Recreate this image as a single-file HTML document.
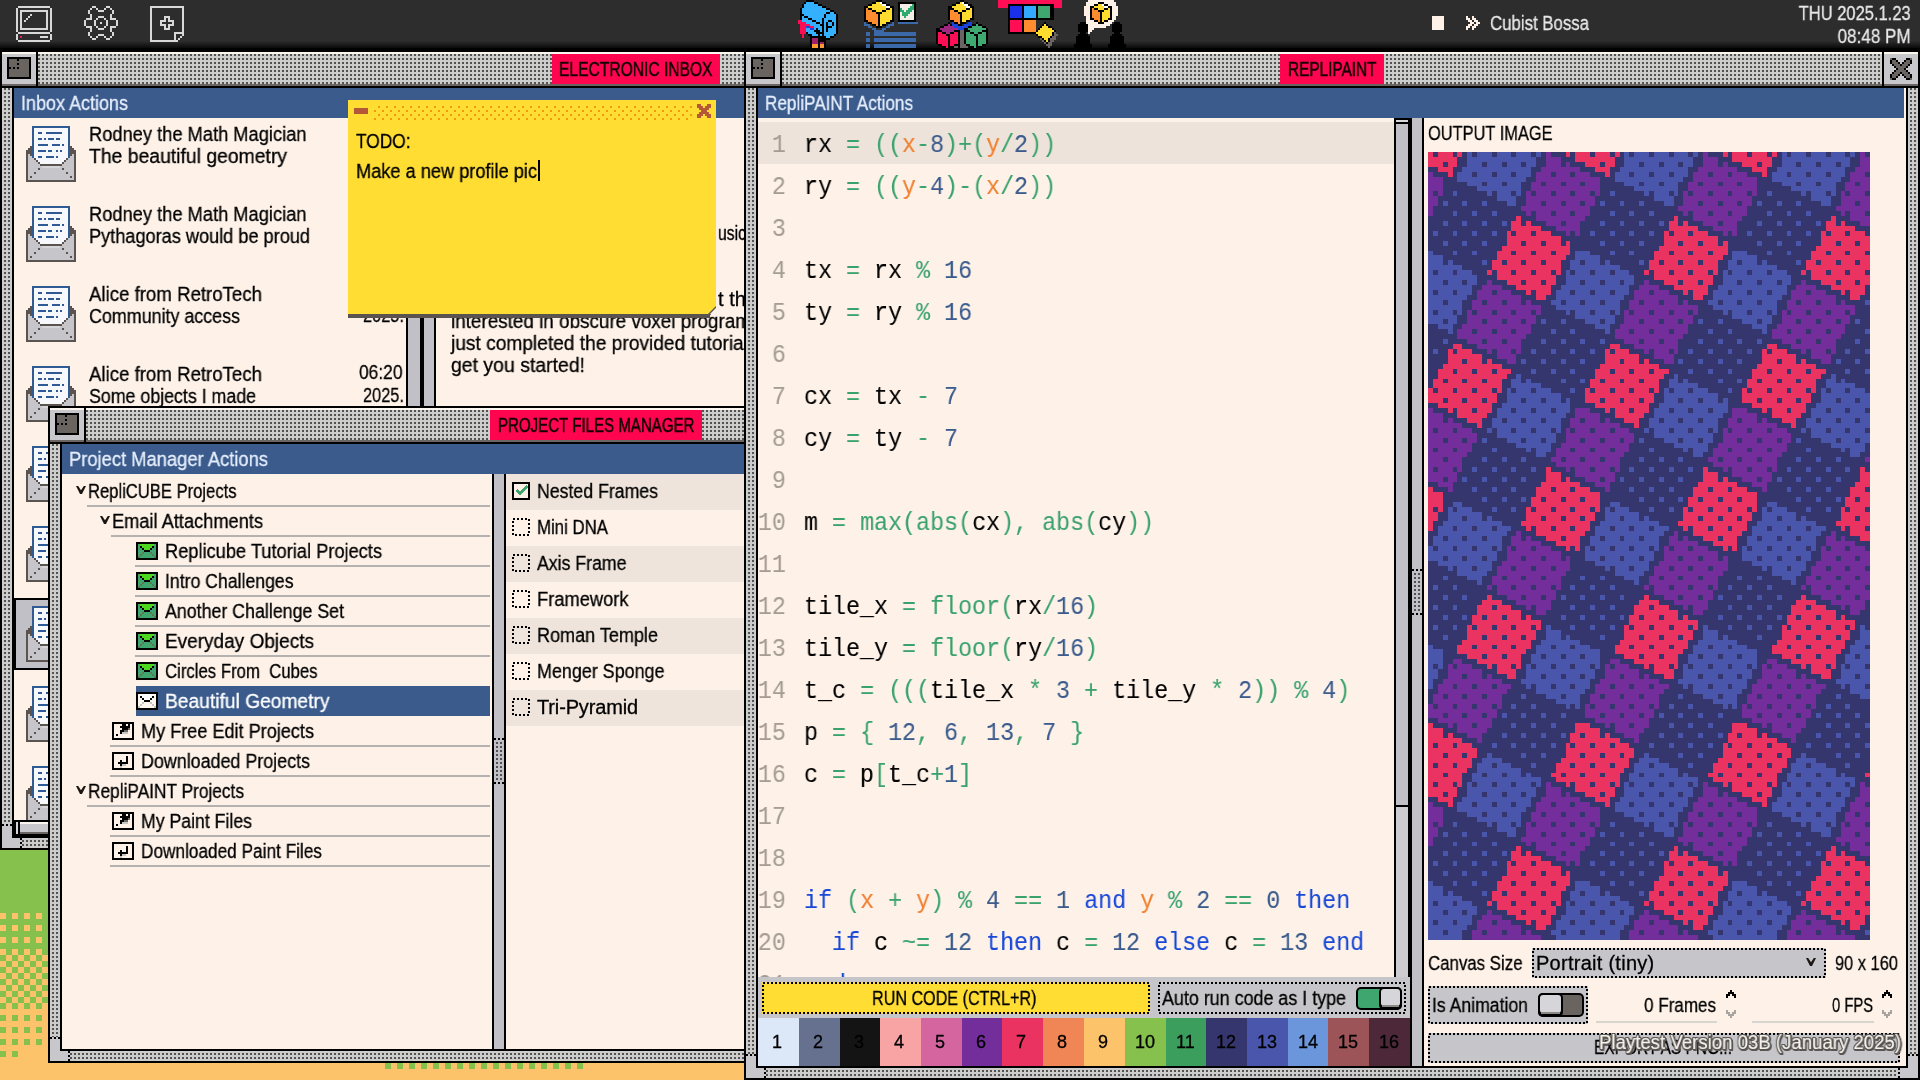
<!DOCTYPE html>
<html lang="en"><head><meta charset="utf-8"><title>RepliPAINT desktop</title>
<style>
html,body{margin:0;padding:0;background:#fcc36b;}
#screen{position:relative;width:1920px;height:1080px;overflow:hidden;background:#fcc36b;font-family:'Liberation Sans',sans-serif;}
#screen div,#screen span,#screen svg{position:absolute;}
#screen span{white-space:pre;-webkit-text-stroke:0.3px;will-change:transform;}
#screen div.clip{overflow:hidden;}
#screen div.clip span{-webkit-text-stroke:0.1px;}

</style></head>
<body>
<div id="screen">
<div style="left:0px;top:0px;width:1920px;height:1080px;background:#fcc36b;"></div>
<div style="left:0px;top:848px;width:60px;height:107px;background:#86c04d;"></div>
<div style="left:0;top:913px;width:48px;height:42px;background-image:linear-gradient(90deg,transparent 50%,#86c04d 50%),linear-gradient(#fcc36b 50%,#86c04d 50%);background-size:12px 12px;"></div>
<div style="left:0;top:955px;width:48px;height:48px;background-image:conic-gradient(#fcc36b 25%,#86c04d 0 50%,#fcc36b 0 75%,#86c04d 0);background-size:12px 12px;"></div>
<div style="left:0;top:1003px;width:48px;height:48px;background-image:linear-gradient(90deg,transparent 50%,#fcc36b 50%),linear-gradient(#86c04d 50%,#fcc36b 50%);background-size:12px 12px;"></div>
<div style="left:0px;top:1051px;width:6px;height:6px;background:#86c04d;"></div>
<div style="left:12px;top:1051px;width:6px;height:6px;background:#86c04d;"></div>
<div style="left:385px;top:1063px;width:6px;height:6px;background:#86c04d;"></div>
<div style="left:397px;top:1063px;width:6px;height:6px;background:#86c04d;"></div>
<div style="left:409px;top:1063px;width:6px;height:6px;background:#86c04d;"></div>
<div style="left:421px;top:1063px;width:6px;height:6px;background:#86c04d;"></div>
<div style="left:433px;top:1063px;width:6px;height:6px;background:#86c04d;"></div>
<div style="left:445px;top:1063px;width:6px;height:6px;background:#86c04d;"></div>
<div style="left:457px;top:1063px;width:6px;height:6px;background:#86c04d;"></div>
<div style="left:469px;top:1063px;width:6px;height:6px;background:#86c04d;"></div>
<div style="left:481px;top:1063px;width:6px;height:6px;background:#86c04d;"></div>
<div style="left:493px;top:1063px;width:6px;height:6px;background:#86c04d;"></div>
<div style="left:505px;top:1063px;width:6px;height:6px;background:#86c04d;"></div>
<div style="left:517px;top:1063px;width:6px;height:6px;background:#86c04d;"></div>
<div style="left:529px;top:1063px;width:6px;height:6px;background:#86c04d;"></div>
<div style="left:541px;top:1063px;width:6px;height:6px;background:#86c04d;"></div>
<div style="left:553px;top:1063px;width:6px;height:6px;background:#86c04d;"></div>
<div style="left:565px;top:1063px;width:6px;height:6px;background:#86c04d;"></div>
<div style="left:577px;top:1063px;width:6px;height:6px;background:#86c04d;"></div>
<div style="left:0px;top:0px;width:1920px;height:48px;background:#2d2d2d;"></div>
<div style="left:0px;top:41px;width:1920px;height:7px;background:linear-gradient(#2d2d2d,#0a0a0a);"></div>
<div style="left:0px;top:50px;width:746px;height:800px;background:#000;"></div>
<div style="left:2px;top:52px;width:744px;height:36px;background:#000;"></div>
<div style="left:2px;top:52px;width:34px;height:32px;background:#c8c8cc;"></div>
<div style="left:2px;top:52px;width:34px;height:2px;background:#fbf5f0;"></div>
<div style="left:2px;top:84px;width:34px;height:2px;background:#6a6563;"></div>
<div style="left:7px;top:57px;width:24px;height:22px;background:#000;"></div>
<div style="left:9px;top:59px;width:20px;height:18px;background:#6a6461;"></div>
<div style="left:17px;top:59px;width:2px;height:2px;background:#000;"></div>
<div style="left:17px;top:63px;width:2px;height:2px;background:#000;"></div>
<div style="left:9px;top:67px;width:2px;height:2px;background:#000;"></div>
<div style="left:13px;top:67px;width:2px;height:2px;background:#000;"></div>
<div style="left:17px;top:67px;width:2px;height:2px;background:#000;"></div>
<div style="left:38px;top:52px;width:708px;height:32px;background-color:#cccccc;background-image:linear-gradient(90deg,#cccccc 50%,transparent 50%),linear-gradient(#cccccc 50%,#52524e 50%);background-size:4px 4px;background-position:2px 0px;"></div>
<div style="left:38px;top:52px;width:708px;height:2px;background:#fbf5f0;"></div>
<div style="left:38px;top:84px;width:708px;height:2px;background:#6a6563;"></div>
<div style="left:552px;top:54px;width:168px;height:30px;background:#ff0550;"></div>
<span style="left:559px;top:59.07px;font:normal 20px/1 'Liberation Sans',sans-serif;color:#140006;transform:scaleX(0.7804);transform-origin:left center;-webkit-text-stroke:0.5px #140006;">ELECTRONIC INBOX</span>
<div style="left:2px;top:88px;width:10px;height:750px;background-color:#cccccc;background-image:linear-gradient(90deg,#cccccc 50%,transparent 50%),linear-gradient(#cccccc 50%,#52524e 50%);background-size:4px 4px;background-position:0px 2px;"></div>
<div style="left:14px;top:88px;width:732px;height:30px;background:#3a5b8c;"></div>
<span style="left:21px;top:93.07px;font:normal 20px/1 'Liberation Sans',sans-serif;color:#e6eefc;transform:scaleX(0.8994);transform-origin:left center;">Inbox Actions</span>
<div style="left:14px;top:118px;width:732px;height:702px;background:#fdf1e8;"></div>
<svg style="left:26px;top:126px" width="50" height="56" viewBox="0 0 25 28" shape-rendering="crispEdges"><path fill="#2f5a94" d="M3 0h19v1h-19zM3 1h1v1h-1zM21 1h1v1h-1zM3 2h1v1h-1zM21 2h1v1h-1zM3 3h1v1h-1zM6 3h2v1h-2zM10 3h8v1h-8zM21 3h1v1h-1zM3 4h1v1h-1zM21 4h1v1h-1zM3 5h1v1h-1zM21 5h1v1h-1zM3 6h1v1h-1zM6 6h2v1h-2zM9 6h1v1h-1zM11 6h3v1h-3zM15 6h2v1h-2zM21 6h1v1h-1zM3 7h1v1h-1zM21 7h1v1h-1zM3 8h1v1h-1zM21 8h1v1h-1zM3 9h1v1h-1zM6 9h5v1h-5zM13 9h4v1h-4zM18 9h1v1h-1zM21 9h1v1h-1zM3 10h1v1h-1zM21 10h1v1h-1zM3 11h1v1h-1zM21 11h1v1h-1zM3 12h1v1h-1zM6 12h4v1h-4zM11 12h2v1h-2zM15 12h1v1h-1zM17 12h1v1h-1zM21 12h1v1h-1zM3 13h1v1h-1zM21 13h1v1h-1zM3 14h1v1h-1zM21 14h1v1h-1zM3 15h1v1h-1zM6 15h2v1h-2zM10 15h4v1h-4zM15 15h1v1h-1zM21 15h1v1h-1z"/><path fill="#f6f8fc" d="M4 1h17v1h-17zM4 2h17v1h-17zM4 3h2v1h-2zM8 3h2v1h-2zM18 3h3v1h-3zM4 4h17v1h-17zM4 5h17v1h-17zM4 6h2v1h-2zM8 6h1v1h-1zM10 6h1v1h-1zM14 6h1v1h-1zM17 6h4v1h-4zM4 7h17v1h-17zM4 8h17v1h-17zM4 9h2v1h-2zM11 9h2v1h-2zM17 9h1v1h-1zM19 9h2v1h-2zM4 10h17v1h-17zM4 11h17v1h-17zM4 12h2v1h-2zM10 12h1v1h-1zM13 12h2v1h-2zM16 12h1v1h-1zM18 12h3v1h-3zM4 13h17v1h-17zM4 14h17v1h-17zM4 15h2v1h-2zM8 15h2v1h-2zM14 15h1v1h-1zM16 15h5v1h-5zM5 16h15v1h-15zM6 17h13v1h-13zM7 18h11v1h-11z"/><path fill="#5a5350" d="M2 10h1v1h-1zM22 10h1v1h-1zM1 11h2v1h-2zM22 11h2v1h-2zM0 12h3v1h-3zM22 12h3v1h-3zM0 13h3v1h-3zM22 13h3v1h-3zM0 14h1v1h-1zM2 14h1v1h-1zM22 14h1v1h-1zM24 14h1v1h-1zM0 15h1v1h-1zM24 15h1v1h-1zM0 16h1v1h-1zM4 16h1v1h-1zM20 16h1v1h-1zM24 16h1v1h-1zM0 17h1v1h-1zM5 17h1v1h-1zM19 17h1v1h-1zM24 17h1v1h-1zM0 18h1v1h-1zM6 18h1v1h-1zM18 18h1v1h-1zM24 18h1v1h-1zM0 19h1v1h-1zM7 19h11v1h-11zM24 19h1v1h-1zM0 20h1v1h-1zM24 20h1v1h-1zM0 21h1v1h-1zM6 21h1v1h-1zM18 21h1v1h-1zM24 21h1v1h-1zM0 22h1v1h-1zM24 22h1v1h-1zM0 23h1v1h-1zM4 23h1v1h-1zM20 23h1v1h-1zM24 23h1v1h-1zM0 24h1v1h-1zM24 24h1v1h-1zM0 25h1v1h-1zM2 25h1v1h-1zM22 25h1v1h-1zM24 25h1v1h-1zM0 26h1v1h-1zM24 26h1v1h-1zM0 27h25v1h-25z"/><path fill="#c6c6ca" d="M1 14h1v1h-1zM23 14h1v1h-1zM1 15h2v1h-2zM22 15h2v1h-2zM1 16h3v1h-3zM21 16h3v1h-3zM1 17h4v1h-4zM20 17h4v1h-4zM1 18h5v1h-5zM19 18h5v1h-5zM1 19h6v1h-6zM18 19h6v1h-6zM1 20h7v1h-7zM17 20h7v1h-7zM1 21h5v1h-5zM7 21h11v1h-11zM19 21h5v1h-5zM1 22h23v1h-23zM1 23h3v1h-3zM5 23h15v1h-15zM21 23h3v1h-3zM1 24h23v1h-23zM1 25h1v1h-1zM3 25h19v1h-19zM23 25h1v1h-1zM1 26h23v1h-23z"/><path fill="#d6d6da" d="M8 20h9v1h-9z"/></svg>
<span style="left:89px;top:123.57px;font:normal 20px/1 'Liberation Sans',sans-serif;color:#000;transform:scaleX(0.9142);transform-origin:left center;">Rodney the Math Magician</span>
<span style="left:89px;top:145.57px;font:normal 20px/1 'Liberation Sans',sans-serif;color:#000;transform:scaleX(0.9679);transform-origin:left center;">The beautiful geometry</span>
<svg style="left:26px;top:206px" width="50" height="56" viewBox="0 0 25 28" shape-rendering="crispEdges"><path fill="#2f5a94" d="M3 0h19v1h-19zM3 1h1v1h-1zM21 1h1v1h-1zM3 2h1v1h-1zM21 2h1v1h-1zM3 3h1v1h-1zM6 3h2v1h-2zM10 3h8v1h-8zM21 3h1v1h-1zM3 4h1v1h-1zM21 4h1v1h-1zM3 5h1v1h-1zM21 5h1v1h-1zM3 6h1v1h-1zM6 6h2v1h-2zM9 6h1v1h-1zM11 6h3v1h-3zM15 6h2v1h-2zM21 6h1v1h-1zM3 7h1v1h-1zM21 7h1v1h-1zM3 8h1v1h-1zM21 8h1v1h-1zM3 9h1v1h-1zM6 9h5v1h-5zM13 9h4v1h-4zM18 9h1v1h-1zM21 9h1v1h-1zM3 10h1v1h-1zM21 10h1v1h-1zM3 11h1v1h-1zM21 11h1v1h-1zM3 12h1v1h-1zM6 12h4v1h-4zM11 12h2v1h-2zM15 12h1v1h-1zM17 12h1v1h-1zM21 12h1v1h-1zM3 13h1v1h-1zM21 13h1v1h-1zM3 14h1v1h-1zM21 14h1v1h-1zM3 15h1v1h-1zM6 15h2v1h-2zM10 15h4v1h-4zM15 15h1v1h-1zM21 15h1v1h-1z"/><path fill="#f6f8fc" d="M4 1h17v1h-17zM4 2h17v1h-17zM4 3h2v1h-2zM8 3h2v1h-2zM18 3h3v1h-3zM4 4h17v1h-17zM4 5h17v1h-17zM4 6h2v1h-2zM8 6h1v1h-1zM10 6h1v1h-1zM14 6h1v1h-1zM17 6h4v1h-4zM4 7h17v1h-17zM4 8h17v1h-17zM4 9h2v1h-2zM11 9h2v1h-2zM17 9h1v1h-1zM19 9h2v1h-2zM4 10h17v1h-17zM4 11h17v1h-17zM4 12h2v1h-2zM10 12h1v1h-1zM13 12h2v1h-2zM16 12h1v1h-1zM18 12h3v1h-3zM4 13h17v1h-17zM4 14h17v1h-17zM4 15h2v1h-2zM8 15h2v1h-2zM14 15h1v1h-1zM16 15h5v1h-5zM5 16h15v1h-15zM6 17h13v1h-13zM7 18h11v1h-11z"/><path fill="#5a5350" d="M2 10h1v1h-1zM22 10h1v1h-1zM1 11h2v1h-2zM22 11h2v1h-2zM0 12h3v1h-3zM22 12h3v1h-3zM0 13h3v1h-3zM22 13h3v1h-3zM0 14h1v1h-1zM2 14h1v1h-1zM22 14h1v1h-1zM24 14h1v1h-1zM0 15h1v1h-1zM24 15h1v1h-1zM0 16h1v1h-1zM4 16h1v1h-1zM20 16h1v1h-1zM24 16h1v1h-1zM0 17h1v1h-1zM5 17h1v1h-1zM19 17h1v1h-1zM24 17h1v1h-1zM0 18h1v1h-1zM6 18h1v1h-1zM18 18h1v1h-1zM24 18h1v1h-1zM0 19h1v1h-1zM7 19h11v1h-11zM24 19h1v1h-1zM0 20h1v1h-1zM24 20h1v1h-1zM0 21h1v1h-1zM6 21h1v1h-1zM18 21h1v1h-1zM24 21h1v1h-1zM0 22h1v1h-1zM24 22h1v1h-1zM0 23h1v1h-1zM4 23h1v1h-1zM20 23h1v1h-1zM24 23h1v1h-1zM0 24h1v1h-1zM24 24h1v1h-1zM0 25h1v1h-1zM2 25h1v1h-1zM22 25h1v1h-1zM24 25h1v1h-1zM0 26h1v1h-1zM24 26h1v1h-1zM0 27h25v1h-25z"/><path fill="#c6c6ca" d="M1 14h1v1h-1zM23 14h1v1h-1zM1 15h2v1h-2zM22 15h2v1h-2zM1 16h3v1h-3zM21 16h3v1h-3zM1 17h4v1h-4zM20 17h4v1h-4zM1 18h5v1h-5zM19 18h5v1h-5zM1 19h6v1h-6zM18 19h6v1h-6zM1 20h7v1h-7zM17 20h7v1h-7zM1 21h5v1h-5zM7 21h11v1h-11zM19 21h5v1h-5zM1 22h23v1h-23zM1 23h3v1h-3zM5 23h15v1h-15zM21 23h3v1h-3zM1 24h23v1h-23zM1 25h1v1h-1zM3 25h19v1h-19zM23 25h1v1h-1zM1 26h23v1h-23z"/><path fill="#d6d6da" d="M8 20h9v1h-9z"/></svg>
<span style="left:89px;top:203.57px;font:normal 20px/1 'Liberation Sans',sans-serif;color:#000;transform:scaleX(0.9142);transform-origin:left center;">Rodney the Math Magician</span>
<span style="left:89px;top:225.57px;font:normal 20px/1 'Liberation Sans',sans-serif;color:#000;transform:scaleX(0.9076);transform-origin:left center;">Pythagoras would be proud</span>
<svg style="left:26px;top:286px" width="50" height="56" viewBox="0 0 25 28" shape-rendering="crispEdges"><path fill="#2f5a94" d="M3 0h19v1h-19zM3 1h1v1h-1zM21 1h1v1h-1zM3 2h1v1h-1zM21 2h1v1h-1zM3 3h1v1h-1zM6 3h2v1h-2zM10 3h8v1h-8zM21 3h1v1h-1zM3 4h1v1h-1zM21 4h1v1h-1zM3 5h1v1h-1zM21 5h1v1h-1zM3 6h1v1h-1zM6 6h2v1h-2zM9 6h1v1h-1zM11 6h3v1h-3zM15 6h2v1h-2zM21 6h1v1h-1zM3 7h1v1h-1zM21 7h1v1h-1zM3 8h1v1h-1zM21 8h1v1h-1zM3 9h1v1h-1zM6 9h5v1h-5zM13 9h4v1h-4zM18 9h1v1h-1zM21 9h1v1h-1zM3 10h1v1h-1zM21 10h1v1h-1zM3 11h1v1h-1zM21 11h1v1h-1zM3 12h1v1h-1zM6 12h4v1h-4zM11 12h2v1h-2zM15 12h1v1h-1zM17 12h1v1h-1zM21 12h1v1h-1zM3 13h1v1h-1zM21 13h1v1h-1zM3 14h1v1h-1zM21 14h1v1h-1zM3 15h1v1h-1zM6 15h2v1h-2zM10 15h4v1h-4zM15 15h1v1h-1zM21 15h1v1h-1z"/><path fill="#f6f8fc" d="M4 1h17v1h-17zM4 2h17v1h-17zM4 3h2v1h-2zM8 3h2v1h-2zM18 3h3v1h-3zM4 4h17v1h-17zM4 5h17v1h-17zM4 6h2v1h-2zM8 6h1v1h-1zM10 6h1v1h-1zM14 6h1v1h-1zM17 6h4v1h-4zM4 7h17v1h-17zM4 8h17v1h-17zM4 9h2v1h-2zM11 9h2v1h-2zM17 9h1v1h-1zM19 9h2v1h-2zM4 10h17v1h-17zM4 11h17v1h-17zM4 12h2v1h-2zM10 12h1v1h-1zM13 12h2v1h-2zM16 12h1v1h-1zM18 12h3v1h-3zM4 13h17v1h-17zM4 14h17v1h-17zM4 15h2v1h-2zM8 15h2v1h-2zM14 15h1v1h-1zM16 15h5v1h-5zM5 16h15v1h-15zM6 17h13v1h-13zM7 18h11v1h-11z"/><path fill="#5a5350" d="M2 10h1v1h-1zM22 10h1v1h-1zM1 11h2v1h-2zM22 11h2v1h-2zM0 12h3v1h-3zM22 12h3v1h-3zM0 13h3v1h-3zM22 13h3v1h-3zM0 14h1v1h-1zM2 14h1v1h-1zM22 14h1v1h-1zM24 14h1v1h-1zM0 15h1v1h-1zM24 15h1v1h-1zM0 16h1v1h-1zM4 16h1v1h-1zM20 16h1v1h-1zM24 16h1v1h-1zM0 17h1v1h-1zM5 17h1v1h-1zM19 17h1v1h-1zM24 17h1v1h-1zM0 18h1v1h-1zM6 18h1v1h-1zM18 18h1v1h-1zM24 18h1v1h-1zM0 19h1v1h-1zM7 19h11v1h-11zM24 19h1v1h-1zM0 20h1v1h-1zM24 20h1v1h-1zM0 21h1v1h-1zM6 21h1v1h-1zM18 21h1v1h-1zM24 21h1v1h-1zM0 22h1v1h-1zM24 22h1v1h-1zM0 23h1v1h-1zM4 23h1v1h-1zM20 23h1v1h-1zM24 23h1v1h-1zM0 24h1v1h-1zM24 24h1v1h-1zM0 25h1v1h-1zM2 25h1v1h-1zM22 25h1v1h-1zM24 25h1v1h-1zM0 26h1v1h-1zM24 26h1v1h-1zM0 27h25v1h-25z"/><path fill="#c6c6ca" d="M1 14h1v1h-1zM23 14h1v1h-1zM1 15h2v1h-2zM22 15h2v1h-2zM1 16h3v1h-3zM21 16h3v1h-3zM1 17h4v1h-4zM20 17h4v1h-4zM1 18h5v1h-5zM19 18h5v1h-5zM1 19h6v1h-6zM18 19h6v1h-6zM1 20h7v1h-7zM17 20h7v1h-7zM1 21h5v1h-5zM7 21h11v1h-11zM19 21h5v1h-5zM1 22h23v1h-23zM1 23h3v1h-3zM5 23h15v1h-15zM21 23h3v1h-3zM1 24h23v1h-23zM1 25h1v1h-1zM3 25h19v1h-19zM23 25h1v1h-1zM1 26h23v1h-23z"/><path fill="#d6d6da" d="M8 20h9v1h-9z"/></svg>
<span style="left:89px;top:283.57px;font:normal 20px/1 'Liberation Sans',sans-serif;color:#000;transform:scaleX(0.9320);transform-origin:left center;">Alice from RetroTech</span>
<span style="left:89px;top:305.57px;font:normal 20px/1 'Liberation Sans',sans-serif;color:#000;transform:scaleX(0.8938);transform-origin:left center;">Community access</span>
<svg style="left:26px;top:366px" width="50" height="56" viewBox="0 0 25 28" shape-rendering="crispEdges"><path fill="#2f5a94" d="M3 0h19v1h-19zM3 1h1v1h-1zM21 1h1v1h-1zM3 2h1v1h-1zM21 2h1v1h-1zM3 3h1v1h-1zM6 3h2v1h-2zM10 3h8v1h-8zM21 3h1v1h-1zM3 4h1v1h-1zM21 4h1v1h-1zM3 5h1v1h-1zM21 5h1v1h-1zM3 6h1v1h-1zM6 6h2v1h-2zM9 6h1v1h-1zM11 6h3v1h-3zM15 6h2v1h-2zM21 6h1v1h-1zM3 7h1v1h-1zM21 7h1v1h-1zM3 8h1v1h-1zM21 8h1v1h-1zM3 9h1v1h-1zM6 9h5v1h-5zM13 9h4v1h-4zM18 9h1v1h-1zM21 9h1v1h-1zM3 10h1v1h-1zM21 10h1v1h-1zM3 11h1v1h-1zM21 11h1v1h-1zM3 12h1v1h-1zM6 12h4v1h-4zM11 12h2v1h-2zM15 12h1v1h-1zM17 12h1v1h-1zM21 12h1v1h-1zM3 13h1v1h-1zM21 13h1v1h-1zM3 14h1v1h-1zM21 14h1v1h-1zM3 15h1v1h-1zM6 15h2v1h-2zM10 15h4v1h-4zM15 15h1v1h-1zM21 15h1v1h-1z"/><path fill="#f6f8fc" d="M4 1h17v1h-17zM4 2h17v1h-17zM4 3h2v1h-2zM8 3h2v1h-2zM18 3h3v1h-3zM4 4h17v1h-17zM4 5h17v1h-17zM4 6h2v1h-2zM8 6h1v1h-1zM10 6h1v1h-1zM14 6h1v1h-1zM17 6h4v1h-4zM4 7h17v1h-17zM4 8h17v1h-17zM4 9h2v1h-2zM11 9h2v1h-2zM17 9h1v1h-1zM19 9h2v1h-2zM4 10h17v1h-17zM4 11h17v1h-17zM4 12h2v1h-2zM10 12h1v1h-1zM13 12h2v1h-2zM16 12h1v1h-1zM18 12h3v1h-3zM4 13h17v1h-17zM4 14h17v1h-17zM4 15h2v1h-2zM8 15h2v1h-2zM14 15h1v1h-1zM16 15h5v1h-5zM5 16h15v1h-15zM6 17h13v1h-13zM7 18h11v1h-11z"/><path fill="#5a5350" d="M2 10h1v1h-1zM22 10h1v1h-1zM1 11h2v1h-2zM22 11h2v1h-2zM0 12h3v1h-3zM22 12h3v1h-3zM0 13h3v1h-3zM22 13h3v1h-3zM0 14h1v1h-1zM2 14h1v1h-1zM22 14h1v1h-1zM24 14h1v1h-1zM0 15h1v1h-1zM24 15h1v1h-1zM0 16h1v1h-1zM4 16h1v1h-1zM20 16h1v1h-1zM24 16h1v1h-1zM0 17h1v1h-1zM5 17h1v1h-1zM19 17h1v1h-1zM24 17h1v1h-1zM0 18h1v1h-1zM6 18h1v1h-1zM18 18h1v1h-1zM24 18h1v1h-1zM0 19h1v1h-1zM7 19h11v1h-11zM24 19h1v1h-1zM0 20h1v1h-1zM24 20h1v1h-1zM0 21h1v1h-1zM6 21h1v1h-1zM18 21h1v1h-1zM24 21h1v1h-1zM0 22h1v1h-1zM24 22h1v1h-1zM0 23h1v1h-1zM4 23h1v1h-1zM20 23h1v1h-1zM24 23h1v1h-1zM0 24h1v1h-1zM24 24h1v1h-1zM0 25h1v1h-1zM2 25h1v1h-1zM22 25h1v1h-1zM24 25h1v1h-1zM0 26h1v1h-1zM24 26h1v1h-1zM0 27h25v1h-25z"/><path fill="#c6c6ca" d="M1 14h1v1h-1zM23 14h1v1h-1zM1 15h2v1h-2zM22 15h2v1h-2zM1 16h3v1h-3zM21 16h3v1h-3zM1 17h4v1h-4zM20 17h4v1h-4zM1 18h5v1h-5zM19 18h5v1h-5zM1 19h6v1h-6zM18 19h6v1h-6zM1 20h7v1h-7zM17 20h7v1h-7zM1 21h5v1h-5zM7 21h11v1h-11zM19 21h5v1h-5zM1 22h23v1h-23zM1 23h3v1h-3zM5 23h15v1h-15zM21 23h3v1h-3zM1 24h23v1h-23zM1 25h1v1h-1zM3 25h19v1h-19zM23 25h1v1h-1zM1 26h23v1h-23z"/><path fill="#d6d6da" d="M8 20h9v1h-9z"/></svg>
<span style="left:89px;top:363.57px;font:normal 20px/1 'Liberation Sans',sans-serif;color:#000;transform:scaleX(0.9320);transform-origin:left center;">Alice from RetroTech</span>
<span style="left:89px;top:385.57px;font:normal 20px/1 'Liberation Sans',sans-serif;color:#000;transform:scaleX(0.8889);transform-origin:left center;">Some objects I made</span>
<svg style="left:26px;top:446px" width="50" height="56" viewBox="0 0 25 28" shape-rendering="crispEdges"><path fill="#2f5a94" d="M3 0h19v1h-19zM3 1h1v1h-1zM21 1h1v1h-1zM3 2h1v1h-1zM21 2h1v1h-1zM3 3h1v1h-1zM6 3h2v1h-2zM10 3h8v1h-8zM21 3h1v1h-1zM3 4h1v1h-1zM21 4h1v1h-1zM3 5h1v1h-1zM21 5h1v1h-1zM3 6h1v1h-1zM6 6h2v1h-2zM9 6h1v1h-1zM11 6h3v1h-3zM15 6h2v1h-2zM21 6h1v1h-1zM3 7h1v1h-1zM21 7h1v1h-1zM3 8h1v1h-1zM21 8h1v1h-1zM3 9h1v1h-1zM6 9h5v1h-5zM13 9h4v1h-4zM18 9h1v1h-1zM21 9h1v1h-1zM3 10h1v1h-1zM21 10h1v1h-1zM3 11h1v1h-1zM21 11h1v1h-1zM3 12h1v1h-1zM6 12h4v1h-4zM11 12h2v1h-2zM15 12h1v1h-1zM17 12h1v1h-1zM21 12h1v1h-1zM3 13h1v1h-1zM21 13h1v1h-1zM3 14h1v1h-1zM21 14h1v1h-1zM3 15h1v1h-1zM6 15h2v1h-2zM10 15h4v1h-4zM15 15h1v1h-1zM21 15h1v1h-1z"/><path fill="#f6f8fc" d="M4 1h17v1h-17zM4 2h17v1h-17zM4 3h2v1h-2zM8 3h2v1h-2zM18 3h3v1h-3zM4 4h17v1h-17zM4 5h17v1h-17zM4 6h2v1h-2zM8 6h1v1h-1zM10 6h1v1h-1zM14 6h1v1h-1zM17 6h4v1h-4zM4 7h17v1h-17zM4 8h17v1h-17zM4 9h2v1h-2zM11 9h2v1h-2zM17 9h1v1h-1zM19 9h2v1h-2zM4 10h17v1h-17zM4 11h17v1h-17zM4 12h2v1h-2zM10 12h1v1h-1zM13 12h2v1h-2zM16 12h1v1h-1zM18 12h3v1h-3zM4 13h17v1h-17zM4 14h17v1h-17zM4 15h2v1h-2zM8 15h2v1h-2zM14 15h1v1h-1zM16 15h5v1h-5zM5 16h15v1h-15zM6 17h13v1h-13zM7 18h11v1h-11z"/><path fill="#5a5350" d="M2 10h1v1h-1zM22 10h1v1h-1zM1 11h2v1h-2zM22 11h2v1h-2zM0 12h3v1h-3zM22 12h3v1h-3zM0 13h3v1h-3zM22 13h3v1h-3zM0 14h1v1h-1zM2 14h1v1h-1zM22 14h1v1h-1zM24 14h1v1h-1zM0 15h1v1h-1zM24 15h1v1h-1zM0 16h1v1h-1zM4 16h1v1h-1zM20 16h1v1h-1zM24 16h1v1h-1zM0 17h1v1h-1zM5 17h1v1h-1zM19 17h1v1h-1zM24 17h1v1h-1zM0 18h1v1h-1zM6 18h1v1h-1zM18 18h1v1h-1zM24 18h1v1h-1zM0 19h1v1h-1zM7 19h11v1h-11zM24 19h1v1h-1zM0 20h1v1h-1zM24 20h1v1h-1zM0 21h1v1h-1zM6 21h1v1h-1zM18 21h1v1h-1zM24 21h1v1h-1zM0 22h1v1h-1zM24 22h1v1h-1zM0 23h1v1h-1zM4 23h1v1h-1zM20 23h1v1h-1zM24 23h1v1h-1zM0 24h1v1h-1zM24 24h1v1h-1zM0 25h1v1h-1zM2 25h1v1h-1zM22 25h1v1h-1zM24 25h1v1h-1zM0 26h1v1h-1zM24 26h1v1h-1zM0 27h25v1h-25z"/><path fill="#c6c6ca" d="M1 14h1v1h-1zM23 14h1v1h-1zM1 15h2v1h-2zM22 15h2v1h-2zM1 16h3v1h-3zM21 16h3v1h-3zM1 17h4v1h-4zM20 17h4v1h-4zM1 18h5v1h-5zM19 18h5v1h-5zM1 19h6v1h-6zM18 19h6v1h-6zM1 20h7v1h-7zM17 20h7v1h-7zM1 21h5v1h-5zM7 21h11v1h-11zM19 21h5v1h-5zM1 22h23v1h-23zM1 23h3v1h-3zM5 23h15v1h-15zM21 23h3v1h-3zM1 24h23v1h-23zM1 25h1v1h-1zM3 25h19v1h-19zM23 25h1v1h-1zM1 26h23v1h-23z"/><path fill="#d6d6da" d="M8 20h9v1h-9z"/></svg>
<svg style="left:26px;top:526px" width="50" height="56" viewBox="0 0 25 28" shape-rendering="crispEdges"><path fill="#2f5a94" d="M3 0h19v1h-19zM3 1h1v1h-1zM21 1h1v1h-1zM3 2h1v1h-1zM21 2h1v1h-1zM3 3h1v1h-1zM6 3h2v1h-2zM10 3h8v1h-8zM21 3h1v1h-1zM3 4h1v1h-1zM21 4h1v1h-1zM3 5h1v1h-1zM21 5h1v1h-1zM3 6h1v1h-1zM6 6h2v1h-2zM9 6h1v1h-1zM11 6h3v1h-3zM15 6h2v1h-2zM21 6h1v1h-1zM3 7h1v1h-1zM21 7h1v1h-1zM3 8h1v1h-1zM21 8h1v1h-1zM3 9h1v1h-1zM6 9h5v1h-5zM13 9h4v1h-4zM18 9h1v1h-1zM21 9h1v1h-1zM3 10h1v1h-1zM21 10h1v1h-1zM3 11h1v1h-1zM21 11h1v1h-1zM3 12h1v1h-1zM6 12h4v1h-4zM11 12h2v1h-2zM15 12h1v1h-1zM17 12h1v1h-1zM21 12h1v1h-1zM3 13h1v1h-1zM21 13h1v1h-1zM3 14h1v1h-1zM21 14h1v1h-1zM3 15h1v1h-1zM6 15h2v1h-2zM10 15h4v1h-4zM15 15h1v1h-1zM21 15h1v1h-1z"/><path fill="#f6f8fc" d="M4 1h17v1h-17zM4 2h17v1h-17zM4 3h2v1h-2zM8 3h2v1h-2zM18 3h3v1h-3zM4 4h17v1h-17zM4 5h17v1h-17zM4 6h2v1h-2zM8 6h1v1h-1zM10 6h1v1h-1zM14 6h1v1h-1zM17 6h4v1h-4zM4 7h17v1h-17zM4 8h17v1h-17zM4 9h2v1h-2zM11 9h2v1h-2zM17 9h1v1h-1zM19 9h2v1h-2zM4 10h17v1h-17zM4 11h17v1h-17zM4 12h2v1h-2zM10 12h1v1h-1zM13 12h2v1h-2zM16 12h1v1h-1zM18 12h3v1h-3zM4 13h17v1h-17zM4 14h17v1h-17zM4 15h2v1h-2zM8 15h2v1h-2zM14 15h1v1h-1zM16 15h5v1h-5zM5 16h15v1h-15zM6 17h13v1h-13zM7 18h11v1h-11z"/><path fill="#5a5350" d="M2 10h1v1h-1zM22 10h1v1h-1zM1 11h2v1h-2zM22 11h2v1h-2zM0 12h3v1h-3zM22 12h3v1h-3zM0 13h3v1h-3zM22 13h3v1h-3zM0 14h1v1h-1zM2 14h1v1h-1zM22 14h1v1h-1zM24 14h1v1h-1zM0 15h1v1h-1zM24 15h1v1h-1zM0 16h1v1h-1zM4 16h1v1h-1zM20 16h1v1h-1zM24 16h1v1h-1zM0 17h1v1h-1zM5 17h1v1h-1zM19 17h1v1h-1zM24 17h1v1h-1zM0 18h1v1h-1zM6 18h1v1h-1zM18 18h1v1h-1zM24 18h1v1h-1zM0 19h1v1h-1zM7 19h11v1h-11zM24 19h1v1h-1zM0 20h1v1h-1zM24 20h1v1h-1zM0 21h1v1h-1zM6 21h1v1h-1zM18 21h1v1h-1zM24 21h1v1h-1zM0 22h1v1h-1zM24 22h1v1h-1zM0 23h1v1h-1zM4 23h1v1h-1zM20 23h1v1h-1zM24 23h1v1h-1zM0 24h1v1h-1zM24 24h1v1h-1zM0 25h1v1h-1zM2 25h1v1h-1zM22 25h1v1h-1zM24 25h1v1h-1zM0 26h1v1h-1zM24 26h1v1h-1zM0 27h25v1h-25z"/><path fill="#c6c6ca" d="M1 14h1v1h-1zM23 14h1v1h-1zM1 15h2v1h-2zM22 15h2v1h-2zM1 16h3v1h-3zM21 16h3v1h-3zM1 17h4v1h-4zM20 17h4v1h-4zM1 18h5v1h-5zM19 18h5v1h-5zM1 19h6v1h-6zM18 19h6v1h-6zM1 20h7v1h-7zM17 20h7v1h-7zM1 21h5v1h-5zM7 21h11v1h-11zM19 21h5v1h-5zM1 22h23v1h-23zM1 23h3v1h-3zM5 23h15v1h-15zM21 23h3v1h-3zM1 24h23v1h-23zM1 25h1v1h-1zM3 25h19v1h-19zM23 25h1v1h-1zM1 26h23v1h-23z"/><path fill="#d6d6da" d="M8 20h9v1h-9z"/></svg>
<div style="left:14px;top:598px;width:392px;height:72px;background:#000;"></div>
<div style="left:16px;top:600px;width:388px;height:68px;background:#c0c0c6;"></div>
<svg style="left:26px;top:606px" width="50" height="56" viewBox="0 0 25 28" shape-rendering="crispEdges"><path fill="#2f5a94" d="M3 0h19v1h-19zM3 1h1v1h-1zM21 1h1v1h-1zM3 2h1v1h-1zM21 2h1v1h-1zM3 3h1v1h-1zM6 3h2v1h-2zM10 3h8v1h-8zM21 3h1v1h-1zM3 4h1v1h-1zM21 4h1v1h-1zM3 5h1v1h-1zM21 5h1v1h-1zM3 6h1v1h-1zM6 6h2v1h-2zM9 6h1v1h-1zM11 6h3v1h-3zM15 6h2v1h-2zM21 6h1v1h-1zM3 7h1v1h-1zM21 7h1v1h-1zM3 8h1v1h-1zM21 8h1v1h-1zM3 9h1v1h-1zM6 9h5v1h-5zM13 9h4v1h-4zM18 9h1v1h-1zM21 9h1v1h-1zM3 10h1v1h-1zM21 10h1v1h-1zM3 11h1v1h-1zM21 11h1v1h-1zM3 12h1v1h-1zM6 12h4v1h-4zM11 12h2v1h-2zM15 12h1v1h-1zM17 12h1v1h-1zM21 12h1v1h-1zM3 13h1v1h-1zM21 13h1v1h-1zM3 14h1v1h-1zM21 14h1v1h-1zM3 15h1v1h-1zM6 15h2v1h-2zM10 15h4v1h-4zM15 15h1v1h-1zM21 15h1v1h-1z"/><path fill="#f6f8fc" d="M4 1h17v1h-17zM4 2h17v1h-17zM4 3h2v1h-2zM8 3h2v1h-2zM18 3h3v1h-3zM4 4h17v1h-17zM4 5h17v1h-17zM4 6h2v1h-2zM8 6h1v1h-1zM10 6h1v1h-1zM14 6h1v1h-1zM17 6h4v1h-4zM4 7h17v1h-17zM4 8h17v1h-17zM4 9h2v1h-2zM11 9h2v1h-2zM17 9h1v1h-1zM19 9h2v1h-2zM4 10h17v1h-17zM4 11h17v1h-17zM4 12h2v1h-2zM10 12h1v1h-1zM13 12h2v1h-2zM16 12h1v1h-1zM18 12h3v1h-3zM4 13h17v1h-17zM4 14h17v1h-17zM4 15h2v1h-2zM8 15h2v1h-2zM14 15h1v1h-1zM16 15h5v1h-5zM5 16h15v1h-15zM6 17h13v1h-13zM7 18h11v1h-11z"/><path fill="#5a5350" d="M2 10h1v1h-1zM22 10h1v1h-1zM1 11h2v1h-2zM22 11h2v1h-2zM0 12h3v1h-3zM22 12h3v1h-3zM0 13h3v1h-3zM22 13h3v1h-3zM0 14h1v1h-1zM2 14h1v1h-1zM22 14h1v1h-1zM24 14h1v1h-1zM0 15h1v1h-1zM24 15h1v1h-1zM0 16h1v1h-1zM4 16h1v1h-1zM20 16h1v1h-1zM24 16h1v1h-1zM0 17h1v1h-1zM5 17h1v1h-1zM19 17h1v1h-1zM24 17h1v1h-1zM0 18h1v1h-1zM6 18h1v1h-1zM18 18h1v1h-1zM24 18h1v1h-1zM0 19h1v1h-1zM7 19h11v1h-11zM24 19h1v1h-1zM0 20h1v1h-1zM24 20h1v1h-1zM0 21h1v1h-1zM6 21h1v1h-1zM18 21h1v1h-1zM24 21h1v1h-1zM0 22h1v1h-1zM24 22h1v1h-1zM0 23h1v1h-1zM4 23h1v1h-1zM20 23h1v1h-1zM24 23h1v1h-1zM0 24h1v1h-1zM24 24h1v1h-1zM0 25h1v1h-1zM2 25h1v1h-1zM22 25h1v1h-1zM24 25h1v1h-1zM0 26h1v1h-1zM24 26h1v1h-1zM0 27h25v1h-25z"/><path fill="#c6c6ca" d="M1 14h1v1h-1zM23 14h1v1h-1zM1 15h2v1h-2zM22 15h2v1h-2zM1 16h3v1h-3zM21 16h3v1h-3zM1 17h4v1h-4zM20 17h4v1h-4zM1 18h5v1h-5zM19 18h5v1h-5zM1 19h6v1h-6zM18 19h6v1h-6zM1 20h7v1h-7zM17 20h7v1h-7zM1 21h5v1h-5zM7 21h11v1h-11zM19 21h5v1h-5zM1 22h23v1h-23zM1 23h3v1h-3zM5 23h15v1h-15zM21 23h3v1h-3zM1 24h23v1h-23zM1 25h1v1h-1zM3 25h19v1h-19zM23 25h1v1h-1zM1 26h23v1h-23z"/><path fill="#d6d6da" d="M8 20h9v1h-9z"/></svg>
<svg style="left:26px;top:686px" width="50" height="56" viewBox="0 0 25 28" shape-rendering="crispEdges"><path fill="#2f5a94" d="M3 0h19v1h-19zM3 1h1v1h-1zM21 1h1v1h-1zM3 2h1v1h-1zM21 2h1v1h-1zM3 3h1v1h-1zM6 3h2v1h-2zM10 3h8v1h-8zM21 3h1v1h-1zM3 4h1v1h-1zM21 4h1v1h-1zM3 5h1v1h-1zM21 5h1v1h-1zM3 6h1v1h-1zM6 6h2v1h-2zM9 6h1v1h-1zM11 6h3v1h-3zM15 6h2v1h-2zM21 6h1v1h-1zM3 7h1v1h-1zM21 7h1v1h-1zM3 8h1v1h-1zM21 8h1v1h-1zM3 9h1v1h-1zM6 9h5v1h-5zM13 9h4v1h-4zM18 9h1v1h-1zM21 9h1v1h-1zM3 10h1v1h-1zM21 10h1v1h-1zM3 11h1v1h-1zM21 11h1v1h-1zM3 12h1v1h-1zM6 12h4v1h-4zM11 12h2v1h-2zM15 12h1v1h-1zM17 12h1v1h-1zM21 12h1v1h-1zM3 13h1v1h-1zM21 13h1v1h-1zM3 14h1v1h-1zM21 14h1v1h-1zM3 15h1v1h-1zM6 15h2v1h-2zM10 15h4v1h-4zM15 15h1v1h-1zM21 15h1v1h-1z"/><path fill="#f6f8fc" d="M4 1h17v1h-17zM4 2h17v1h-17zM4 3h2v1h-2zM8 3h2v1h-2zM18 3h3v1h-3zM4 4h17v1h-17zM4 5h17v1h-17zM4 6h2v1h-2zM8 6h1v1h-1zM10 6h1v1h-1zM14 6h1v1h-1zM17 6h4v1h-4zM4 7h17v1h-17zM4 8h17v1h-17zM4 9h2v1h-2zM11 9h2v1h-2zM17 9h1v1h-1zM19 9h2v1h-2zM4 10h17v1h-17zM4 11h17v1h-17zM4 12h2v1h-2zM10 12h1v1h-1zM13 12h2v1h-2zM16 12h1v1h-1zM18 12h3v1h-3zM4 13h17v1h-17zM4 14h17v1h-17zM4 15h2v1h-2zM8 15h2v1h-2zM14 15h1v1h-1zM16 15h5v1h-5zM5 16h15v1h-15zM6 17h13v1h-13zM7 18h11v1h-11z"/><path fill="#5a5350" d="M2 10h1v1h-1zM22 10h1v1h-1zM1 11h2v1h-2zM22 11h2v1h-2zM0 12h3v1h-3zM22 12h3v1h-3zM0 13h3v1h-3zM22 13h3v1h-3zM0 14h1v1h-1zM2 14h1v1h-1zM22 14h1v1h-1zM24 14h1v1h-1zM0 15h1v1h-1zM24 15h1v1h-1zM0 16h1v1h-1zM4 16h1v1h-1zM20 16h1v1h-1zM24 16h1v1h-1zM0 17h1v1h-1zM5 17h1v1h-1zM19 17h1v1h-1zM24 17h1v1h-1zM0 18h1v1h-1zM6 18h1v1h-1zM18 18h1v1h-1zM24 18h1v1h-1zM0 19h1v1h-1zM7 19h11v1h-11zM24 19h1v1h-1zM0 20h1v1h-1zM24 20h1v1h-1zM0 21h1v1h-1zM6 21h1v1h-1zM18 21h1v1h-1zM24 21h1v1h-1zM0 22h1v1h-1zM24 22h1v1h-1zM0 23h1v1h-1zM4 23h1v1h-1zM20 23h1v1h-1zM24 23h1v1h-1zM0 24h1v1h-1zM24 24h1v1h-1zM0 25h1v1h-1zM2 25h1v1h-1zM22 25h1v1h-1zM24 25h1v1h-1zM0 26h1v1h-1zM24 26h1v1h-1zM0 27h25v1h-25z"/><path fill="#c6c6ca" d="M1 14h1v1h-1zM23 14h1v1h-1zM1 15h2v1h-2zM22 15h2v1h-2zM1 16h3v1h-3zM21 16h3v1h-3zM1 17h4v1h-4zM20 17h4v1h-4zM1 18h5v1h-5zM19 18h5v1h-5zM1 19h6v1h-6zM18 19h6v1h-6zM1 20h7v1h-7zM17 20h7v1h-7zM1 21h5v1h-5zM7 21h11v1h-11zM19 21h5v1h-5zM1 22h23v1h-23zM1 23h3v1h-3zM5 23h15v1h-15zM21 23h3v1h-3zM1 24h23v1h-23zM1 25h1v1h-1zM3 25h19v1h-19zM23 25h1v1h-1zM1 26h23v1h-23z"/><path fill="#d6d6da" d="M8 20h9v1h-9z"/></svg>
<svg style="left:26px;top:766px" width="50" height="56" viewBox="0 0 25 28" shape-rendering="crispEdges"><path fill="#2f5a94" d="M3 0h19v1h-19zM3 1h1v1h-1zM21 1h1v1h-1zM3 2h1v1h-1zM21 2h1v1h-1zM3 3h1v1h-1zM6 3h2v1h-2zM10 3h8v1h-8zM21 3h1v1h-1zM3 4h1v1h-1zM21 4h1v1h-1zM3 5h1v1h-1zM21 5h1v1h-1zM3 6h1v1h-1zM6 6h2v1h-2zM9 6h1v1h-1zM11 6h3v1h-3zM15 6h2v1h-2zM21 6h1v1h-1zM3 7h1v1h-1zM21 7h1v1h-1zM3 8h1v1h-1zM21 8h1v1h-1zM3 9h1v1h-1zM6 9h5v1h-5zM13 9h4v1h-4zM18 9h1v1h-1zM21 9h1v1h-1zM3 10h1v1h-1zM21 10h1v1h-1zM3 11h1v1h-1zM21 11h1v1h-1zM3 12h1v1h-1zM6 12h4v1h-4zM11 12h2v1h-2zM15 12h1v1h-1zM17 12h1v1h-1zM21 12h1v1h-1zM3 13h1v1h-1zM21 13h1v1h-1zM3 14h1v1h-1zM21 14h1v1h-1zM3 15h1v1h-1zM6 15h2v1h-2zM10 15h4v1h-4zM15 15h1v1h-1zM21 15h1v1h-1z"/><path fill="#f6f8fc" d="M4 1h17v1h-17zM4 2h17v1h-17zM4 3h2v1h-2zM8 3h2v1h-2zM18 3h3v1h-3zM4 4h17v1h-17zM4 5h17v1h-17zM4 6h2v1h-2zM8 6h1v1h-1zM10 6h1v1h-1zM14 6h1v1h-1zM17 6h4v1h-4zM4 7h17v1h-17zM4 8h17v1h-17zM4 9h2v1h-2zM11 9h2v1h-2zM17 9h1v1h-1zM19 9h2v1h-2zM4 10h17v1h-17zM4 11h17v1h-17zM4 12h2v1h-2zM10 12h1v1h-1zM13 12h2v1h-2zM16 12h1v1h-1zM18 12h3v1h-3zM4 13h17v1h-17zM4 14h17v1h-17zM4 15h2v1h-2zM8 15h2v1h-2zM14 15h1v1h-1zM16 15h5v1h-5zM5 16h15v1h-15zM6 17h13v1h-13zM7 18h11v1h-11z"/><path fill="#5a5350" d="M2 10h1v1h-1zM22 10h1v1h-1zM1 11h2v1h-2zM22 11h2v1h-2zM0 12h3v1h-3zM22 12h3v1h-3zM0 13h3v1h-3zM22 13h3v1h-3zM0 14h1v1h-1zM2 14h1v1h-1zM22 14h1v1h-1zM24 14h1v1h-1zM0 15h1v1h-1zM24 15h1v1h-1zM0 16h1v1h-1zM4 16h1v1h-1zM20 16h1v1h-1zM24 16h1v1h-1zM0 17h1v1h-1zM5 17h1v1h-1zM19 17h1v1h-1zM24 17h1v1h-1zM0 18h1v1h-1zM6 18h1v1h-1zM18 18h1v1h-1zM24 18h1v1h-1zM0 19h1v1h-1zM7 19h11v1h-11zM24 19h1v1h-1zM0 20h1v1h-1zM24 20h1v1h-1zM0 21h1v1h-1zM6 21h1v1h-1zM18 21h1v1h-1zM24 21h1v1h-1zM0 22h1v1h-1zM24 22h1v1h-1zM0 23h1v1h-1zM4 23h1v1h-1zM20 23h1v1h-1zM24 23h1v1h-1zM0 24h1v1h-1zM24 24h1v1h-1zM0 25h1v1h-1zM2 25h1v1h-1zM22 25h1v1h-1zM24 25h1v1h-1zM0 26h1v1h-1zM24 26h1v1h-1zM0 27h25v1h-25z"/><path fill="#c6c6ca" d="M1 14h1v1h-1zM23 14h1v1h-1zM1 15h2v1h-2zM22 15h2v1h-2zM1 16h3v1h-3zM21 16h3v1h-3zM1 17h4v1h-4zM20 17h4v1h-4zM1 18h5v1h-5zM19 18h5v1h-5zM1 19h6v1h-6zM18 19h6v1h-6zM1 20h7v1h-7zM17 20h7v1h-7zM1 21h5v1h-5zM7 21h11v1h-11zM19 21h5v1h-5zM1 22h23v1h-23zM1 23h3v1h-3zM5 23h15v1h-15zM21 23h3v1h-3zM1 24h23v1h-23zM1 25h1v1h-1zM3 25h19v1h-19zM23 25h1v1h-1zM1 26h23v1h-23z"/><path fill="#d6d6da" d="M8 20h9v1h-9z"/></svg>
<span style="left:359px;top:362.07px;font:normal 20px/1 'Liberation Sans',sans-serif;color:#000;transform:scaleX(0.8689);transform-origin:left center;">06:20</span>
<span style="left:363px;top:385.07px;font:normal 20px/1 'Liberation Sans',sans-serif;color:#000;transform:scaleX(0.8190);transform-origin:left center;">2025.</span>
<span style="left:363px;top:305.07px;font:normal 20px/1 'Liberation Sans',sans-serif;color:#000;transform:scaleX(0.8190);transform-origin:left center;">2025.</span>
<div style="left:406px;top:118px;width:30px;height:704px;background:#000;"></div>
<div style="left:408px;top:118px;width:12px;height:704px;background:#c0c0c6;"></div>
<div style="left:424px;top:118px;width:10px;height:704px;background:#c0c0c6;"></div>
<span style="left:718px;top:288.57px;font:normal 20px/1 'Liberation Sans',sans-serif;color:#000;letter-spacing:0.051px;">t th</span>
<span style="left:718px;top:222.57px;font:normal 20px/1 'Liberation Sans',sans-serif;color:#000;transform:scaleX(0.7870);transform-origin:left center;">usic</span>
<span style="left:451px;top:310.57px;font:normal 20px/1 'Liberation Sans',sans-serif;color:#000;transform:scaleX(0.9435);transform-origin:left center;">interested in obscure voxel program</span>
<span style="left:451px;top:332.57px;font:normal 20px/1 'Liberation Sans',sans-serif;color:#000;transform:scaleX(0.9575);transform-origin:left center;">just completed the provided tutorial</span>
<span style="left:451px;top:354.57px;font:normal 20px/1 'Liberation Sans',sans-serif;color:#000;transform:scaleX(0.9719);transform-origin:left center;">get you started!</span>
<div style="left:12px;top:88px;width:2px;height:750px;background:#000;"></div>
<div style="left:14px;top:820px;width:732px;height:18px;background:#000;"></div>
<div style="left:16px;top:822px;width:2px;height:12px;background:#d6d6da;"></div>
<div style="left:20px;top:822px;width:726px;height:2px;background:#fbf5f0;"></div>
<div style="left:20px;top:824px;width:726px;height:8px;background:#c8c8cc;"></div>
<div style="left:20px;top:832px;width:726px;height:2px;background:#6a6563;"></div>
<div style="left:22px;top:838px;width:724px;height:10px;background-color:#cccccc;background-image:linear-gradient(90deg,#cccccc 50%,transparent 50%),linear-gradient(#cccccc 50%,#52524e 50%);background-size:4px 4px;background-position:2px 0px;"></div>
<div style="left:2px;top:824px;width:10px;height:24px;background:#c8c8cc;"></div>
<div style="left:2px;top:838px;width:20px;height:10px;background:#c8c8cc;"></div>
<div style="left:2px;top:824px;width:2px;height:2px;background:#000;"></div>
<div style="left:6px;top:824px;width:2px;height:2px;background:#000;"></div>
<div style="left:10px;top:824px;width:2px;height:2px;background:#000;"></div>
<div style="left:20px;top:838px;width:2px;height:2px;background:#000;"></div>
<div style="left:20px;top:842px;width:2px;height:2px;background:#000;"></div>
<div style="left:20px;top:846px;width:2px;height:2px;background:#000;"></div>
<div style="left:48px;top:406px;width:698px;height:657px;background:#000;"></div>
<div style="left:50px;top:408px;width:696px;height:36px;background:#000;"></div>
<div style="left:50px;top:408px;width:34px;height:32px;background:#c8c8cc;"></div>
<div style="left:50px;top:408px;width:34px;height:2px;background:#fbf5f0;"></div>
<div style="left:50px;top:440px;width:34px;height:2px;background:#6a6563;"></div>
<div style="left:55px;top:413px;width:24px;height:22px;background:#000;"></div>
<div style="left:57px;top:415px;width:20px;height:18px;background:#6a6461;"></div>
<div style="left:65px;top:415px;width:2px;height:2px;background:#000;"></div>
<div style="left:65px;top:419px;width:2px;height:2px;background:#000;"></div>
<div style="left:57px;top:423px;width:2px;height:2px;background:#000;"></div>
<div style="left:61px;top:423px;width:2px;height:2px;background:#000;"></div>
<div style="left:65px;top:423px;width:2px;height:2px;background:#000;"></div>
<div style="left:86px;top:408px;width:660px;height:32px;background-color:#cccccc;background-image:linear-gradient(90deg,#cccccc 50%,transparent 50%),linear-gradient(#cccccc 50%,#52524e 50%);background-size:4px 4px;background-position:2px 0px;"></div>
<div style="left:86px;top:408px;width:660px;height:2px;background:#fbf5f0;"></div>
<div style="left:86px;top:440px;width:660px;height:2px;background:#6a6563;"></div>
<div style="left:490px;top:410px;width:212px;height:30px;background:#ff0550;"></div>
<span style="left:497.5px;top:415.07px;font:normal 20px/1 'Liberation Sans',sans-serif;color:#140006;transform:scaleX(0.7535);transform-origin:left center;-webkit-text-stroke:0.5px #140006;">PROJECT FILES MANAGER</span>
<div style="left:50px;top:444px;width:10px;height:607px;background-color:#cccccc;background-image:linear-gradient(90deg,#cccccc 50%,transparent 50%),linear-gradient(#cccccc 50%,#52524e 50%);background-size:4px 4px;background-position:0px 2px;"></div>
<div style="left:62px;top:444px;width:684px;height:30px;background:#3a5b8c;"></div>
<span style="left:69px;top:449.07px;font:normal 20px/1 'Liberation Sans',sans-serif;color:#e6eefc;transform:scaleX(0.9180);transform-origin:left center;">Project Manager Actions</span>
<div style="left:62px;top:474px;width:430px;height:575px;background:#fdf1e8;"></div>
<div style="left:494px;top:474px;width:10px;height:575px;background:#c0c0c6;"></div>
<div style="left:506px;top:474px;width:240px;height:575px;background:#fdf1e8;"></div>
<div style="left:70px;top:1051px;width:676px;height:10px;background-color:#cccccc;background-image:linear-gradient(90deg,#cccccc 50%,transparent 50%),linear-gradient(#cccccc 50%,#52524e 50%);background-size:4px 4px;background-position:2px 0px;"></div>
<div style="left:50px;top:1037px;width:10px;height:24px;background:#c8c8cc;"></div>
<div style="left:50px;top:1051px;width:20px;height:10px;background:#c8c8cc;"></div>
<div style="left:50px;top:1037px;width:2px;height:2px;background:#000;"></div>
<div style="left:54px;top:1037px;width:2px;height:2px;background:#000;"></div>
<div style="left:58px;top:1037px;width:2px;height:2px;background:#000;"></div>
<div style="left:68px;top:1051px;width:2px;height:2px;background:#000;"></div>
<div style="left:68px;top:1055px;width:2px;height:2px;background:#000;"></div>
<div style="left:68px;top:1059px;width:2px;height:2px;background:#000;"></div>
<svg style="left:76px;top:486px" width="10" height="8" viewBox="0 0 10 8"><path d="M0 0h2.2l2.8 4.2 2.8-4.2h2.2l-4 8h-2z" fill="#1c1612"/></svg>
<span style="left:87.5px;top:480.57px;font:normal 20px/1 'Liberation Sans',sans-serif;color:#000;transform:scaleX(0.8298);transform-origin:left center;">RepliCUBE Projects</span>
<div style="left:87px;top:505px;width:403px;height:2px;background:#b4b2b0;"></div>
<svg style="left:100px;top:516px" width="10" height="8" viewBox="0 0 10 8"><path d="M0 0h2.2l2.8 4.2 2.8-4.2h2.2l-4 8h-2z" fill="#1c1612"/></svg>
<span style="left:111.5px;top:510.57px;font:normal 20px/1 'Liberation Sans',sans-serif;color:#000;transform:scaleX(0.9117);transform-origin:left center;">Email Attachments</span>
<div style="left:111px;top:535px;width:379px;height:2px;background:#b4b2b0;"></div>
<svg style="left:136px;top:542px" width="22" height="18" viewBox="0 0 11 9" shape-rendering="crispEdges"><path fill="#000000" d="M0 0h11v1h-11zM0 1h1v1h-1zM10 1h1v1h-1zM0 2h1v1h-1zM2 2h1v1h-1zM8 2h1v1h-1zM10 2h1v1h-1zM0 3h1v1h-1zM3 3h1v1h-1zM7 3h1v1h-1zM10 3h1v1h-1zM0 4h1v1h-1zM4 4h3v1h-3zM10 4h1v1h-1zM0 5h1v1h-1zM10 5h1v1h-1zM0 6h1v1h-1zM10 6h1v1h-1zM0 7h1v1h-1zM10 7h1v1h-1zM0 8h11v1h-11z"/><path fill="#3ea66e" d="M1 1h1v1h-1zM9 1h1v1h-1zM1 2h1v1h-1zM9 2h1v1h-1zM1 3h2v1h-2zM8 3h2v1h-2zM1 4h3v1h-3zM7 4h3v1h-3zM1 5h2v1h-2zM4 5h3v1h-3zM8 5h2v1h-2zM1 6h1v1h-1zM3 6h5v1h-5zM9 6h1v1h-1zM2 7h7v1h-7z"/><path fill="#4fd820" d="M2 1h7v1h-7zM3 2h5v1h-5zM4 3h3v1h-3z"/><path fill="#5a7a52" d="M3 5h1v1h-1zM7 5h1v1h-1zM2 6h1v1h-1zM8 6h1v1h-1zM1 7h1v1h-1zM9 7h1v1h-1z"/></svg>
<span style="left:165px;top:540.57px;font:normal 20px/1 'Liberation Sans',sans-serif;color:#000;transform:scaleX(0.9122);transform-origin:left center;">Replicube Tutorial Projects</span>
<div style="left:135px;top:565px;width:355px;height:2px;background:#b4b2b0;"></div>
<svg style="left:136px;top:572px" width="22" height="18" viewBox="0 0 11 9" shape-rendering="crispEdges"><path fill="#000000" d="M0 0h11v1h-11zM0 1h1v1h-1zM10 1h1v1h-1zM0 2h1v1h-1zM2 2h1v1h-1zM8 2h1v1h-1zM10 2h1v1h-1zM0 3h1v1h-1zM3 3h1v1h-1zM7 3h1v1h-1zM10 3h1v1h-1zM0 4h1v1h-1zM4 4h3v1h-3zM10 4h1v1h-1zM0 5h1v1h-1zM10 5h1v1h-1zM0 6h1v1h-1zM10 6h1v1h-1zM0 7h1v1h-1zM10 7h1v1h-1zM0 8h11v1h-11z"/><path fill="#3ea66e" d="M1 1h1v1h-1zM9 1h1v1h-1zM1 2h1v1h-1zM9 2h1v1h-1zM1 3h2v1h-2zM8 3h2v1h-2zM1 4h3v1h-3zM7 4h3v1h-3zM1 5h2v1h-2zM4 5h3v1h-3zM8 5h2v1h-2zM1 6h1v1h-1zM3 6h5v1h-5zM9 6h1v1h-1zM2 7h7v1h-7z"/><path fill="#4fd820" d="M2 1h7v1h-7zM3 2h5v1h-5zM4 3h3v1h-3z"/><path fill="#5a7a52" d="M3 5h1v1h-1zM7 5h1v1h-1zM2 6h1v1h-1zM8 6h1v1h-1zM1 7h1v1h-1zM9 7h1v1h-1z"/></svg>
<span style="left:165px;top:570.57px;font:normal 20px/1 'Liberation Sans',sans-serif;color:#000;transform:scaleX(0.8822);transform-origin:left center;">Intro Challenges</span>
<div style="left:135px;top:595px;width:355px;height:2px;background:#b4b2b0;"></div>
<svg style="left:136px;top:602px" width="22" height="18" viewBox="0 0 11 9" shape-rendering="crispEdges"><path fill="#000000" d="M0 0h11v1h-11zM0 1h1v1h-1zM10 1h1v1h-1zM0 2h1v1h-1zM2 2h1v1h-1zM8 2h1v1h-1zM10 2h1v1h-1zM0 3h1v1h-1zM3 3h1v1h-1zM7 3h1v1h-1zM10 3h1v1h-1zM0 4h1v1h-1zM4 4h3v1h-3zM10 4h1v1h-1zM0 5h1v1h-1zM10 5h1v1h-1zM0 6h1v1h-1zM10 6h1v1h-1zM0 7h1v1h-1zM10 7h1v1h-1zM0 8h11v1h-11z"/><path fill="#3ea66e" d="M1 1h1v1h-1zM9 1h1v1h-1zM1 2h1v1h-1zM9 2h1v1h-1zM1 3h2v1h-2zM8 3h2v1h-2zM1 4h3v1h-3zM7 4h3v1h-3zM1 5h2v1h-2zM4 5h3v1h-3zM8 5h2v1h-2zM1 6h1v1h-1zM3 6h5v1h-5zM9 6h1v1h-1zM2 7h7v1h-7z"/><path fill="#4fd820" d="M2 1h7v1h-7zM3 2h5v1h-5zM4 3h3v1h-3z"/><path fill="#5a7a52" d="M3 5h1v1h-1zM7 5h1v1h-1zM2 6h1v1h-1zM8 6h1v1h-1zM1 7h1v1h-1zM9 7h1v1h-1z"/></svg>
<span style="left:165px;top:600.57px;font:normal 20px/1 'Liberation Sans',sans-serif;color:#000;transform:scaleX(0.8894);transform-origin:left center;">Another Challenge Set</span>
<div style="left:135px;top:625px;width:355px;height:2px;background:#b4b2b0;"></div>
<svg style="left:136px;top:632px" width="22" height="18" viewBox="0 0 11 9" shape-rendering="crispEdges"><path fill="#000000" d="M0 0h11v1h-11zM0 1h1v1h-1zM10 1h1v1h-1zM0 2h1v1h-1zM2 2h1v1h-1zM8 2h1v1h-1zM10 2h1v1h-1zM0 3h1v1h-1zM3 3h1v1h-1zM7 3h1v1h-1zM10 3h1v1h-1zM0 4h1v1h-1zM4 4h3v1h-3zM10 4h1v1h-1zM0 5h1v1h-1zM10 5h1v1h-1zM0 6h1v1h-1zM10 6h1v1h-1zM0 7h1v1h-1zM10 7h1v1h-1zM0 8h11v1h-11z"/><path fill="#3ea66e" d="M1 1h1v1h-1zM9 1h1v1h-1zM1 2h1v1h-1zM9 2h1v1h-1zM1 3h2v1h-2zM8 3h2v1h-2zM1 4h3v1h-3zM7 4h3v1h-3zM1 5h2v1h-2zM4 5h3v1h-3zM8 5h2v1h-2zM1 6h1v1h-1zM3 6h5v1h-5zM9 6h1v1h-1zM2 7h7v1h-7z"/><path fill="#4fd820" d="M2 1h7v1h-7zM3 2h5v1h-5zM4 3h3v1h-3z"/><path fill="#5a7a52" d="M3 5h1v1h-1zM7 5h1v1h-1zM2 6h1v1h-1zM8 6h1v1h-1zM1 7h1v1h-1zM9 7h1v1h-1z"/></svg>
<span style="left:165px;top:630.57px;font:normal 20px/1 'Liberation Sans',sans-serif;color:#000;transform:scaleX(0.9507);transform-origin:left center;">Everyday Objects</span>
<div style="left:135px;top:655px;width:355px;height:2px;background:#b4b2b0;"></div>
<svg style="left:136px;top:662px" width="22" height="18" viewBox="0 0 11 9" shape-rendering="crispEdges"><path fill="#000000" d="M0 0h11v1h-11zM0 1h1v1h-1zM10 1h1v1h-1zM0 2h1v1h-1zM2 2h1v1h-1zM8 2h1v1h-1zM10 2h1v1h-1zM0 3h1v1h-1zM3 3h1v1h-1zM7 3h1v1h-1zM10 3h1v1h-1zM0 4h1v1h-1zM4 4h3v1h-3zM10 4h1v1h-1zM0 5h1v1h-1zM10 5h1v1h-1zM0 6h1v1h-1zM10 6h1v1h-1zM0 7h1v1h-1zM10 7h1v1h-1zM0 8h11v1h-11z"/><path fill="#3ea66e" d="M1 1h1v1h-1zM9 1h1v1h-1zM1 2h1v1h-1zM9 2h1v1h-1zM1 3h2v1h-2zM8 3h2v1h-2zM1 4h3v1h-3zM7 4h3v1h-3zM1 5h2v1h-2zM4 5h3v1h-3zM8 5h2v1h-2zM1 6h1v1h-1zM3 6h5v1h-5zM9 6h1v1h-1zM2 7h7v1h-7z"/><path fill="#4fd820" d="M2 1h7v1h-7zM3 2h5v1h-5zM4 3h3v1h-3z"/><path fill="#5a7a52" d="M3 5h1v1h-1zM7 5h1v1h-1zM2 6h1v1h-1zM8 6h1v1h-1zM1 7h1v1h-1zM9 7h1v1h-1z"/></svg>
<span style="left:165px;top:660.57px;font:normal 20px/1 'Liberation Sans',sans-serif;color:#000;transform:scaleX(0.8367);transform-origin:left center;">Circles From  Cubes</span>
<div style="left:136px;top:686px;width:354px;height:30px;background:#3a5b8c;"></div>
<svg style="left:136px;top:692px" width="22" height="18" viewBox="0 0 11 9" shape-rendering="crispEdges"><path fill="#000000" d="M0 0h11v1h-11zM0 1h1v1h-1zM10 1h1v1h-1zM0 2h1v1h-1zM2 2h1v1h-1zM8 2h1v1h-1zM10 2h1v1h-1zM0 3h1v1h-1zM3 3h1v1h-1zM7 3h1v1h-1zM10 3h1v1h-1zM0 4h1v1h-1zM4 4h3v1h-3zM10 4h1v1h-1zM0 5h1v1h-1zM10 5h1v1h-1zM0 6h1v1h-1zM10 6h1v1h-1zM0 7h1v1h-1zM10 7h1v1h-1zM0 8h11v1h-11z"/><path fill="#fbf6f0" d="M1 1h1v1h-1zM9 1h1v1h-1zM1 2h1v1h-1zM9 2h1v1h-1zM1 3h2v1h-2zM8 3h2v1h-2zM1 4h3v1h-3zM7 4h3v1h-3zM1 5h2v1h-2zM4 5h3v1h-3zM8 5h2v1h-2zM1 6h1v1h-1zM3 6h5v1h-5zM9 6h1v1h-1zM2 7h7v1h-7z"/><path fill="#ffffff" d="M2 1h7v1h-7zM3 2h5v1h-5zM4 3h3v1h-3z"/><path fill="#c8c4c0" d="M3 5h1v1h-1zM7 5h1v1h-1zM2 6h1v1h-1zM8 6h1v1h-1zM1 7h1v1h-1zM9 7h1v1h-1z"/></svg>
<span style="left:165px;top:690.57px;font:normal 20px/1 'Liberation Sans',sans-serif;color:#fff;transform:scaleX(0.9608);transform-origin:left center;">Beautiful Geometry</span>
<svg style="left:112px;top:722px" width="22" height="18" viewBox="0 0 11 9" shape-rendering="crispEdges"><path fill="#000000" d="M0 0h11v1h-11zM0 1h1v1h-1zM5 1h2v1h-2zM8 1h1v1h-1zM10 1h1v1h-1zM0 2h1v1h-1zM4 2h5v1h-5zM10 2h1v1h-1zM0 3h1v1h-1zM5 3h3v1h-3zM10 3h1v1h-1zM0 4h1v1h-1zM4 4h2v1h-2zM10 4h1v1h-1zM0 5h1v1h-1zM4 5h1v1h-1zM10 5h1v1h-1zM0 6h1v1h-1zM2 6h1v1h-1zM10 6h1v1h-1zM0 7h1v1h-1zM10 7h1v1h-1zM0 8h11v1h-11z"/><path fill="#fdf1e8" d="M1 1h4v1h-4zM7 1h1v1h-1zM9 1h1v1h-1zM1 2h3v1h-3zM9 2h1v1h-1zM1 3h4v1h-4zM9 3h1v1h-1zM1 4h3v1h-3zM8 4h2v1h-2zM1 5h3v1h-3zM8 5h2v1h-2zM1 6h1v1h-1zM3 6h7v1h-7zM1 7h9v1h-9z"/><path fill="#6a6563" d="M8 3h1v1h-1zM6 4h2v1h-2z"/><path fill="#c8c4c0" d="M5 5h3v1h-3z"/></svg>
<span style="left:141px;top:720.57px;font:normal 20px/1 'Liberation Sans',sans-serif;color:#000;transform:scaleX(0.9049);transform-origin:left center;">My Free Edit Projects</span>
<div style="left:110px;top:745px;width:380px;height:2px;background:#b4b2b0;"></div>
<svg style="left:112px;top:752px" width="22" height="18" viewBox="0 0 11 9" shape-rendering="crispEdges"><path fill="#000000" d="M0 0h11v1h-11zM0 1h1v1h-1zM10 1h1v1h-1zM0 2h1v1h-1zM7 2h1v1h-1zM10 2h1v1h-1zM0 3h1v1h-1zM7 3h1v1h-1zM10 3h1v1h-1zM0 4h1v1h-1zM4 4h1v1h-1zM7 4h1v1h-1zM10 4h1v1h-1zM0 5h1v1h-1zM3 5h5v1h-5zM10 5h1v1h-1zM0 6h1v1h-1zM4 6h1v1h-1zM10 6h1v1h-1zM0 7h1v1h-1zM10 7h1v1h-1zM0 8h11v1h-11z"/><path fill="#fdf1e8" d="M1 1h9v1h-9zM1 2h6v1h-6zM8 2h2v1h-2zM1 3h6v1h-6zM8 3h2v1h-2zM1 4h3v1h-3zM5 4h2v1h-2zM8 4h2v1h-2zM1 5h2v1h-2zM8 5h2v1h-2zM1 6h3v1h-3zM7 6h3v1h-3zM1 7h3v1h-3zM5 7h5v1h-5z"/><path fill="#c8c4c0" d="M5 6h2v1h-2zM4 7h1v1h-1z"/></svg>
<span style="left:141px;top:750.57px;font:normal 20px/1 'Liberation Sans',sans-serif;color:#000;transform:scaleX(0.8942);transform-origin:left center;">Downloaded Projects</span>
<div style="left:110px;top:775px;width:380px;height:2px;background:#b4b2b0;"></div>
<svg style="left:76px;top:786px" width="10" height="8" viewBox="0 0 10 8"><path d="M0 0h2.2l2.8 4.2 2.8-4.2h2.2l-4 8h-2z" fill="#1c1612"/></svg>
<span style="left:87.5px;top:780.57px;font:normal 20px/1 'Liberation Sans',sans-serif;color:#000;transform:scaleX(0.8646);transform-origin:left center;">RepliPAINT Projects</span>
<div style="left:87px;top:805px;width:403px;height:2px;background:#b4b2b0;"></div>
<svg style="left:112px;top:812px" width="22" height="18" viewBox="0 0 11 9" shape-rendering="crispEdges"><path fill="#000000" d="M0 0h11v1h-11zM0 1h1v1h-1zM5 1h2v1h-2zM8 1h1v1h-1zM10 1h1v1h-1zM0 2h1v1h-1zM4 2h5v1h-5zM10 2h1v1h-1zM0 3h1v1h-1zM5 3h3v1h-3zM10 3h1v1h-1zM0 4h1v1h-1zM4 4h2v1h-2zM10 4h1v1h-1zM0 5h1v1h-1zM4 5h1v1h-1zM10 5h1v1h-1zM0 6h1v1h-1zM2 6h1v1h-1zM10 6h1v1h-1zM0 7h1v1h-1zM10 7h1v1h-1zM0 8h11v1h-11z"/><path fill="#fdf1e8" d="M1 1h4v1h-4zM7 1h1v1h-1zM9 1h1v1h-1zM1 2h3v1h-3zM9 2h1v1h-1zM1 3h4v1h-4zM9 3h1v1h-1zM1 4h3v1h-3zM8 4h2v1h-2zM1 5h3v1h-3zM8 5h2v1h-2zM1 6h1v1h-1zM3 6h7v1h-7zM1 7h9v1h-9z"/><path fill="#6a6563" d="M8 3h1v1h-1zM6 4h2v1h-2z"/><path fill="#c8c4c0" d="M5 5h3v1h-3z"/></svg>
<span style="left:141px;top:810.57px;font:normal 20px/1 'Liberation Sans',sans-serif;color:#000;transform:scaleX(0.8838);transform-origin:left center;">My Paint Files</span>
<div style="left:110px;top:835px;width:380px;height:2px;background:#b4b2b0;"></div>
<svg style="left:112px;top:842px" width="22" height="18" viewBox="0 0 11 9" shape-rendering="crispEdges"><path fill="#000000" d="M0 0h11v1h-11zM0 1h1v1h-1zM10 1h1v1h-1zM0 2h1v1h-1zM7 2h1v1h-1zM10 2h1v1h-1zM0 3h1v1h-1zM7 3h1v1h-1zM10 3h1v1h-1zM0 4h1v1h-1zM4 4h1v1h-1zM7 4h1v1h-1zM10 4h1v1h-1zM0 5h1v1h-1zM3 5h5v1h-5zM10 5h1v1h-1zM0 6h1v1h-1zM4 6h1v1h-1zM10 6h1v1h-1zM0 7h1v1h-1zM10 7h1v1h-1zM0 8h11v1h-11z"/><path fill="#fdf1e8" d="M1 1h9v1h-9zM1 2h6v1h-6zM8 2h2v1h-2zM1 3h6v1h-6zM8 3h2v1h-2zM1 4h3v1h-3zM5 4h2v1h-2zM8 4h2v1h-2zM1 5h2v1h-2zM8 5h2v1h-2zM1 6h3v1h-3zM7 6h3v1h-3zM1 7h3v1h-3zM5 7h5v1h-5z"/><path fill="#c8c4c0" d="M5 6h2v1h-2zM4 7h1v1h-1z"/></svg>
<span style="left:141px;top:840.57px;font:normal 20px/1 'Liberation Sans',sans-serif;color:#000;transform:scaleX(0.8614);transform-origin:left center;">Downloaded Paint Files</span>
<div style="left:110px;top:865px;width:380px;height:2px;background:#b4b2b0;"></div>
<div style="left:506px;top:474px;width:240px;height:36px;background:#eee4db;"></div>
<svg style="left:512px;top:482px" width="18" height="18" viewBox="0 0 18 18" shape-rendering="crispEdges"><rect width="18" height="18" fill="#000"/><rect x="2" y="2" width="14" height="14" fill="#fdf1e8"/><path d="M3 9l2-2 3 3 6-7 2 2-8 9z" fill="#3ea66e"/></svg>
<span style="left:537px;top:480.57px;font:normal 20px/1 'Liberation Sans',sans-serif;color:#000;transform:scaleX(0.8850);transform-origin:left center;">Nested Frames</span>
<svg style="left:512px;top:518px" width="18" height="18" viewBox="0 0 18 18" shape-rendering="crispEdges"><rect x="1" y="1" width="16" height="16" fill="none" stroke="#000" stroke-width="2" stroke-dasharray="2 2"/></svg>
<span style="left:537px;top:516.57px;font:normal 20px/1 'Liberation Sans',sans-serif;color:#000;transform:scaleX(0.8407);transform-origin:left center;">Mini DNA</span>
<div style="left:506px;top:546px;width:240px;height:36px;background:#eee4db;"></div>
<svg style="left:512px;top:554px" width="18" height="18" viewBox="0 0 18 18" shape-rendering="crispEdges"><rect x="1" y="1" width="16" height="16" fill="none" stroke="#000" stroke-width="2" stroke-dasharray="2 2"/></svg>
<span style="left:537px;top:552.57px;font:normal 20px/1 'Liberation Sans',sans-serif;color:#000;transform:scaleX(0.8850);transform-origin:left center;">Axis Frame</span>
<svg style="left:512px;top:590px" width="18" height="18" viewBox="0 0 18 18" shape-rendering="crispEdges"><rect x="1" y="1" width="16" height="16" fill="none" stroke="#000" stroke-width="2" stroke-dasharray="2 2"/></svg>
<span style="left:537px;top:588.57px;font:normal 20px/1 'Liberation Sans',sans-serif;color:#000;transform:scaleX(0.9149);transform-origin:left center;">Framework</span>
<div style="left:506px;top:618px;width:240px;height:36px;background:#eee4db;"></div>
<svg style="left:512px;top:626px" width="18" height="18" viewBox="0 0 18 18" shape-rendering="crispEdges"><rect x="1" y="1" width="16" height="16" fill="none" stroke="#000" stroke-width="2" stroke-dasharray="2 2"/></svg>
<span style="left:537px;top:624.57px;font:normal 20px/1 'Liberation Sans',sans-serif;color:#000;transform:scaleX(0.9020);transform-origin:left center;">Roman Temple</span>
<svg style="left:512px;top:662px" width="18" height="18" viewBox="0 0 18 18" shape-rendering="crispEdges"><rect x="1" y="1" width="16" height="16" fill="none" stroke="#000" stroke-width="2" stroke-dasharray="2 2"/></svg>
<span style="left:537px;top:660.57px;font:normal 20px/1 'Liberation Sans',sans-serif;color:#000;transform:scaleX(0.8958);transform-origin:left center;">Menger Sponge</span>
<div style="left:506px;top:690px;width:240px;height:36px;background:#eee4db;"></div>
<svg style="left:512px;top:698px" width="18" height="18" viewBox="0 0 18 18" shape-rendering="crispEdges"><rect x="1" y="1" width="16" height="16" fill="none" stroke="#000" stroke-width="2" stroke-dasharray="2 2"/></svg>
<span style="left:537px;top:696.57px;font:normal 20px/1 'Liberation Sans',sans-serif;color:#000;letter-spacing:-0.145px;">Tri-Pyramid</span>
<div style="left:494px;top:740px;width:10px;height:42px;background-color:#c0c0c6;background-image:linear-gradient(90deg,#c0c0c6 50%,transparent 50%),linear-gradient(#c0c0c6 50%,#52524e 50%);background-size:4px 4px;background-position:0px 0px;"></div>
<div style="left:494px;top:738px;width:2px;height:2px;background:#000;"></div>
<div style="left:494px;top:782px;width:2px;height:2px;background:#000;"></div>
<div style="left:498px;top:738px;width:2px;height:2px;background:#000;"></div>
<div style="left:498px;top:782px;width:2px;height:2px;background:#000;"></div>
<div style="left:502px;top:738px;width:2px;height:2px;background:#000;"></div>
<div style="left:502px;top:782px;width:2px;height:2px;background:#000;"></div>
<div style="left:744px;top:50px;width:1176px;height:1030px;background:#000;"></div>
<div style="left:746px;top:52px;width:1172px;height:36px;background:#000;"></div>
<div style="left:746px;top:52px;width:34px;height:32px;background:#c8c8cc;"></div>
<div style="left:746px;top:52px;width:34px;height:2px;background:#fbf5f0;"></div>
<div style="left:746px;top:84px;width:34px;height:2px;background:#6a6563;"></div>
<div style="left:751px;top:57px;width:24px;height:22px;background:#000;"></div>
<div style="left:753px;top:59px;width:20px;height:18px;background:#6a6461;"></div>
<div style="left:761px;top:59px;width:2px;height:2px;background:#000;"></div>
<div style="left:761px;top:63px;width:2px;height:2px;background:#000;"></div>
<div style="left:753px;top:67px;width:2px;height:2px;background:#000;"></div>
<div style="left:757px;top:67px;width:2px;height:2px;background:#000;"></div>
<div style="left:761px;top:67px;width:2px;height:2px;background:#000;"></div>
<div style="left:782px;top:52px;width:1100px;height:32px;background-color:#cccccc;background-image:linear-gradient(90deg,#cccccc 50%,transparent 50%),linear-gradient(#cccccc 50%,#52524e 50%);background-size:4px 4px;background-position:2px 0px;"></div>
<div style="left:782px;top:52px;width:1100px;height:2px;background:#fbf5f0;"></div>
<div style="left:782px;top:84px;width:1100px;height:2px;background:#6a6563;"></div>
<div style="left:1884px;top:52px;width:34px;height:32px;background:#c8c8cc;"></div>
<div style="left:1884px;top:52px;width:34px;height:2px;background:#fbf5f0;"></div>
<div style="left:1884px;top:84px;width:34px;height:2px;background:#6a6563;"></div>
<svg style="left:1890px;top:58px" width="22" height="22" viewBox="0 0 11 11" shape-rendering="crispEdges"><path fill="#6a6563" d="M0 0h1v1h-1zM10 0h1v1h-1zM1 1h2v1h-2zM8 1h2v1h-2zM1 2h3v1h-3zM7 2h3v1h-3zM2 3h3v1h-3zM6 3h3v1h-3zM3 4h5v1h-5zM4 5h3v1h-3zM3 6h5v1h-5zM2 7h3v1h-3zM6 7h3v1h-3zM1 8h3v1h-3zM7 8h3v1h-3zM1 9h2v1h-2zM8 9h2v1h-2zM0 10h1v1h-1zM10 10h1v1h-1z"/><path fill="#000000" d="M1 0h2v1h-2zM8 0h2v1h-2zM0 1h1v1h-1zM3 1h1v1h-1zM7 1h1v1h-1zM10 1h1v1h-1zM0 2h1v1h-1zM4 2h1v1h-1zM6 2h1v1h-1zM10 2h1v1h-1zM1 3h1v1h-1zM5 3h1v1h-1zM9 3h1v1h-1zM2 4h1v1h-1zM8 4h1v1h-1zM3 5h1v1h-1zM7 5h1v1h-1zM2 6h1v1h-1zM8 6h1v1h-1zM1 7h1v1h-1zM5 7h1v1h-1zM9 7h1v1h-1zM0 8h1v1h-1zM4 8h1v1h-1zM6 8h1v1h-1zM10 8h1v1h-1zM0 9h1v1h-1zM3 9h1v1h-1zM7 9h1v1h-1zM10 9h1v1h-1zM1 10h2v1h-2zM8 10h2v1h-2z"/></svg>
<div style="left:1280px;top:54px;width:104px;height:30px;background:#ff0550;"></div>
<span style="left:1287.5px;top:59.07px;font:normal 20px/1 'Liberation Sans',sans-serif;color:#140006;transform:scaleX(0.7681);transform-origin:left center;-webkit-text-stroke:0.5px #140006;">REPLIPAINT</span>
<div style="left:746px;top:88px;width:10px;height:980px;background-color:#cccccc;background-image:linear-gradient(90deg,#cccccc 50%,transparent 50%),linear-gradient(#cccccc 50%,#52524e 50%);background-size:4px 4px;background-position:0px 2px;"></div>
<div style="left:1908px;top:88px;width:10px;height:980px;background-color:#cccccc;background-image:linear-gradient(90deg,#cccccc 50%,transparent 50%),linear-gradient(#cccccc 50%,#52524e 50%);background-size:4px 4px;background-position:0px 2px;"></div>
<div style="left:766px;top:1068px;width:1132px;height:10px;background-color:#cccccc;background-image:linear-gradient(90deg,#cccccc 50%,transparent 50%),linear-gradient(#cccccc 50%,#52524e 50%);background-size:4px 4px;background-position:2px 0px;"></div>
<div style="left:746px;top:1054px;width:10px;height:24px;background:#c8c8cc;"></div>
<div style="left:746px;top:1068px;width:20px;height:10px;background:#c8c8cc;"></div>
<div style="left:746px;top:1054px;width:2px;height:2px;background:#000;"></div>
<div style="left:750px;top:1054px;width:2px;height:2px;background:#000;"></div>
<div style="left:754px;top:1054px;width:2px;height:2px;background:#000;"></div>
<div style="left:764px;top:1068px;width:2px;height:2px;background:#000;"></div>
<div style="left:764px;top:1072px;width:2px;height:2px;background:#000;"></div>
<div style="left:764px;top:1076px;width:2px;height:2px;background:#000;"></div>
<div style="left:1908px;top:1054px;width:10px;height:24px;background:#c8c8cc;"></div>
<div style="left:1898px;top:1068px;width:20px;height:10px;background:#c8c8cc;"></div>
<div style="left:1908px;top:1054px;width:2px;height:2px;background:#000;"></div>
<div style="left:1912px;top:1054px;width:2px;height:2px;background:#000;"></div>
<div style="left:1916px;top:1054px;width:2px;height:2px;background:#000;"></div>
<div style="left:1898px;top:1068px;width:2px;height:2px;background:#000;"></div>
<div style="left:1898px;top:1072px;width:2px;height:2px;background:#000;"></div>
<div style="left:1898px;top:1076px;width:2px;height:2px;background:#000;"></div>
<div style="left:758px;top:88px;width:1146px;height:30px;background:#3a5b8c;"></div>
<div style="left:1904px;top:88px;width:2px;height:978px;background:#fdf1e8;"></div>
<span style="left:765px;top:93.07px;font:normal 20px/1 'Liberation Sans',sans-serif;color:#e6eefc;transform:scaleX(0.8571);transform-origin:left center;">RepliPAINT Actions</span>
<div style="left:758px;top:118px;width:636px;height:859px;background:#fdf1e8;"></div>
<div style="left:758px;top:122px;width:636px;height:42px;background:#ede3da;"></div>
<div style="left:1394px;top:118px;width:30px;height:948px;background:#000;"></div>
<div style="left:1396px;top:118px;width:12px;height:859px;background:#cdcdd1;"></div>
<div style="left:1396px;top:124px;width:12px;height:681px;background:#c0c0c6;"></div>
<div style="left:1396px;top:118px;width:12px;height:2px;background:#000;"></div>
<div style="left:1396px;top:120px;width:12px;height:2px;background:#d8d8dc;"></div>
<div style="left:1396px;top:122px;width:12px;height:2px;background:#000;"></div>
<div style="left:1396px;top:805px;width:12px;height:2px;background:#000;"></div>
<div style="left:1412px;top:118px;width:10px;height:948px;background:#c0c0c6;"></div>
<div style="left:1412px;top:571px;width:10px;height:42px;background-color:#c0c0c6;background-image:linear-gradient(90deg,#c0c0c6 50%,transparent 50%),linear-gradient(#c0c0c6 50%,#52524e 50%);background-size:4px 4px;background-position:0px 0px;"></div>
<div style="left:1412px;top:569px;width:2px;height:2px;background:#000;"></div>
<div style="left:1412px;top:613px;width:2px;height:2px;background:#000;"></div>
<div style="left:1416px;top:569px;width:2px;height:2px;background:#000;"></div>
<div style="left:1416px;top:613px;width:2px;height:2px;background:#000;"></div>
<div style="left:1420px;top:569px;width:2px;height:2px;background:#000;"></div>
<div style="left:1420px;top:613px;width:2px;height:2px;background:#000;"></div>
<div style="left:1424px;top:118px;width:480px;height:948px;background:#fdf1e8;"></div>
<div class="clip" style="left:758px;top:118px;width:636px;height:859px;font:26.5px/1 'Liberation Mono',monospace;color:#000;;-webkit-text-stroke:0"><span style="right:608px;top:13.68px;color:#a59d94;transform:scaleX(0.8805);transform-origin:right center">1</span><span style="left:46px;top:13.68px;transform:scaleX(0.8805);transform-origin:left center">rx <span style="position:static;color:#3aa26c">=</span> <span style="position:static;color:#3aa26c">(</span><span style="position:static;color:#3aa26c">(</span><span style="position:static;color:#f08030">x</span><span style="position:static;color:#3aa26c">-</span><span style="position:static;color:#3a5b8c">8</span><span style="position:static;color:#3aa26c">)</span><span style="position:static;color:#3aa26c">+</span><span style="position:static;color:#3aa26c">(</span><span style="position:static;color:#f08030">y</span><span style="position:static;color:#3aa26c">/</span><span style="position:static;color:#3a5b8c">2</span><span style="position:static;color:#3aa26c">)</span><span style="position:static;color:#3aa26c">)</span></span><span style="right:608px;top:55.68px;color:#a59d94;transform:scaleX(0.8805);transform-origin:right center">2</span><span style="left:46px;top:55.68px;transform:scaleX(0.8805);transform-origin:left center">ry <span style="position:static;color:#3aa26c">=</span> <span style="position:static;color:#3aa26c">(</span><span style="position:static;color:#3aa26c">(</span><span style="position:static;color:#f08030">y</span><span style="position:static;color:#3aa26c">-</span><span style="position:static;color:#3a5b8c">4</span><span style="position:static;color:#3aa26c">)</span><span style="position:static;color:#3aa26c">-</span><span style="position:static;color:#3aa26c">(</span><span style="position:static;color:#f08030">x</span><span style="position:static;color:#3aa26c">/</span><span style="position:static;color:#3a5b8c">2</span><span style="position:static;color:#3aa26c">)</span><span style="position:static;color:#3aa26c">)</span></span><span style="right:608px;top:97.68px;color:#a59d94;transform:scaleX(0.8805);transform-origin:right center">3</span><span style="right:608px;top:139.68px;color:#a59d94;transform:scaleX(0.8805);transform-origin:right center">4</span><span style="left:46px;top:139.68px;transform:scaleX(0.8805);transform-origin:left center">tx <span style="position:static;color:#3aa26c">=</span> rx <span style="position:static;color:#3aa26c">%</span> <span style="position:static;color:#3a5b8c">16</span></span><span style="right:608px;top:181.68px;color:#a59d94;transform:scaleX(0.8805);transform-origin:right center">5</span><span style="left:46px;top:181.68px;transform:scaleX(0.8805);transform-origin:left center">ty <span style="position:static;color:#3aa26c">=</span> ry <span style="position:static;color:#3aa26c">%</span> <span style="position:static;color:#3a5b8c">16</span></span><span style="right:608px;top:223.68px;color:#a59d94;transform:scaleX(0.8805);transform-origin:right center">6</span><span style="right:608px;top:265.68px;color:#a59d94;transform:scaleX(0.8805);transform-origin:right center">7</span><span style="left:46px;top:265.68px;transform:scaleX(0.8805);transform-origin:left center">cx <span style="position:static;color:#3aa26c">=</span> tx <span style="position:static;color:#3aa26c">-</span> <span style="position:static;color:#3a5b8c">7</span></span><span style="right:608px;top:307.68px;color:#a59d94;transform:scaleX(0.8805);transform-origin:right center">8</span><span style="left:46px;top:307.68px;transform:scaleX(0.8805);transform-origin:left center">cy <span style="position:static;color:#3aa26c">=</span> ty <span style="position:static;color:#3aa26c">-</span> <span style="position:static;color:#3a5b8c">7</span></span><span style="right:608px;top:349.68px;color:#a59d94;transform:scaleX(0.8805);transform-origin:right center">9</span><span style="right:608px;top:391.68px;color:#a59d94;transform:scaleX(0.8805);transform-origin:right center">10</span><span style="left:46px;top:391.68px;transform:scaleX(0.8805);transform-origin:left center">m <span style="position:static;color:#3aa26c">=</span> <span style="position:static;color:#3aa26c">max</span><span style="position:static;color:#3aa26c">(</span><span style="position:static;color:#3aa26c">abs</span><span style="position:static;color:#3aa26c">(</span>cx<span style="position:static;color:#3aa26c">)</span><span style="position:static;color:#3aa26c">,</span> <span style="position:static;color:#3aa26c">abs</span><span style="position:static;color:#3aa26c">(</span>cy<span style="position:static;color:#3aa26c">)</span><span style="position:static;color:#3aa26c">)</span></span><span style="right:608px;top:433.68px;color:#a59d94;transform:scaleX(0.8805);transform-origin:right center">11</span><span style="right:608px;top:475.68px;color:#a59d94;transform:scaleX(0.8805);transform-origin:right center">12</span><span style="left:46px;top:475.68px;transform:scaleX(0.8805);transform-origin:left center">tile_x <span style="position:static;color:#3aa26c">=</span> <span style="position:static;color:#3aa26c">floor</span><span style="position:static;color:#3aa26c">(</span>rx<span style="position:static;color:#3aa26c">/</span><span style="position:static;color:#3a5b8c">16</span><span style="position:static;color:#3aa26c">)</span></span><span style="right:608px;top:517.68px;color:#a59d94;transform:scaleX(0.8805);transform-origin:right center">13</span><span style="left:46px;top:517.68px;transform:scaleX(0.8805);transform-origin:left center">tile_y <span style="position:static;color:#3aa26c">=</span> <span style="position:static;color:#3aa26c">floor</span><span style="position:static;color:#3aa26c">(</span>ry<span style="position:static;color:#3aa26c">/</span><span style="position:static;color:#3a5b8c">16</span><span style="position:static;color:#3aa26c">)</span></span><span style="right:608px;top:559.68px;color:#a59d94;transform:scaleX(0.8805);transform-origin:right center">14</span><span style="left:46px;top:559.68px;transform:scaleX(0.8805);transform-origin:left center">t_c <span style="position:static;color:#3aa26c">=</span> <span style="position:static;color:#3aa26c">(</span><span style="position:static;color:#3aa26c">(</span><span style="position:static;color:#3aa26c">(</span>tile_x <span style="position:static;color:#3aa26c">*</span> <span style="position:static;color:#3a5b8c">3</span> <span style="position:static;color:#3aa26c">+</span> tile_y <span style="position:static;color:#3aa26c">*</span> <span style="position:static;color:#3a5b8c">2</span><span style="position:static;color:#3aa26c">)</span><span style="position:static;color:#3aa26c">)</span> <span style="position:static;color:#3aa26c">%</span> <span style="position:static;color:#3a5b8c">4</span><span style="position:static;color:#3aa26c">)</span></span><span style="right:608px;top:601.68px;color:#a59d94;transform:scaleX(0.8805);transform-origin:right center">15</span><span style="left:46px;top:601.68px;transform:scaleX(0.8805);transform-origin:left center">p <span style="position:static;color:#3aa26c">=</span> <span style="position:static;color:#3aa26c">{</span> <span style="position:static;color:#3a5b8c">12</span><span style="position:static;color:#3aa26c">,</span> <span style="position:static;color:#3a5b8c">6</span><span style="position:static;color:#3aa26c">,</span> <span style="position:static;color:#3a5b8c">13</span><span style="position:static;color:#3aa26c">,</span> <span style="position:static;color:#3a5b8c">7</span> <span style="position:static;color:#3aa26c">}</span></span><span style="right:608px;top:643.68px;color:#a59d94;transform:scaleX(0.8805);transform-origin:right center">16</span><span style="left:46px;top:643.68px;transform:scaleX(0.8805);transform-origin:left center">c <span style="position:static;color:#3aa26c">=</span> p<span style="position:static;color:#3aa26c">[</span>t_c<span style="position:static;color:#3aa26c">+</span><span style="position:static;color:#3a5b8c">1</span><span style="position:static;color:#3aa26c">]</span></span><span style="right:608px;top:685.68px;color:#a59d94;transform:scaleX(0.8805);transform-origin:right center">17</span><span style="right:608px;top:727.68px;color:#a59d94;transform:scaleX(0.8805);transform-origin:right center">18</span><span style="right:608px;top:769.68px;color:#a59d94;transform:scaleX(0.8805);transform-origin:right center">19</span><span style="left:46px;top:769.68px;transform:scaleX(0.8805);transform-origin:left center"><span style="position:static;color:#1848d8">if</span> <span style="position:static;color:#3aa26c">(</span><span style="position:static;color:#f08030">x</span> <span style="position:static;color:#3aa26c">+</span> <span style="position:static;color:#f08030">y</span><span style="position:static;color:#3aa26c">)</span> <span style="position:static;color:#3aa26c">%</span> <span style="position:static;color:#3a5b8c">4</span> <span style="position:static;color:#3aa26c">=</span><span style="position:static;color:#3aa26c">=</span> <span style="position:static;color:#3a5b8c">1</span> <span style="position:static;color:#1848d8">and</span> <span style="position:static;color:#f08030">y</span> <span style="position:static;color:#3aa26c">%</span> <span style="position:static;color:#3a5b8c">2</span> <span style="position:static;color:#3aa26c">=</span><span style="position:static;color:#3aa26c">=</span> <span style="position:static;color:#3a5b8c">0</span> <span style="position:static;color:#1848d8">then</span></span><span style="right:608px;top:811.68px;color:#a59d94;transform:scaleX(0.8805);transform-origin:right center">20</span><span style="left:46px;top:811.68px;transform:scaleX(0.8805);transform-origin:left center">  <span style="position:static;color:#1848d8">if</span> c <span style="position:static;color:#3aa26c">~</span><span style="position:static;color:#3aa26c">=</span> <span style="position:static;color:#3a5b8c">12</span> <span style="position:static;color:#1848d8">then</span> c <span style="position:static;color:#3aa26c">=</span> <span style="position:static;color:#3a5b8c">12</span> <span style="position:static;color:#1848d8">else</span> c <span style="position:static;color:#3aa26c">=</span> <span style="position:static;color:#3a5b8c">13</span> <span style="position:static;color:#1848d8">end</span></span><span style="right:608px;top:853.68px;color:#a59d94;transform:scaleX(0.8805);transform-origin:right center">21</span><span style="left:46px;top:853.68px;transform:scaleX(0.8805);transform-origin:left center"><span style="position:static;color:#1848d8">end</span></span></div>
<div style="left:758px;top:977px;width:652px;height:41px;background:#c6c6ca;"></div>
<svg style="left:762px;top:982px" width="388" height="32" shape-rendering="crispEdges"><rect x="0" y="0" width="388" height="32" fill="#ffdd33"/><rect x="1" y="1" width="386" height="30" fill="none" stroke="#000" stroke-width="2" stroke-dasharray="2 2"/></svg>
<span style="left:871.5px;top:987.57px;font:normal 20px/1 'Liberation Sans',sans-serif;color:#000;transform:scaleX(0.8067);transform-origin:left center;">RUN CODE (CTRL+R)</span>
<svg style="left:1158px;top:982px" width="248" height="32" shape-rendering="crispEdges"><rect x="0" y="0" width="248" height="32" fill="#c6c6ca"/><rect x="1" y="1" width="246" height="30" fill="none" stroke="#000" stroke-width="2" stroke-dasharray="2 2"/></svg>
<span style="left:1162px;top:987.57px;font:normal 20px/1 'Liberation Sans',sans-serif;color:#000;transform:scaleX(0.8946);transform-origin:left center;">Auto run code as I type</span>
<div style="left:1356px;top:987px;width:46px;height:23px;background:#000;border-radius:5px;"></div>
<div style="left:1358px;top:989px;width:42px;height:19px;background:#3ea66e;border-radius:3px;"></div>
<div style="left:1379px;top:987px;width:23px;height:23px;background:#000;border-radius:5px;"></div>
<div style="left:1381px;top:989px;width:19px;height:17px;background:#d6d6da;border-radius:3px;"></div>
<div style="left:1382px;top:1005px;width:17px;height:2px;background:#8c8884;"></div>
<div style="left:758px;top:1018px;width:41px;height:48px;background:#dce8f8;"></div>
<span style="left:772.0px;top:1032.76px;font:normal 18px/1 'Liberation Sans',sans-serif;color:#000;">1</span>
<div style="left:799px;top:1018px;width:41px;height:48px;background:#66708f;"></div>
<span style="left:813.0px;top:1032.76px;font:normal 18px/1 'Liberation Sans',sans-serif;color:#000;">2</span>
<div style="left:840px;top:1018px;width:40px;height:48px;background:#141414;"></div>
<span style="left:853.5px;top:1032.76px;font:normal 18px/1 'Liberation Sans',sans-serif;color:#000;">3</span>
<div style="left:880px;top:1018px;width:41px;height:48px;background:#f8a4a4;"></div>
<span style="left:894.0px;top:1032.76px;font:normal 18px/1 'Liberation Sans',sans-serif;color:#000;">4</span>
<div style="left:921px;top:1018px;width:41px;height:48px;background:#d4659f;"></div>
<span style="left:935.0px;top:1032.76px;font:normal 18px/1 'Liberation Sans',sans-serif;color:#000;">5</span>
<div style="left:962px;top:1018px;width:40px;height:48px;background:#732e9c;"></div>
<span style="left:975.5px;top:1032.76px;font:normal 18px/1 'Liberation Sans',sans-serif;color:#000;">6</span>
<div style="left:1002px;top:1018px;width:41px;height:48px;background:#ea3360;"></div>
<span style="left:1016.0px;top:1032.76px;font:normal 18px/1 'Liberation Sans',sans-serif;color:#000;">7</span>
<div style="left:1043px;top:1018px;width:41px;height:48px;background:#f08556;"></div>
<span style="left:1057.0px;top:1032.76px;font:normal 18px/1 'Liberation Sans',sans-serif;color:#000;">8</span>
<div style="left:1084px;top:1018px;width:41px;height:48px;background:#fcc36b;"></div>
<span style="left:1098.0px;top:1032.76px;font:normal 18px/1 'Liberation Sans',sans-serif;color:#000;">9</span>
<div style="left:1125px;top:1018px;width:41px;height:48px;background:#86c04d;"></div>
<span style="left:1135.0px;top:1032.76px;font:normal 18px/1 'Liberation Sans',sans-serif;color:#000;">10</span>
<div style="left:1166px;top:1018px;width:40px;height:48px;background:#3c9e5c;"></div>
<span style="left:1175.5px;top:1032.76px;font:normal 18px/1 'Liberation Sans',sans-serif;color:#000;">11</span>
<div style="left:1206px;top:1018px;width:41px;height:48px;background:#36366e;"></div>
<span style="left:1216.0px;top:1032.76px;font:normal 18px/1 'Liberation Sans',sans-serif;color:#000;">12</span>
<div style="left:1247px;top:1018px;width:41px;height:48px;background:#4a56ac;"></div>
<span style="left:1257.0px;top:1032.76px;font:normal 18px/1 'Liberation Sans',sans-serif;color:#000;">13</span>
<div style="left:1288px;top:1018px;width:40px;height:48px;background:#6c96dc;"></div>
<span style="left:1297.5px;top:1032.76px;font:normal 18px/1 'Liberation Sans',sans-serif;color:#000;">14</span>
<div style="left:1328px;top:1018px;width:41px;height:48px;background:#9c5458;"></div>
<span style="left:1338.0px;top:1032.76px;font:normal 18px/1 'Liberation Sans',sans-serif;color:#000;">15</span>
<div style="left:1369px;top:1018px;width:41px;height:48px;background:#4c2838;"></div>
<span style="left:1379.0px;top:1032.76px;font:normal 18px/1 'Liberation Sans',sans-serif;color:#000;">16</span>
<span style="left:1428px;top:123.07px;font:normal 20px/1 'Liberation Sans',sans-serif;color:#000;transform:scaleX(0.8198);transform-origin:left center;">OUTPUT IMAGE</span>
<svg style="left:1428px;top:152px" width="442" height="788" viewBox="0 0 90 160" preserveAspectRatio="none" shape-rendering="crispEdges"><rect width="90" height="160" fill="#36366e"/>
<path fill="#ea3360" d="M0 0h1v1h-1zM2 0h3v1h-3zM6 0h1v1h-1zM28 0h1v1h-1zM30 0h3v1h-3zM34 0h3v1h-3zM38 0h1v1h-1zM60 0h1v1h-1zM62 0h3v1h-3zM66 0h3v1h-3zM70 0h1v1h-1zM0 1h6v1h-6zM30 1h8v1h-8zM62 1h8v1h-8zM0 2h3v1h-3zM4 2h2v1h-2zM32 2h3v1h-3zM36 2h2v1h-2zM64 2h3v1h-3zM68 2h2v1h-2zM2 3h3v1h-3zM34 3h3v1h-3zM66 3h3v1h-3zM4 4h1v1h-1zM36 4h1v1h-1zM68 4h1v1h-1zM18 13h1v1h-1zM50 13h1v1h-1zM82 13h1v1h-1zM17 14h2v1h-2zM20 14h1v1h-1zM49 14h2v1h-2zM52 14h1v1h-1zM81 14h2v1h-2zM84 14h1v1h-1zM17 15h6v1h-6zM49 15h6v1h-6zM81 15h6v1h-6zM16 16h1v1h-1zM18 16h3v1h-3zM22 16h3v1h-3zM48 16h1v1h-1zM50 16h3v1h-3zM54 16h3v1h-3zM80 16h1v1h-1zM82 16h3v1h-3zM86 16h3v1h-3zM16 17h11v1h-11zM48 17h11v1h-11zM80 17h10v1h-10zM16 18h3v1h-3zM20 18h3v1h-3zM24 18h3v1h-3zM28 18h1v1h-1zM48 18h3v1h-3zM52 18h3v1h-3zM56 18h3v1h-3zM60 18h1v1h-1zM80 18h3v1h-3zM84 18h3v1h-3zM88 18h2v1h-2zM15 19h14v1h-14zM47 19h14v1h-14zM79 19h11v1h-11zM14 20h3v1h-3zM18 20h3v1h-3zM22 20h3v1h-3zM26 20h3v1h-3zM46 20h3v1h-3zM50 20h3v1h-3zM54 20h3v1h-3zM58 20h3v1h-3zM78 20h3v1h-3zM82 20h3v1h-3zM86 20h3v1h-3zM14 21h14v1h-14zM46 21h14v1h-14zM78 21h12v1h-12zM13 22h2v1h-2zM16 22h3v1h-3zM20 22h3v1h-3zM24 22h3v1h-3zM45 22h2v1h-2zM48 22h3v1h-3zM52 22h3v1h-3zM56 22h3v1h-3zM77 22h2v1h-2zM80 22h3v1h-3zM84 22h3v1h-3zM88 22h2v1h-2zM13 23h14v1h-14zM45 23h14v1h-14zM77 23h13v1h-13zM12 24h1v1h-1zM14 24h3v1h-3zM18 24h3v1h-3zM22 24h3v1h-3zM26 24h1v1h-1zM44 24h1v1h-1zM46 24h3v1h-3zM50 24h3v1h-3zM54 24h3v1h-3zM58 24h1v1h-1zM76 24h1v1h-1zM78 24h3v1h-3zM82 24h3v1h-3zM86 24h3v1h-3zM14 25h12v1h-12zM46 25h12v1h-12zM78 25h12v1h-12zM16 26h3v1h-3zM20 26h3v1h-3zM24 26h2v1h-2zM48 26h3v1h-3zM52 26h3v1h-3zM56 26h2v1h-2zM80 26h3v1h-3zM84 26h3v1h-3zM88 26h2v1h-2zM18 27h7v1h-7zM50 27h7v1h-7zM82 27h7v1h-7zM20 28h1v1h-1zM22 28h3v1h-3zM52 28h1v1h-1zM54 28h3v1h-3zM84 28h1v1h-1zM86 28h3v1h-3zM22 29h2v1h-2zM54 29h2v1h-2zM86 29h2v1h-2zM5 39h2v1h-2zM37 39h2v1h-2zM69 39h2v1h-2zM4 40h1v1h-1zM6 40h3v1h-3zM36 40h1v1h-1zM38 40h3v1h-3zM68 40h1v1h-1zM70 40h3v1h-3zM4 41h7v1h-7zM36 41h7v1h-7zM68 41h7v1h-7zM4 42h3v1h-3zM8 42h3v1h-3zM12 42h1v1h-1zM36 42h3v1h-3zM40 42h3v1h-3zM44 42h1v1h-1zM68 42h3v1h-3zM72 42h3v1h-3zM76 42h1v1h-1zM3 43h12v1h-12zM35 43h12v1h-12zM67 43h12v1h-12zM2 44h3v1h-3zM6 44h3v1h-3zM10 44h3v1h-3zM14 44h3v1h-3zM34 44h3v1h-3zM38 44h3v1h-3zM42 44h3v1h-3zM46 44h3v1h-3zM66 44h3v1h-3zM70 44h3v1h-3zM74 44h3v1h-3zM78 44h3v1h-3zM2 45h14v1h-14zM34 45h14v1h-14zM66 45h14v1h-14zM1 46h2v1h-2zM4 46h3v1h-3zM8 46h3v1h-3zM12 46h3v1h-3zM33 46h2v1h-2zM36 46h3v1h-3zM40 46h3v1h-3zM44 46h3v1h-3zM65 46h2v1h-2zM68 46h3v1h-3zM72 46h3v1h-3zM76 46h3v1h-3zM1 47h14v1h-14zM33 47h14v1h-14zM65 47h14v1h-14zM0 48h1v1h-1zM2 48h3v1h-3zM6 48h3v1h-3zM10 48h3v1h-3zM14 48h1v1h-1zM32 48h1v1h-1zM34 48h3v1h-3zM38 48h3v1h-3zM42 48h3v1h-3zM46 48h1v1h-1zM64 48h1v1h-1zM66 48h3v1h-3zM70 48h3v1h-3zM74 48h3v1h-3zM78 48h1v1h-1zM0 49h14v1h-14zM32 49h14v1h-14zM64 49h14v1h-14zM0 50h3v1h-3zM4 50h3v1h-3zM8 50h3v1h-3zM12 50h2v1h-2zM32 50h3v1h-3zM36 50h3v1h-3zM40 50h3v1h-3zM44 50h2v1h-2zM64 50h3v1h-3zM68 50h3v1h-3zM72 50h3v1h-3zM76 50h2v1h-2zM2 51h11v1h-11zM34 51h11v1h-11zM66 51h11v1h-11zM4 52h1v1h-1zM6 52h3v1h-3zM10 52h3v1h-3zM36 52h1v1h-1zM38 52h3v1h-3zM42 52h3v1h-3zM68 52h1v1h-1zM70 52h3v1h-3zM74 52h3v1h-3zM6 53h6v1h-6zM38 53h6v1h-6zM70 53h6v1h-6zM8 54h3v1h-3zM40 54h3v1h-3zM72 54h3v1h-3zM10 55h1v1h-1zM42 55h1v1h-1zM74 55h1v1h-1zM24 64h1v1h-1zM56 64h1v1h-1zM88 64h1v1h-1zM24 65h3v1h-3zM56 65h3v1h-3zM88 65h2v1h-2zM24 66h3v1h-3zM28 66h1v1h-1zM56 66h3v1h-3zM60 66h1v1h-1zM88 66h2v1h-2zM23 67h8v1h-8zM55 67h8v1h-8zM87 67h3v1h-3zM0 68h1v1h-1zM22 68h3v1h-3zM26 68h3v1h-3zM30 68h3v1h-3zM54 68h3v1h-3zM58 68h3v1h-3zM62 68h3v1h-3zM86 68h3v1h-3zM0 69h3v1h-3zM22 69h13v1h-13zM54 69h13v1h-13zM86 69h4v1h-4zM0 70h3v1h-3zM21 70h2v1h-2zM24 70h3v1h-3zM28 70h3v1h-3zM32 70h3v1h-3zM53 70h2v1h-2zM56 70h3v1h-3zM60 70h3v1h-3zM64 70h3v1h-3zM85 70h2v1h-2zM88 70h2v1h-2zM0 71h3v1h-3zM21 71h14v1h-14zM53 71h14v1h-14zM85 71h5v1h-5zM0 72h1v1h-1zM2 72h1v1h-1zM20 72h1v1h-1zM22 72h3v1h-3zM26 72h3v1h-3zM30 72h3v1h-3zM34 72h1v1h-1zM52 72h1v1h-1zM54 72h3v1h-3zM58 72h3v1h-3zM62 72h3v1h-3zM66 72h1v1h-1zM84 72h1v1h-1zM86 72h3v1h-3zM0 73h2v1h-2zM20 73h14v1h-14zM52 73h14v1h-14zM84 73h6v1h-6zM0 74h2v1h-2zM20 74h3v1h-3zM24 74h3v1h-3zM28 74h3v1h-3zM32 74h2v1h-2zM52 74h3v1h-3zM56 74h3v1h-3zM60 74h3v1h-3zM64 74h2v1h-2zM84 74h3v1h-3zM88 74h2v1h-2zM0 75h1v1h-1zM19 75h14v1h-14zM51 75h14v1h-14zM83 75h7v1h-7zM0 76h1v1h-1zM20 76h1v1h-1zM22 76h3v1h-3zM26 76h3v1h-3zM30 76h3v1h-3zM52 76h1v1h-1zM54 76h3v1h-3zM58 76h3v1h-3zM62 76h3v1h-3zM84 76h1v1h-1zM86 76h3v1h-3zM22 77h10v1h-10zM54 77h10v1h-10zM86 77h4v1h-4zM24 78h3v1h-3zM28 78h3v1h-3zM56 78h3v1h-3zM60 78h3v1h-3zM88 78h2v1h-2zM26 79h5v1h-5zM58 79h5v1h-5zM28 80h1v1h-1zM30 80h1v1h-1zM60 80h1v1h-1zM62 80h1v1h-1zM12 90h1v1h-1zM44 90h1v1h-1zM76 90h1v1h-1zM11 91h4v1h-4zM43 91h4v1h-4zM75 91h4v1h-4zM10 92h3v1h-3zM14 92h3v1h-3zM42 92h3v1h-3zM46 92h3v1h-3zM74 92h3v1h-3zM78 92h3v1h-3zM10 93h9v1h-9zM42 93h9v1h-9zM74 93h9v1h-9zM9 94h2v1h-2zM12 94h3v1h-3zM16 94h3v1h-3zM20 94h1v1h-1zM41 94h2v1h-2zM44 94h3v1h-3zM48 94h3v1h-3zM52 94h1v1h-1zM73 94h2v1h-2zM76 94h3v1h-3zM80 94h3v1h-3zM84 94h1v1h-1zM9 95h14v1h-14zM41 95h14v1h-14zM73 95h14v1h-14zM8 96h1v1h-1zM10 96h3v1h-3zM14 96h3v1h-3zM18 96h3v1h-3zM22 96h1v1h-1zM40 96h1v1h-1zM42 96h3v1h-3zM46 96h3v1h-3zM50 96h3v1h-3zM54 96h1v1h-1zM72 96h1v1h-1zM74 96h3v1h-3zM78 96h3v1h-3zM82 96h3v1h-3zM86 96h1v1h-1zM8 97h14v1h-14zM40 97h14v1h-14zM72 97h14v1h-14zM8 98h3v1h-3zM12 98h3v1h-3zM16 98h3v1h-3zM20 98h2v1h-2zM40 98h3v1h-3zM44 98h3v1h-3zM48 98h3v1h-3zM52 98h2v1h-2zM72 98h3v1h-3zM76 98h3v1h-3zM80 98h3v1h-3zM84 98h2v1h-2zM7 99h14v1h-14zM39 99h14v1h-14zM71 99h14v1h-14zM6 100h3v1h-3zM10 100h3v1h-3zM14 100h3v1h-3zM18 100h3v1h-3zM38 100h3v1h-3zM42 100h3v1h-3zM46 100h3v1h-3zM50 100h3v1h-3zM70 100h3v1h-3zM74 100h3v1h-3zM78 100h3v1h-3zM82 100h3v1h-3zM6 101h14v1h-14zM38 101h14v1h-14zM70 101h14v1h-14zM8 102h3v1h-3zM12 102h3v1h-3zM16 102h3v1h-3zM40 102h3v1h-3zM44 102h3v1h-3zM48 102h3v1h-3zM72 102h3v1h-3zM76 102h3v1h-3zM80 102h3v1h-3zM10 103h9v1h-9zM42 103h9v1h-9zM74 103h9v1h-9zM12 104h1v1h-1zM14 104h3v1h-3zM18 104h1v1h-1zM44 104h1v1h-1zM46 104h3v1h-3zM50 104h1v1h-1zM76 104h1v1h-1zM78 104h3v1h-3zM82 104h1v1h-1zM14 105h4v1h-4zM46 105h4v1h-4zM78 105h4v1h-4zM16 106h2v1h-2zM48 106h2v1h-2zM80 106h2v1h-2zM0 116h1v1h-1zM30 116h3v1h-3zM62 116h3v1h-3zM0 117h3v1h-3zM30 117h5v1h-5zM62 117h5v1h-5zM0 118h3v1h-3zM4 118h1v1h-1zM29 118h2v1h-2zM32 118h3v1h-3zM36 118h1v1h-1zM61 118h2v1h-2zM64 118h3v1h-3zM68 118h1v1h-1zM0 119h7v1h-7zM29 119h10v1h-10zM61 119h10v1h-10zM0 120h1v1h-1zM2 120h3v1h-3zM6 120h3v1h-3zM28 120h1v1h-1zM30 120h3v1h-3zM34 120h3v1h-3zM38 120h3v1h-3zM60 120h1v1h-1zM62 120h3v1h-3zM66 120h3v1h-3zM70 120h3v1h-3zM0 121h10v1h-10zM28 121h14v1h-14zM60 121h14v1h-14zM0 122h3v1h-3zM4 122h3v1h-3zM8 122h2v1h-2zM28 122h3v1h-3zM32 122h3v1h-3zM36 122h3v1h-3zM40 122h2v1h-2zM60 122h3v1h-3zM64 122h3v1h-3zM68 122h3v1h-3zM72 122h2v1h-2zM0 123h9v1h-9zM27 123h14v1h-14zM59 123h14v1h-14zM0 124h1v1h-1zM2 124h3v1h-3zM6 124h3v1h-3zM26 124h3v1h-3zM30 124h3v1h-3zM34 124h3v1h-3zM38 124h3v1h-3zM58 124h3v1h-3zM62 124h3v1h-3zM66 124h3v1h-3zM70 124h3v1h-3zM0 125h8v1h-8zM26 125h14v1h-14zM58 125h14v1h-14zM0 126h3v1h-3zM4 126h3v1h-3zM25 126h2v1h-2zM28 126h3v1h-3zM32 126h3v1h-3zM36 126h3v1h-3zM57 126h2v1h-2zM60 126h3v1h-3zM64 126h3v1h-3zM68 126h3v1h-3zM89 126h1v1h-1zM0 127h7v1h-7zM26 127h13v1h-13zM58 127h13v1h-13zM0 128h1v1h-1zM2 128h3v1h-3zM6 128h1v1h-1zM28 128h1v1h-1zM30 128h3v1h-3zM34 128h3v1h-3zM38 128h1v1h-1zM60 128h1v1h-1zM62 128h3v1h-3zM66 128h3v1h-3zM70 128h1v1h-1zM0 129h6v1h-6zM30 129h8v1h-8zM62 129h8v1h-8zM0 130h3v1h-3zM4 130h2v1h-2zM32 130h3v1h-3zM36 130h2v1h-2zM64 130h3v1h-3zM68 130h2v1h-2zM2 131h3v1h-3zM34 131h3v1h-3zM66 131h3v1h-3zM4 132h1v1h-1zM36 132h1v1h-1zM68 132h1v1h-1zM18 141h1v1h-1zM50 141h1v1h-1zM82 141h1v1h-1zM17 142h2v1h-2zM20 142h1v1h-1zM49 142h2v1h-2zM52 142h1v1h-1zM81 142h2v1h-2zM84 142h1v1h-1zM17 143h6v1h-6zM49 143h6v1h-6zM81 143h6v1h-6zM16 144h1v1h-1zM18 144h3v1h-3zM22 144h3v1h-3zM48 144h1v1h-1zM50 144h3v1h-3zM54 144h3v1h-3zM80 144h1v1h-1zM82 144h3v1h-3zM86 144h3v1h-3zM16 145h11v1h-11zM48 145h11v1h-11zM80 145h10v1h-10zM16 146h3v1h-3zM20 146h3v1h-3zM24 146h3v1h-3zM28 146h1v1h-1zM48 146h3v1h-3zM52 146h3v1h-3zM56 146h3v1h-3zM60 146h1v1h-1zM80 146h3v1h-3zM84 146h3v1h-3zM88 146h2v1h-2zM15 147h14v1h-14zM47 147h14v1h-14zM79 147h11v1h-11zM14 148h3v1h-3zM18 148h3v1h-3zM22 148h3v1h-3zM26 148h3v1h-3zM46 148h3v1h-3zM50 148h3v1h-3zM54 148h3v1h-3zM58 148h3v1h-3zM78 148h3v1h-3zM82 148h3v1h-3zM86 148h3v1h-3zM14 149h14v1h-14zM46 149h14v1h-14zM78 149h12v1h-12zM13 150h2v1h-2zM16 150h3v1h-3zM20 150h3v1h-3zM24 150h3v1h-3zM45 150h2v1h-2zM48 150h3v1h-3zM52 150h3v1h-3zM56 150h3v1h-3zM77 150h2v1h-2zM80 150h3v1h-3zM84 150h3v1h-3zM88 150h2v1h-2zM13 151h14v1h-14zM45 151h14v1h-14zM77 151h13v1h-13zM12 152h1v1h-1zM14 152h3v1h-3zM18 152h3v1h-3zM22 152h3v1h-3zM26 152h1v1h-1zM44 152h1v1h-1zM46 152h3v1h-3zM50 152h3v1h-3zM54 152h3v1h-3zM58 152h1v1h-1zM76 152h1v1h-1zM78 152h3v1h-3zM82 152h3v1h-3zM86 152h3v1h-3zM14 153h12v1h-12zM46 153h12v1h-12zM78 153h12v1h-12zM16 154h3v1h-3zM20 154h3v1h-3zM24 154h2v1h-2zM48 154h3v1h-3zM52 154h3v1h-3zM56 154h2v1h-2zM80 154h3v1h-3zM84 154h3v1h-3zM88 154h2v1h-2zM18 155h7v1h-7zM50 155h7v1h-7zM82 155h7v1h-7zM20 156h1v1h-1zM22 156h3v1h-3zM52 156h1v1h-1zM54 156h3v1h-3zM84 156h1v1h-1zM86 156h3v1h-3zM22 157h2v1h-2zM54 157h2v1h-2zM86 157h2v1h-2z"/>
<path fill="#4a56ac" d="M8 0h1v1h-1zM10 0h3v1h-3zM14 0h3v1h-3zM18 0h3v1h-3zM22 0h1v1h-1zM40 0h1v1h-1zM42 0h3v1h-3zM46 0h3v1h-3zM50 0h3v1h-3zM54 0h1v1h-1zM72 0h1v1h-1zM74 0h3v1h-3zM78 0h3v1h-3zM82 0h3v1h-3zM86 0h1v1h-1zM8 1h14v1h-14zM40 1h14v1h-14zM72 1h14v1h-14zM8 2h3v1h-3zM12 2h3v1h-3zM16 2h3v1h-3zM20 2h2v1h-2zM40 2h3v1h-3zM44 2h3v1h-3zM48 2h3v1h-3zM52 2h2v1h-2zM72 2h3v1h-3zM76 2h3v1h-3zM80 2h3v1h-3zM84 2h2v1h-2zM7 3h14v1h-14zM39 3h14v1h-14zM71 3h14v1h-14zM6 4h3v1h-3zM10 4h3v1h-3zM14 4h3v1h-3zM18 4h3v1h-3zM38 4h3v1h-3zM42 4h3v1h-3zM46 4h3v1h-3zM50 4h3v1h-3zM70 4h3v1h-3zM74 4h3v1h-3zM78 4h3v1h-3zM82 4h3v1h-3zM6 5h14v1h-14zM38 5h14v1h-14zM70 5h14v1h-14zM8 6h3v1h-3zM12 6h3v1h-3zM16 6h3v1h-3zM40 6h3v1h-3zM44 6h3v1h-3zM48 6h3v1h-3zM72 6h3v1h-3zM76 6h3v1h-3zM80 6h3v1h-3zM10 7h9v1h-9zM42 7h9v1h-9zM74 7h9v1h-9zM5 8h1v1h-1zM12 8h1v1h-1zM14 8h3v1h-3zM18 8h1v1h-1zM37 8h1v1h-1zM44 8h1v1h-1zM46 8h3v1h-3zM50 8h1v1h-1zM69 8h1v1h-1zM76 8h1v1h-1zM78 8h3v1h-3zM82 8h1v1h-1zM14 9h4v1h-4zM46 9h4v1h-4zM78 9h4v1h-4zM3 10h1v1h-1zM7 10h1v1h-1zM11 10h1v1h-1zM16 10h2v1h-2zM35 10h1v1h-1zM39 10h1v1h-1zM43 10h1v1h-1zM48 10h2v1h-2zM67 10h1v1h-1zM71 10h1v1h-1zM75 10h1v1h-1zM80 10h2v1h-2zM5 12h1v1h-1zM9 12h1v1h-1zM13 12h1v1h-1zM37 12h1v1h-1zM41 12h1v1h-1zM45 12h1v1h-1zM69 12h1v1h-1zM73 12h1v1h-1zM77 12h1v1h-1zM3 14h1v1h-1zM7 14h1v1h-1zM11 14h1v1h-1zM15 14h1v1h-1zM35 14h1v1h-1zM39 14h1v1h-1zM43 14h1v1h-1zM47 14h1v1h-1zM67 14h1v1h-1zM71 14h1v1h-1zM75 14h1v1h-1zM79 14h1v1h-1zM1 16h1v1h-1zM5 16h1v1h-1zM9 16h1v1h-1zM13 16h1v1h-1zM33 16h1v1h-1zM37 16h1v1h-1zM41 16h1v1h-1zM45 16h1v1h-1zM65 16h1v1h-1zM69 16h1v1h-1zM73 16h1v1h-1zM77 16h1v1h-1zM3 18h1v1h-1zM7 18h1v1h-1zM11 18h1v1h-1zM35 18h1v1h-1zM39 18h1v1h-1zM43 18h1v1h-1zM67 18h1v1h-1zM71 18h1v1h-1zM75 18h1v1h-1zM0 20h1v1h-1zM5 20h1v1h-1zM9 20h1v1h-1zM30 20h3v1h-3zM37 20h1v1h-1zM41 20h1v1h-1zM62 20h3v1h-3zM69 20h1v1h-1zM73 20h1v1h-1zM0 21h3v1h-3zM30 21h5v1h-5zM62 21h5v1h-5zM0 22h3v1h-3zM4 22h1v1h-1zM11 22h1v1h-1zM29 22h2v1h-2zM32 22h3v1h-3zM36 22h1v1h-1zM43 22h1v1h-1zM61 22h2v1h-2zM64 22h3v1h-3zM68 22h1v1h-1zM75 22h1v1h-1zM0 23h7v1h-7zM29 23h10v1h-10zM61 23h10v1h-10zM0 24h1v1h-1zM2 24h3v1h-3zM6 24h3v1h-3zM28 24h1v1h-1zM30 24h3v1h-3zM34 24h3v1h-3zM38 24h3v1h-3zM60 24h1v1h-1zM62 24h3v1h-3zM66 24h3v1h-3zM70 24h3v1h-3zM0 25h10v1h-10zM28 25h14v1h-14zM60 25h14v1h-14zM0 26h3v1h-3zM4 26h3v1h-3zM8 26h2v1h-2zM28 26h3v1h-3zM32 26h3v1h-3zM36 26h3v1h-3zM40 26h2v1h-2zM60 26h3v1h-3zM64 26h3v1h-3zM68 26h3v1h-3zM72 26h2v1h-2zM0 27h9v1h-9zM27 27h14v1h-14zM59 27h14v1h-14zM0 28h1v1h-1zM2 28h3v1h-3zM6 28h3v1h-3zM26 28h3v1h-3zM30 28h3v1h-3zM34 28h3v1h-3zM38 28h3v1h-3zM58 28h3v1h-3zM62 28h3v1h-3zM66 28h3v1h-3zM70 28h3v1h-3zM0 29h8v1h-8zM26 29h14v1h-14zM58 29h14v1h-14zM0 30h3v1h-3zM4 30h3v1h-3zM25 30h2v1h-2zM28 30h3v1h-3zM32 30h3v1h-3zM36 30h3v1h-3zM57 30h2v1h-2zM60 30h3v1h-3zM64 30h3v1h-3zM68 30h3v1h-3zM89 30h1v1h-1zM0 31h7v1h-7zM26 31h13v1h-13zM58 31h13v1h-13zM0 32h1v1h-1zM2 32h3v1h-3zM6 32h1v1h-1zM28 32h1v1h-1zM30 32h3v1h-3zM34 32h3v1h-3zM38 32h1v1h-1zM60 32h1v1h-1zM62 32h3v1h-3zM66 32h3v1h-3zM70 32h1v1h-1zM0 33h6v1h-6zM30 33h8v1h-8zM62 33h8v1h-8zM0 34h3v1h-3zM4 34h2v1h-2zM23 34h1v1h-1zM27 34h1v1h-1zM32 34h3v1h-3zM36 34h2v1h-2zM55 34h1v1h-1zM59 34h1v1h-1zM64 34h3v1h-3zM68 34h2v1h-2zM87 34h1v1h-1zM2 35h3v1h-3zM34 35h3v1h-3zM66 35h3v1h-3zM4 36h1v1h-1zM25 36h1v1h-1zM29 36h1v1h-1zM36 36h1v1h-1zM57 36h1v1h-1zM61 36h1v1h-1zM68 36h1v1h-1zM89 36h1v1h-1zM3 38h1v1h-1zM23 38h1v1h-1zM27 38h1v1h-1zM31 38h1v1h-1zM35 38h1v1h-1zM55 38h1v1h-1zM59 38h1v1h-1zM63 38h1v1h-1zM67 38h1v1h-1zM87 38h1v1h-1zM1 40h1v1h-1zM21 40h1v1h-1zM25 40h1v1h-1zM29 40h1v1h-1zM33 40h1v1h-1zM53 40h1v1h-1zM57 40h1v1h-1zM61 40h1v1h-1zM65 40h1v1h-1zM85 40h1v1h-1zM89 40h1v1h-1zM19 42h1v1h-1zM23 42h1v1h-1zM27 42h1v1h-1zM31 42h1v1h-1zM51 42h1v1h-1zM55 42h1v1h-1zM59 42h1v1h-1zM63 42h1v1h-1zM83 42h1v1h-1zM87 42h1v1h-1zM21 44h1v1h-1zM25 44h1v1h-1zM29 44h1v1h-1zM53 44h1v1h-1zM57 44h1v1h-1zM61 44h1v1h-1zM85 44h1v1h-1zM89 44h1v1h-1zM18 45h1v1h-1zM50 45h1v1h-1zM82 45h1v1h-1zM17 46h2v1h-2zM20 46h1v1h-1zM27 46h1v1h-1zM31 46h1v1h-1zM49 46h2v1h-2zM52 46h1v1h-1zM59 46h1v1h-1zM63 46h1v1h-1zM81 46h2v1h-2zM84 46h1v1h-1zM17 47h6v1h-6zM49 47h6v1h-6zM81 47h6v1h-6zM16 48h1v1h-1zM18 48h3v1h-3zM22 48h3v1h-3zM29 48h1v1h-1zM48 48h1v1h-1zM50 48h3v1h-3zM54 48h3v1h-3zM61 48h1v1h-1zM80 48h1v1h-1zM82 48h3v1h-3zM86 48h3v1h-3zM16 49h11v1h-11zM48 49h11v1h-11zM80 49h10v1h-10zM16 50h3v1h-3zM20 50h3v1h-3zM24 50h3v1h-3zM28 50h1v1h-1zM48 50h3v1h-3zM52 50h3v1h-3zM56 50h3v1h-3zM60 50h1v1h-1zM80 50h3v1h-3zM84 50h3v1h-3zM88 50h2v1h-2zM15 51h14v1h-14zM47 51h14v1h-14zM79 51h11v1h-11zM14 52h3v1h-3zM18 52h3v1h-3zM22 52h3v1h-3zM26 52h3v1h-3zM46 52h3v1h-3zM50 52h3v1h-3zM54 52h3v1h-3zM58 52h3v1h-3zM78 52h3v1h-3zM82 52h3v1h-3zM86 52h3v1h-3zM14 53h14v1h-14zM46 53h14v1h-14zM78 53h12v1h-12zM13 54h2v1h-2zM16 54h3v1h-3zM20 54h3v1h-3zM24 54h3v1h-3zM45 54h2v1h-2zM48 54h3v1h-3zM52 54h3v1h-3zM56 54h3v1h-3zM77 54h2v1h-2zM80 54h3v1h-3zM84 54h3v1h-3zM88 54h2v1h-2zM13 55h14v1h-14zM45 55h14v1h-14zM77 55h13v1h-13zM12 56h1v1h-1zM14 56h3v1h-3zM18 56h3v1h-3zM22 56h3v1h-3zM26 56h1v1h-1zM44 56h1v1h-1zM46 56h3v1h-3zM50 56h3v1h-3zM54 56h3v1h-3zM58 56h1v1h-1zM76 56h1v1h-1zM78 56h3v1h-3zM82 56h3v1h-3zM86 56h3v1h-3zM14 57h12v1h-12zM46 57h12v1h-12zM78 57h12v1h-12zM11 58h1v1h-1zM16 58h3v1h-3zM20 58h3v1h-3zM24 58h2v1h-2zM43 58h1v1h-1zM48 58h3v1h-3zM52 58h3v1h-3zM56 58h2v1h-2zM75 58h1v1h-1zM80 58h3v1h-3zM84 58h3v1h-3zM88 58h2v1h-2zM18 59h7v1h-7zM50 59h7v1h-7zM82 59h7v1h-7zM13 60h1v1h-1zM20 60h1v1h-1zM22 60h3v1h-3zM45 60h1v1h-1zM52 60h1v1h-1zM54 60h3v1h-3zM77 60h1v1h-1zM84 60h1v1h-1zM86 60h3v1h-3zM22 61h2v1h-2zM54 61h2v1h-2zM86 61h2v1h-2zM11 62h1v1h-1zM15 62h1v1h-1zM19 62h1v1h-1zM43 62h1v1h-1zM47 62h1v1h-1zM51 62h1v1h-1zM75 62h1v1h-1zM79 62h1v1h-1zM83 62h1v1h-1zM9 64h1v1h-1zM13 64h1v1h-1zM17 64h1v1h-1zM21 64h1v1h-1zM41 64h1v1h-1zM45 64h1v1h-1zM49 64h1v1h-1zM53 64h1v1h-1zM73 64h1v1h-1zM77 64h1v1h-1zM81 64h1v1h-1zM85 64h1v1h-1zM7 66h1v1h-1zM11 66h1v1h-1zM15 66h1v1h-1zM19 66h1v1h-1zM39 66h1v1h-1zM43 66h1v1h-1zM47 66h1v1h-1zM51 66h1v1h-1zM71 66h1v1h-1zM75 66h1v1h-1zM79 66h1v1h-1zM83 66h1v1h-1zM9 68h1v1h-1zM13 68h1v1h-1zM17 68h1v1h-1zM41 68h1v1h-1zM45 68h1v1h-1zM49 68h1v1h-1zM73 68h1v1h-1zM77 68h1v1h-1zM81 68h1v1h-1zM11 70h1v1h-1zM15 70h1v1h-1zM19 70h1v1h-1zM43 70h1v1h-1zM47 70h1v1h-1zM51 70h1v1h-1zM75 70h1v1h-1zM79 70h1v1h-1zM83 70h1v1h-1zM5 71h2v1h-2zM37 71h2v1h-2zM69 71h2v1h-2zM4 72h1v1h-1zM6 72h3v1h-3zM13 72h1v1h-1zM17 72h1v1h-1zM36 72h1v1h-1zM38 72h3v1h-3zM45 72h1v1h-1zM49 72h1v1h-1zM68 72h1v1h-1zM70 72h3v1h-3zM77 72h1v1h-1zM81 72h1v1h-1zM4 73h7v1h-7zM36 73h7v1h-7zM68 73h7v1h-7zM4 74h3v1h-3zM8 74h3v1h-3zM12 74h1v1h-1zM36 74h3v1h-3zM40 74h3v1h-3zM44 74h1v1h-1zM68 74h3v1h-3zM72 74h3v1h-3zM76 74h1v1h-1zM3 75h12v1h-12zM35 75h12v1h-12zM67 75h12v1h-12zM2 76h3v1h-3zM6 76h3v1h-3zM10 76h3v1h-3zM14 76h3v1h-3zM34 76h3v1h-3zM38 76h3v1h-3zM42 76h3v1h-3zM46 76h3v1h-3zM66 76h3v1h-3zM70 76h3v1h-3zM74 76h3v1h-3zM78 76h3v1h-3zM2 77h14v1h-14zM34 77h14v1h-14zM66 77h14v1h-14zM1 78h2v1h-2zM4 78h3v1h-3zM8 78h3v1h-3zM12 78h3v1h-3zM33 78h2v1h-2zM36 78h3v1h-3zM40 78h3v1h-3zM44 78h3v1h-3zM65 78h2v1h-2zM68 78h3v1h-3zM72 78h3v1h-3zM76 78h3v1h-3zM1 79h14v1h-14zM33 79h14v1h-14zM65 79h14v1h-14zM0 80h1v1h-1zM2 80h3v1h-3zM6 80h3v1h-3zM10 80h3v1h-3zM14 80h1v1h-1zM32 80h1v1h-1zM34 80h3v1h-3zM38 80h3v1h-3zM42 80h3v1h-3zM46 80h1v1h-1zM64 80h1v1h-1zM66 80h3v1h-3zM70 80h3v1h-3zM74 80h3v1h-3zM78 80h1v1h-1zM0 81h14v1h-14zM32 81h14v1h-14zM64 81h14v1h-14zM0 82h3v1h-3zM4 82h3v1h-3zM8 82h3v1h-3zM12 82h2v1h-2zM32 82h3v1h-3zM36 82h3v1h-3zM40 82h3v1h-3zM44 82h2v1h-2zM64 82h3v1h-3zM68 82h3v1h-3zM72 82h3v1h-3zM76 82h2v1h-2zM2 83h11v1h-11zM34 83h11v1h-11zM66 83h11v1h-11zM4 84h1v1h-1zM6 84h3v1h-3zM10 84h3v1h-3zM36 84h1v1h-1zM38 84h3v1h-3zM42 84h3v1h-3zM68 84h1v1h-1zM70 84h3v1h-3zM74 84h3v1h-3zM6 85h6v1h-6zM38 85h6v1h-6zM70 85h6v1h-6zM3 86h1v1h-1zM8 86h3v1h-3zM31 86h1v1h-1zM35 86h1v1h-1zM40 86h3v1h-3zM63 86h1v1h-1zM67 86h1v1h-1zM72 86h3v1h-3zM10 87h1v1h-1zM42 87h1v1h-1zM74 87h1v1h-1zM1 88h1v1h-1zM5 88h1v1h-1zM29 88h1v1h-1zM33 88h1v1h-1zM37 88h1v1h-1zM61 88h1v1h-1zM65 88h1v1h-1zM69 88h1v1h-1zM3 90h1v1h-1zM7 90h1v1h-1zM27 90h1v1h-1zM31 90h1v1h-1zM35 90h1v1h-1zM39 90h1v1h-1zM59 90h1v1h-1zM63 90h1v1h-1zM67 90h1v1h-1zM71 90h1v1h-1zM1 92h1v1h-1zM5 92h1v1h-1zM29 92h1v1h-1zM33 92h1v1h-1zM37 92h1v1h-1zM61 92h1v1h-1zM65 92h1v1h-1zM69 92h1v1h-1zM3 94h1v1h-1zM7 94h1v1h-1zM27 94h1v1h-1zM31 94h1v1h-1zM35 94h1v1h-1zM39 94h1v1h-1zM59 94h1v1h-1zM63 94h1v1h-1zM67 94h1v1h-1zM71 94h1v1h-1zM1 96h1v1h-1zM5 96h1v1h-1zM24 96h1v1h-1zM29 96h1v1h-1zM33 96h1v1h-1zM37 96h1v1h-1zM56 96h1v1h-1zM61 96h1v1h-1zM65 96h1v1h-1zM69 96h1v1h-1zM88 96h1v1h-1zM24 97h3v1h-3zM56 97h3v1h-3zM88 97h2v1h-2zM3 98h1v1h-1zM24 98h3v1h-3zM28 98h1v1h-1zM35 98h1v1h-1zM56 98h3v1h-3zM60 98h1v1h-1zM67 98h1v1h-1zM88 98h2v1h-2zM23 99h8v1h-8zM55 99h8v1h-8zM87 99h3v1h-3zM0 100h1v1h-1zM22 100h3v1h-3zM26 100h3v1h-3zM30 100h3v1h-3zM54 100h3v1h-3zM58 100h3v1h-3zM62 100h3v1h-3zM86 100h3v1h-3zM0 101h3v1h-3zM22 101h13v1h-13zM54 101h13v1h-13zM86 101h4v1h-4zM0 102h3v1h-3zM21 102h2v1h-2zM24 102h3v1h-3zM28 102h3v1h-3zM32 102h3v1h-3zM53 102h2v1h-2zM56 102h3v1h-3zM60 102h3v1h-3zM64 102h3v1h-3zM85 102h2v1h-2zM88 102h2v1h-2zM0 103h3v1h-3zM21 103h14v1h-14zM53 103h14v1h-14zM85 103h5v1h-5zM0 104h1v1h-1zM2 104h1v1h-1zM20 104h1v1h-1zM22 104h3v1h-3zM26 104h3v1h-3zM30 104h3v1h-3zM34 104h1v1h-1zM52 104h1v1h-1zM54 104h3v1h-3zM58 104h3v1h-3zM62 104h3v1h-3zM66 104h1v1h-1zM84 104h1v1h-1zM86 104h3v1h-3zM0 105h2v1h-2zM20 105h14v1h-14zM52 105h14v1h-14zM84 105h6v1h-6zM0 106h2v1h-2zM20 106h3v1h-3zM24 106h3v1h-3zM28 106h3v1h-3zM32 106h2v1h-2zM52 106h3v1h-3zM56 106h3v1h-3zM60 106h3v1h-3zM64 106h2v1h-2zM84 106h3v1h-3zM88 106h2v1h-2zM0 107h1v1h-1zM19 107h14v1h-14zM51 107h14v1h-14zM83 107h7v1h-7zM0 108h1v1h-1zM20 108h1v1h-1zM22 108h3v1h-3zM26 108h3v1h-3zM30 108h3v1h-3zM52 108h1v1h-1zM54 108h3v1h-3zM58 108h3v1h-3zM62 108h3v1h-3zM84 108h1v1h-1zM86 108h3v1h-3zM22 109h10v1h-10zM54 109h10v1h-10zM86 109h4v1h-4zM19 110h1v1h-1zM24 110h3v1h-3zM28 110h3v1h-3zM51 110h1v1h-1zM56 110h3v1h-3zM60 110h3v1h-3zM83 110h1v1h-1zM88 110h2v1h-2zM26 111h5v1h-5zM58 111h5v1h-5zM17 112h1v1h-1zM21 112h1v1h-1zM28 112h1v1h-1zM30 112h1v1h-1zM49 112h1v1h-1zM53 112h1v1h-1zM60 112h1v1h-1zM62 112h1v1h-1zM81 112h1v1h-1zM85 112h1v1h-1zM15 114h1v1h-1zM19 114h1v1h-1zM23 114h1v1h-1zM27 114h1v1h-1zM47 114h1v1h-1zM51 114h1v1h-1zM55 114h1v1h-1zM59 114h1v1h-1zM79 114h1v1h-1zM83 114h1v1h-1zM87 114h1v1h-1zM17 116h1v1h-1zM21 116h1v1h-1zM25 116h1v1h-1zM49 116h1v1h-1zM53 116h1v1h-1zM57 116h1v1h-1zM81 116h1v1h-1zM85 116h1v1h-1zM89 116h1v1h-1zM15 118h1v1h-1zM19 118h1v1h-1zM23 118h1v1h-1zM27 118h1v1h-1zM47 118h1v1h-1zM51 118h1v1h-1zM55 118h1v1h-1zM59 118h1v1h-1zM79 118h1v1h-1zM83 118h1v1h-1zM87 118h1v1h-1zM13 120h1v1h-1zM17 120h1v1h-1zM21 120h1v1h-1zM25 120h1v1h-1zM45 120h1v1h-1zM49 120h1v1h-1zM53 120h1v1h-1zM57 120h1v1h-1zM77 120h1v1h-1zM81 120h1v1h-1zM85 120h1v1h-1zM89 120h1v1h-1zM12 122h1v1h-1zM19 122h1v1h-1zM23 122h1v1h-1zM44 122h1v1h-1zM51 122h1v1h-1zM55 122h1v1h-1zM76 122h1v1h-1zM83 122h1v1h-1zM87 122h1v1h-1zM11 123h4v1h-4zM43 123h4v1h-4zM75 123h4v1h-4zM10 124h3v1h-3zM14 124h3v1h-3zM21 124h1v1h-1zM42 124h3v1h-3zM46 124h3v1h-3zM53 124h1v1h-1zM74 124h3v1h-3zM78 124h3v1h-3zM85 124h1v1h-1zM10 125h9v1h-9zM42 125h9v1h-9zM74 125h9v1h-9zM9 126h2v1h-2zM12 126h3v1h-3zM16 126h3v1h-3zM20 126h1v1h-1zM41 126h2v1h-2zM44 126h3v1h-3zM48 126h3v1h-3zM52 126h1v1h-1zM73 126h2v1h-2zM76 126h3v1h-3zM80 126h3v1h-3zM84 126h1v1h-1zM9 127h14v1h-14zM41 127h14v1h-14zM73 127h14v1h-14zM8 128h1v1h-1zM10 128h3v1h-3zM14 128h3v1h-3zM18 128h3v1h-3zM22 128h1v1h-1zM40 128h1v1h-1zM42 128h3v1h-3zM46 128h3v1h-3zM50 128h3v1h-3zM54 128h1v1h-1zM72 128h1v1h-1zM74 128h3v1h-3zM78 128h3v1h-3zM82 128h3v1h-3zM86 128h1v1h-1zM8 129h14v1h-14zM40 129h14v1h-14zM72 129h14v1h-14zM8 130h3v1h-3zM12 130h3v1h-3zM16 130h3v1h-3zM20 130h2v1h-2zM40 130h3v1h-3zM44 130h3v1h-3zM48 130h3v1h-3zM52 130h2v1h-2zM72 130h3v1h-3zM76 130h3v1h-3zM80 130h3v1h-3zM84 130h2v1h-2zM7 131h14v1h-14zM39 131h14v1h-14zM71 131h14v1h-14zM6 132h3v1h-3zM10 132h3v1h-3zM14 132h3v1h-3zM18 132h3v1h-3zM38 132h3v1h-3zM42 132h3v1h-3zM46 132h3v1h-3zM50 132h3v1h-3zM70 132h3v1h-3zM74 132h3v1h-3zM78 132h3v1h-3zM82 132h3v1h-3zM6 133h14v1h-14zM38 133h14v1h-14zM70 133h14v1h-14zM8 134h3v1h-3zM12 134h3v1h-3zM16 134h3v1h-3zM40 134h3v1h-3zM44 134h3v1h-3zM48 134h3v1h-3zM72 134h3v1h-3zM76 134h3v1h-3zM80 134h3v1h-3zM10 135h9v1h-9zM42 135h9v1h-9zM74 135h9v1h-9zM5 136h1v1h-1zM12 136h1v1h-1zM14 136h3v1h-3zM18 136h1v1h-1zM37 136h1v1h-1zM44 136h1v1h-1zM46 136h3v1h-3zM50 136h1v1h-1zM69 136h1v1h-1zM76 136h1v1h-1zM78 136h3v1h-3zM82 136h1v1h-1zM14 137h4v1h-4zM46 137h4v1h-4zM78 137h4v1h-4zM3 138h1v1h-1zM7 138h1v1h-1zM11 138h1v1h-1zM16 138h2v1h-2zM35 138h1v1h-1zM39 138h1v1h-1zM43 138h1v1h-1zM48 138h2v1h-2zM67 138h1v1h-1zM71 138h1v1h-1zM75 138h1v1h-1zM80 138h2v1h-2zM5 140h1v1h-1zM9 140h1v1h-1zM13 140h1v1h-1zM37 140h1v1h-1zM41 140h1v1h-1zM45 140h1v1h-1zM69 140h1v1h-1zM73 140h1v1h-1zM77 140h1v1h-1zM3 142h1v1h-1zM7 142h1v1h-1zM11 142h1v1h-1zM15 142h1v1h-1zM35 142h1v1h-1zM39 142h1v1h-1zM43 142h1v1h-1zM47 142h1v1h-1zM67 142h1v1h-1zM71 142h1v1h-1zM75 142h1v1h-1zM79 142h1v1h-1zM1 144h1v1h-1zM5 144h1v1h-1zM9 144h1v1h-1zM13 144h1v1h-1zM33 144h1v1h-1zM37 144h1v1h-1zM41 144h1v1h-1zM45 144h1v1h-1zM65 144h1v1h-1zM69 144h1v1h-1zM73 144h1v1h-1zM77 144h1v1h-1zM3 146h1v1h-1zM7 146h1v1h-1zM11 146h1v1h-1zM35 146h1v1h-1zM39 146h1v1h-1zM43 146h1v1h-1zM67 146h1v1h-1zM71 146h1v1h-1zM75 146h1v1h-1zM0 148h1v1h-1zM5 148h1v1h-1zM9 148h1v1h-1zM30 148h3v1h-3zM37 148h1v1h-1zM41 148h1v1h-1zM62 148h3v1h-3zM69 148h1v1h-1zM73 148h1v1h-1zM0 149h3v1h-3zM30 149h5v1h-5zM62 149h5v1h-5zM0 150h3v1h-3zM4 150h1v1h-1zM11 150h1v1h-1zM29 150h2v1h-2zM32 150h3v1h-3zM36 150h1v1h-1zM43 150h1v1h-1zM61 150h2v1h-2zM64 150h3v1h-3zM68 150h1v1h-1zM75 150h1v1h-1zM0 151h7v1h-7zM29 151h10v1h-10zM61 151h10v1h-10zM0 152h1v1h-1zM2 152h3v1h-3zM6 152h3v1h-3zM28 152h1v1h-1zM30 152h3v1h-3zM34 152h3v1h-3zM38 152h3v1h-3zM60 152h1v1h-1zM62 152h3v1h-3zM66 152h3v1h-3zM70 152h3v1h-3zM0 153h10v1h-10zM28 153h14v1h-14zM60 153h14v1h-14zM0 154h3v1h-3zM4 154h3v1h-3zM8 154h2v1h-2zM28 154h3v1h-3zM32 154h3v1h-3zM36 154h3v1h-3zM40 154h2v1h-2zM60 154h3v1h-3zM64 154h3v1h-3zM68 154h3v1h-3zM72 154h2v1h-2zM0 155h9v1h-9zM27 155h14v1h-14zM59 155h14v1h-14zM0 156h1v1h-1zM2 156h3v1h-3zM6 156h3v1h-3zM26 156h3v1h-3zM30 156h3v1h-3zM34 156h3v1h-3zM38 156h3v1h-3zM58 156h3v1h-3zM62 156h3v1h-3zM66 156h3v1h-3zM70 156h3v1h-3zM0 157h8v1h-8zM26 157h14v1h-14zM58 157h14v1h-14zM0 158h3v1h-3zM4 158h3v1h-3zM25 158h2v1h-2zM28 158h3v1h-3zM32 158h3v1h-3zM36 158h3v1h-3zM57 158h2v1h-2zM60 158h3v1h-3zM64 158h3v1h-3zM68 158h3v1h-3zM89 158h1v1h-1zM0 159h7v1h-7zM26 159h13v1h-13zM58 159h13v1h-13z"/>
<path fill="#732e9c" d="M24 0h1v1h-1zM56 0h1v1h-1zM88 0h1v1h-1zM24 1h3v1h-3zM56 1h3v1h-3zM88 1h2v1h-2zM24 2h3v1h-3zM28 2h1v1h-1zM56 2h3v1h-3zM60 2h1v1h-1zM88 2h2v1h-2zM23 3h8v1h-8zM55 3h8v1h-8zM87 3h3v1h-3zM0 4h1v1h-1zM22 4h3v1h-3zM26 4h3v1h-3zM30 4h3v1h-3zM54 4h3v1h-3zM58 4h3v1h-3zM62 4h3v1h-3zM86 4h3v1h-3zM0 5h3v1h-3zM22 5h13v1h-13zM54 5h13v1h-13zM86 5h4v1h-4zM0 6h3v1h-3zM21 6h2v1h-2zM24 6h3v1h-3zM28 6h3v1h-3zM32 6h3v1h-3zM53 6h2v1h-2zM56 6h3v1h-3zM60 6h3v1h-3zM64 6h3v1h-3zM85 6h2v1h-2zM88 6h2v1h-2zM0 7h3v1h-3zM21 7h14v1h-14zM53 7h14v1h-14zM85 7h5v1h-5zM0 8h1v1h-1zM2 8h1v1h-1zM20 8h1v1h-1zM22 8h3v1h-3zM26 8h3v1h-3zM30 8h3v1h-3zM34 8h1v1h-1zM52 8h1v1h-1zM54 8h3v1h-3zM58 8h3v1h-3zM62 8h3v1h-3zM66 8h1v1h-1zM84 8h1v1h-1zM86 8h3v1h-3zM0 9h2v1h-2zM20 9h14v1h-14zM52 9h14v1h-14zM84 9h6v1h-6zM0 10h2v1h-2zM20 10h3v1h-3zM24 10h3v1h-3zM28 10h3v1h-3zM32 10h2v1h-2zM52 10h3v1h-3zM56 10h3v1h-3zM60 10h3v1h-3zM64 10h2v1h-2zM84 10h3v1h-3zM88 10h2v1h-2zM0 11h1v1h-1zM19 11h14v1h-14zM51 11h14v1h-14zM83 11h7v1h-7zM0 12h1v1h-1zM20 12h1v1h-1zM22 12h3v1h-3zM26 12h3v1h-3zM30 12h3v1h-3zM52 12h1v1h-1zM54 12h3v1h-3zM58 12h3v1h-3zM62 12h3v1h-3zM84 12h1v1h-1zM86 12h3v1h-3zM22 13h10v1h-10zM54 13h10v1h-10zM86 13h4v1h-4zM24 14h3v1h-3zM28 14h3v1h-3zM56 14h3v1h-3zM60 14h3v1h-3zM88 14h2v1h-2zM26 15h5v1h-5zM58 15h5v1h-5zM28 16h1v1h-1zM30 16h1v1h-1zM60 16h1v1h-1zM62 16h1v1h-1zM12 26h1v1h-1zM44 26h1v1h-1zM76 26h1v1h-1zM11 27h4v1h-4zM43 27h4v1h-4zM75 27h4v1h-4zM10 28h3v1h-3zM14 28h3v1h-3zM42 28h3v1h-3zM46 28h3v1h-3zM74 28h3v1h-3zM78 28h3v1h-3zM10 29h9v1h-9zM42 29h9v1h-9zM74 29h9v1h-9zM9 30h2v1h-2zM12 30h3v1h-3zM16 30h3v1h-3zM20 30h1v1h-1zM41 30h2v1h-2zM44 30h3v1h-3zM48 30h3v1h-3zM52 30h1v1h-1zM73 30h2v1h-2zM76 30h3v1h-3zM80 30h3v1h-3zM84 30h1v1h-1zM9 31h14v1h-14zM41 31h14v1h-14zM73 31h14v1h-14zM8 32h1v1h-1zM10 32h3v1h-3zM14 32h3v1h-3zM18 32h3v1h-3zM22 32h1v1h-1zM40 32h1v1h-1zM42 32h3v1h-3zM46 32h3v1h-3zM50 32h3v1h-3zM54 32h1v1h-1zM72 32h1v1h-1zM74 32h3v1h-3zM78 32h3v1h-3zM82 32h3v1h-3zM86 32h1v1h-1zM8 33h14v1h-14zM40 33h14v1h-14zM72 33h14v1h-14zM8 34h3v1h-3zM12 34h3v1h-3zM16 34h3v1h-3zM20 34h2v1h-2zM40 34h3v1h-3zM44 34h3v1h-3zM48 34h3v1h-3zM52 34h2v1h-2zM72 34h3v1h-3zM76 34h3v1h-3zM80 34h3v1h-3zM84 34h2v1h-2zM7 35h14v1h-14zM39 35h14v1h-14zM71 35h14v1h-14zM6 36h3v1h-3zM10 36h3v1h-3zM14 36h3v1h-3zM18 36h3v1h-3zM38 36h3v1h-3zM42 36h3v1h-3zM46 36h3v1h-3zM50 36h3v1h-3zM70 36h3v1h-3zM74 36h3v1h-3zM78 36h3v1h-3zM82 36h3v1h-3zM6 37h14v1h-14zM38 37h14v1h-14zM70 37h14v1h-14zM8 38h3v1h-3zM12 38h3v1h-3zM16 38h3v1h-3zM40 38h3v1h-3zM44 38h3v1h-3zM48 38h3v1h-3zM72 38h3v1h-3zM76 38h3v1h-3zM80 38h3v1h-3zM10 39h9v1h-9zM42 39h9v1h-9zM74 39h9v1h-9zM12 40h1v1h-1zM14 40h3v1h-3zM18 40h1v1h-1zM44 40h1v1h-1zM46 40h3v1h-3zM50 40h1v1h-1zM76 40h1v1h-1zM78 40h3v1h-3zM82 40h1v1h-1zM14 41h4v1h-4zM46 41h4v1h-4zM78 41h4v1h-4zM16 42h2v1h-2zM48 42h2v1h-2zM80 42h2v1h-2zM0 52h1v1h-1zM30 52h3v1h-3zM62 52h3v1h-3zM0 53h3v1h-3zM30 53h5v1h-5zM62 53h5v1h-5zM0 54h3v1h-3zM4 54h1v1h-1zM29 54h2v1h-2zM32 54h3v1h-3zM36 54h1v1h-1zM61 54h2v1h-2zM64 54h3v1h-3zM68 54h1v1h-1zM0 55h7v1h-7zM29 55h10v1h-10zM61 55h10v1h-10zM0 56h1v1h-1zM2 56h3v1h-3zM6 56h3v1h-3zM28 56h1v1h-1zM30 56h3v1h-3zM34 56h3v1h-3zM38 56h3v1h-3zM60 56h1v1h-1zM62 56h3v1h-3zM66 56h3v1h-3zM70 56h3v1h-3zM0 57h10v1h-10zM28 57h14v1h-14zM60 57h14v1h-14zM0 58h3v1h-3zM4 58h3v1h-3zM8 58h2v1h-2zM28 58h3v1h-3zM32 58h3v1h-3zM36 58h3v1h-3zM40 58h2v1h-2zM60 58h3v1h-3zM64 58h3v1h-3zM68 58h3v1h-3zM72 58h2v1h-2zM0 59h9v1h-9zM27 59h14v1h-14zM59 59h14v1h-14zM0 60h1v1h-1zM2 60h3v1h-3zM6 60h3v1h-3zM26 60h3v1h-3zM30 60h3v1h-3zM34 60h3v1h-3zM38 60h3v1h-3zM58 60h3v1h-3zM62 60h3v1h-3zM66 60h3v1h-3zM70 60h3v1h-3zM0 61h8v1h-8zM26 61h14v1h-14zM58 61h14v1h-14zM0 62h3v1h-3zM4 62h3v1h-3zM25 62h2v1h-2zM28 62h3v1h-3zM32 62h3v1h-3zM36 62h3v1h-3zM57 62h2v1h-2zM60 62h3v1h-3zM64 62h3v1h-3zM68 62h3v1h-3zM89 62h1v1h-1zM0 63h7v1h-7zM26 63h13v1h-13zM58 63h13v1h-13zM0 64h1v1h-1zM2 64h3v1h-3zM6 64h1v1h-1zM28 64h1v1h-1zM30 64h3v1h-3zM34 64h3v1h-3zM38 64h1v1h-1zM60 64h1v1h-1zM62 64h3v1h-3zM66 64h3v1h-3zM70 64h1v1h-1zM0 65h6v1h-6zM30 65h8v1h-8zM62 65h8v1h-8zM0 66h3v1h-3zM4 66h2v1h-2zM32 66h3v1h-3zM36 66h2v1h-2zM64 66h3v1h-3zM68 66h2v1h-2zM2 67h3v1h-3zM34 67h3v1h-3zM66 67h3v1h-3zM4 68h1v1h-1zM36 68h1v1h-1zM68 68h1v1h-1zM18 77h1v1h-1zM50 77h1v1h-1zM82 77h1v1h-1zM17 78h2v1h-2zM20 78h1v1h-1zM49 78h2v1h-2zM52 78h1v1h-1zM81 78h2v1h-2zM84 78h1v1h-1zM17 79h6v1h-6zM49 79h6v1h-6zM81 79h6v1h-6zM16 80h1v1h-1zM18 80h3v1h-3zM22 80h3v1h-3zM48 80h1v1h-1zM50 80h3v1h-3zM54 80h3v1h-3zM80 80h1v1h-1zM82 80h3v1h-3zM86 80h3v1h-3zM16 81h11v1h-11zM48 81h11v1h-11zM80 81h10v1h-10zM16 82h3v1h-3zM20 82h3v1h-3zM24 82h3v1h-3zM28 82h1v1h-1zM48 82h3v1h-3zM52 82h3v1h-3zM56 82h3v1h-3zM60 82h1v1h-1zM80 82h3v1h-3zM84 82h3v1h-3zM88 82h2v1h-2zM15 83h14v1h-14zM47 83h14v1h-14zM79 83h11v1h-11zM14 84h3v1h-3zM18 84h3v1h-3zM22 84h3v1h-3zM26 84h3v1h-3zM46 84h3v1h-3zM50 84h3v1h-3zM54 84h3v1h-3zM58 84h3v1h-3zM78 84h3v1h-3zM82 84h3v1h-3zM86 84h3v1h-3zM14 85h14v1h-14zM46 85h14v1h-14zM78 85h12v1h-12zM13 86h2v1h-2zM16 86h3v1h-3zM20 86h3v1h-3zM24 86h3v1h-3zM45 86h2v1h-2zM48 86h3v1h-3zM52 86h3v1h-3zM56 86h3v1h-3zM77 86h2v1h-2zM80 86h3v1h-3zM84 86h3v1h-3zM88 86h2v1h-2zM13 87h14v1h-14zM45 87h14v1h-14zM77 87h13v1h-13zM12 88h1v1h-1zM14 88h3v1h-3zM18 88h3v1h-3zM22 88h3v1h-3zM26 88h1v1h-1zM44 88h1v1h-1zM46 88h3v1h-3zM50 88h3v1h-3zM54 88h3v1h-3zM58 88h1v1h-1zM76 88h1v1h-1zM78 88h3v1h-3zM82 88h3v1h-3zM86 88h3v1h-3zM14 89h12v1h-12zM46 89h12v1h-12zM78 89h12v1h-12zM16 90h3v1h-3zM20 90h3v1h-3zM24 90h2v1h-2zM48 90h3v1h-3zM52 90h3v1h-3zM56 90h2v1h-2zM80 90h3v1h-3zM84 90h3v1h-3zM88 90h2v1h-2zM18 91h7v1h-7zM50 91h7v1h-7zM82 91h7v1h-7zM20 92h1v1h-1zM22 92h3v1h-3zM52 92h1v1h-1zM54 92h3v1h-3zM84 92h1v1h-1zM86 92h3v1h-3zM22 93h2v1h-2zM54 93h2v1h-2zM86 93h2v1h-2zM5 103h2v1h-2zM37 103h2v1h-2zM69 103h2v1h-2zM4 104h1v1h-1zM6 104h3v1h-3zM36 104h1v1h-1zM38 104h3v1h-3zM68 104h1v1h-1zM70 104h3v1h-3zM4 105h7v1h-7zM36 105h7v1h-7zM68 105h7v1h-7zM4 106h3v1h-3zM8 106h3v1h-3zM12 106h1v1h-1zM36 106h3v1h-3zM40 106h3v1h-3zM44 106h1v1h-1zM68 106h3v1h-3zM72 106h3v1h-3zM76 106h1v1h-1zM3 107h12v1h-12zM35 107h12v1h-12zM67 107h12v1h-12zM2 108h3v1h-3zM6 108h3v1h-3zM10 108h3v1h-3zM14 108h3v1h-3zM34 108h3v1h-3zM38 108h3v1h-3zM42 108h3v1h-3zM46 108h3v1h-3zM66 108h3v1h-3zM70 108h3v1h-3zM74 108h3v1h-3zM78 108h3v1h-3zM2 109h14v1h-14zM34 109h14v1h-14zM66 109h14v1h-14zM1 110h2v1h-2zM4 110h3v1h-3zM8 110h3v1h-3zM12 110h3v1h-3zM33 110h2v1h-2zM36 110h3v1h-3zM40 110h3v1h-3zM44 110h3v1h-3zM65 110h2v1h-2zM68 110h3v1h-3zM72 110h3v1h-3zM76 110h3v1h-3zM1 111h14v1h-14zM33 111h14v1h-14zM65 111h14v1h-14zM0 112h1v1h-1zM2 112h3v1h-3zM6 112h3v1h-3zM10 112h3v1h-3zM14 112h1v1h-1zM32 112h1v1h-1zM34 112h3v1h-3zM38 112h3v1h-3zM42 112h3v1h-3zM46 112h1v1h-1zM64 112h1v1h-1zM66 112h3v1h-3zM70 112h3v1h-3zM74 112h3v1h-3zM78 112h1v1h-1zM0 113h14v1h-14zM32 113h14v1h-14zM64 113h14v1h-14zM0 114h3v1h-3zM4 114h3v1h-3zM8 114h3v1h-3zM12 114h2v1h-2zM32 114h3v1h-3zM36 114h3v1h-3zM40 114h3v1h-3zM44 114h2v1h-2zM64 114h3v1h-3zM68 114h3v1h-3zM72 114h3v1h-3zM76 114h2v1h-2zM2 115h11v1h-11zM34 115h11v1h-11zM66 115h11v1h-11zM4 116h1v1h-1zM6 116h3v1h-3zM10 116h3v1h-3zM36 116h1v1h-1zM38 116h3v1h-3zM42 116h3v1h-3zM68 116h1v1h-1zM70 116h3v1h-3zM74 116h3v1h-3zM6 117h6v1h-6zM38 117h6v1h-6zM70 117h6v1h-6zM8 118h3v1h-3zM40 118h3v1h-3zM72 118h3v1h-3zM10 119h1v1h-1zM42 119h1v1h-1zM74 119h1v1h-1zM24 128h1v1h-1zM56 128h1v1h-1zM88 128h1v1h-1zM24 129h3v1h-3zM56 129h3v1h-3zM88 129h2v1h-2zM24 130h3v1h-3zM28 130h1v1h-1zM56 130h3v1h-3zM60 130h1v1h-1zM88 130h2v1h-2zM23 131h8v1h-8zM55 131h8v1h-8zM87 131h3v1h-3zM0 132h1v1h-1zM22 132h3v1h-3zM26 132h3v1h-3zM30 132h3v1h-3zM54 132h3v1h-3zM58 132h3v1h-3zM62 132h3v1h-3zM86 132h3v1h-3zM0 133h3v1h-3zM22 133h13v1h-13zM54 133h13v1h-13zM86 133h4v1h-4zM0 134h3v1h-3zM21 134h2v1h-2zM24 134h3v1h-3zM28 134h3v1h-3zM32 134h3v1h-3zM53 134h2v1h-2zM56 134h3v1h-3zM60 134h3v1h-3zM64 134h3v1h-3zM85 134h2v1h-2zM88 134h2v1h-2zM0 135h3v1h-3zM21 135h14v1h-14zM53 135h14v1h-14zM85 135h5v1h-5zM0 136h1v1h-1zM2 136h1v1h-1zM20 136h1v1h-1zM22 136h3v1h-3zM26 136h3v1h-3zM30 136h3v1h-3zM34 136h1v1h-1zM52 136h1v1h-1zM54 136h3v1h-3zM58 136h3v1h-3zM62 136h3v1h-3zM66 136h1v1h-1zM84 136h1v1h-1zM86 136h3v1h-3zM0 137h2v1h-2zM20 137h14v1h-14zM52 137h14v1h-14zM84 137h6v1h-6zM0 138h2v1h-2zM20 138h3v1h-3zM24 138h3v1h-3zM28 138h3v1h-3zM32 138h2v1h-2zM52 138h3v1h-3zM56 138h3v1h-3zM60 138h3v1h-3zM64 138h2v1h-2zM84 138h3v1h-3zM88 138h2v1h-2zM0 139h1v1h-1zM19 139h14v1h-14zM51 139h14v1h-14zM83 139h7v1h-7zM0 140h1v1h-1zM20 140h1v1h-1zM22 140h3v1h-3zM26 140h3v1h-3zM30 140h3v1h-3zM52 140h1v1h-1zM54 140h3v1h-3zM58 140h3v1h-3zM62 140h3v1h-3zM84 140h1v1h-1zM86 140h3v1h-3zM22 141h10v1h-10zM54 141h10v1h-10zM86 141h4v1h-4zM24 142h3v1h-3zM28 142h3v1h-3zM56 142h3v1h-3zM60 142h3v1h-3zM88 142h2v1h-2zM26 143h5v1h-5zM58 143h5v1h-5zM28 144h1v1h-1zM30 144h1v1h-1zM60 144h1v1h-1zM62 144h1v1h-1zM12 154h1v1h-1zM44 154h1v1h-1zM76 154h1v1h-1zM11 155h4v1h-4zM43 155h4v1h-4zM75 155h4v1h-4zM10 156h3v1h-3zM14 156h3v1h-3zM42 156h3v1h-3zM46 156h3v1h-3zM74 156h3v1h-3zM78 156h3v1h-3zM10 157h9v1h-9zM42 157h9v1h-9zM74 157h9v1h-9zM9 158h2v1h-2zM12 158h3v1h-3zM16 158h3v1h-3zM20 158h1v1h-1zM41 158h2v1h-2zM44 158h3v1h-3zM48 158h3v1h-3zM52 158h1v1h-1zM73 158h2v1h-2zM76 158h3v1h-3zM80 158h3v1h-3zM84 158h1v1h-1zM9 159h14v1h-14zM41 159h14v1h-14zM73 159h14v1h-14z"/></svg>
<span style="left:1428px;top:953.07px;font:normal 20px/1 'Liberation Sans',sans-serif;color:#000;transform:scaleX(0.8416);transform-origin:left center;">Canvas Size</span>
<svg style="left:1532px;top:948px" width="294" height="30" shape-rendering="crispEdges"><rect x="0" y="0" width="294" height="30" fill="#c6c6ca"/><rect x="1" y="1" width="292" height="28" fill="none" stroke="#000" stroke-width="2" stroke-dasharray="2 2"/></svg>
<span style="left:1535.5px;top:953.07px;font:normal 20px/1 'Liberation Sans',sans-serif;color:#000;letter-spacing:0.269px;">Portrait (tiny)</span>
<svg style="left:1806px;top:958px" width="10" height="8" viewBox="0 0 10 8"><path d="M0 0h2.2l2.8 4.2 2.8-4.2h2.2l-4 8h-2z" fill="#1c1612"/></svg>
<span style="left:1835px;top:953.07px;font:normal 20px/1 'Liberation Sans',sans-serif;color:#000;transform:scaleX(0.8210);transform-origin:left center;">90 x 160</span>
<svg style="left:1428px;top:986px" width="160" height="38" shape-rendering="crispEdges"><rect x="0" y="0" width="160" height="38" fill="#c6c6ca"/><rect x="1" y="1" width="158" height="36" fill="none" stroke="#000" stroke-width="2" stroke-dasharray="2 2"/></svg>
<span style="left:1432px;top:994.57px;font:normal 20px/1 'Liberation Sans',sans-serif;color:#000;transform:scaleX(0.8811);transform-origin:left center;">Is Animation</span>
<div style="left:1538px;top:993px;width:46px;height:24px;background:#000;border-radius:5px;"></div>
<div style="left:1540px;top:995px;width:42px;height:20px;background:#6a6461;border-radius:3px;"></div>
<div style="left:1538px;top:993px;width:25px;height:24px;background:#000;border-radius:5px;"></div>
<div style="left:1540px;top:995px;width:21px;height:18px;background:#d6d6da;border-radius:3px;"></div>
<div style="left:1541px;top:1012px;width:19px;height:2px;background:#8c8884;"></div>
<span style="left:1644px;top:994.57px;font:normal 20px/1 'Liberation Sans',sans-serif;color:#000;transform:scaleX(0.8524);transform-origin:left center;">0 Frames</span>
<span style="left:1832px;top:994.57px;font:normal 20px/1 'Liberation Sans',sans-serif;color:#000;transform:scaleX(0.7377);transform-origin:left center;">0 FPS</span>
<div style="left:1596px;top:1021px;width:121px;height:2px;background:#d8d4d0;"></div>
<div style="left:1752px;top:1021px;width:122px;height:2px;background:#d8d4d0;"></div>
<svg style="left:1726px;top:990px" width="10" height="28" viewBox="0 0 10 28" shape-rendering="crispEdges"><path d="M4 0h2v2h2v2h2v4h-2v-2h-2v-2h-2v2h-2v2h-2v-4h2v-2h2z" fill="#000"/><path d="M0 20h2v2h2v2h2v-2h2v-2h2v4h-2v2h-2v2h-2v-2h-2v-2h-2z" fill="#a8a4a0"/></svg>
<svg style="left:1882px;top:990px" width="10" height="28" viewBox="0 0 10 28" shape-rendering="crispEdges"><path d="M4 0h2v2h2v2h2v4h-2v-2h-2v-2h-2v2h-2v2h-2v-4h2v-2h2z" fill="#000"/><path d="M0 20h2v2h2v2h2v-2h2v-2h2v4h-2v2h-2v2h-2v-2h-2v-2h-2z" fill="#a8a4a0"/></svg>
<svg style="left:1428px;top:1033px" width="472" height="30" shape-rendering="crispEdges"><rect x="0" y="0" width="472" height="30" fill="#c6c6ca"/><rect x="1" y="1" width="470" height="28" fill="none" stroke="#000" stroke-width="2" stroke-dasharray="2 2"/></svg>
<span style="left:1594px;top:1037.07px;font:normal 20px/1 'Liberation Sans',sans-serif;color:#000;transform:scaleX(0.7743);transform-origin:left center;">EXPORT AS PNG...</span>
<span style="left:1599px;top:1031.57px;font:normal 20px/1 'Liberation Sans',sans-serif;color:#f6f2ec;transform:scaleX(0.9303);transform-origin:left center;-webkit-text-stroke:0.15px #f6f2ec;text-shadow:2px 2px 0 #5a5654,-1px -1px 0 #5a5654,1px -1px 0 #5a5654,-1px 1px 0 #5a5654,1px 1px 0 #5a5654,2px 0 0 #5a5654,0 2px 0 #5a5654,-1px 0 0 #5a5654,0 -1px 0 #5a5654,2px 1px 0 #5a5654,1px 2px 0 #5a5654;">Playtest Version 03B (January 2025)</span>
<div style="left:348px;top:314px;width:362px;height:4px;background:#5a5350;"></div>
<div style="left:348px;top:100px;width:368px;height:214px;background:#ffdd33;"></div>
<svg style="left:374px;top:106px" width="320" height="14" shape-rendering="crispEdges"><defs><pattern id="nd" width="8" height="8" patternUnits="userSpaceOnUse"><rect x="4" y="0" width="2" height="2" fill="#f09a10"/><rect x="0" y="4" width="2" height="2" fill="#f09a10"/></pattern></defs><rect width="320" height="14" fill="url(#nd)"/></svg>
<div style="left:354px;top:108px;width:14px;height:6px;background:#b5583a;"></div>
<svg style="left:697px;top:104px" width="14" height="14" viewBox="0 0 14 14" shape-rendering="crispEdges"><path d="M0 0h4v2h2v2h2v-2h2v-2h4v4h-2v2h-2v2h2v2h2v4h-4v-2h-2v-2h-2v2h-2v2h-4v-4h2v-2h2v-2h-2v-2h-2z" fill="#b5583a"/></svg>
<span style="left:356px;top:131.07px;font:normal 20px/1 'Liberation Sans',sans-serif;color:#000;transform:scaleX(0.8655);transform-origin:left center;">TODO:</span>
<span style="left:356px;top:161.07px;font:normal 20px/1 'Liberation Sans',sans-serif;color:#000;transform:scaleX(0.9096);transform-origin:left center;">Make a new profile pic</span>
<div style="left:538px;top:160px;width:2px;height:21px;background:#000;"></div>
<svg style="left:708px;top:306px" width="8" height="12" viewBox="0 0 8 12"><path d="M8 0v2L0 12V8z" fill="#5a5350"/><path d="M8 2v6H2z" fill="#fdf1e8"/></svg>
<svg style="left:16px;top:6px" width="36" height="36" viewBox="0 0 18 18" shape-rendering="crispEdges"><path fill="#d8d8d8" d="M1 0h16v1h-16zM0 1h1v1h-1zM17 1h1v1h-1zM0 2h1v1h-1zM2 2h14v1h-14zM17 2h1v1h-1zM0 3h1v1h-1zM2 3h1v1h-1zM15 3h1v1h-1zM17 3h1v1h-1zM0 4h1v1h-1zM2 4h1v1h-1zM7 4h1v1h-1zM15 4h1v1h-1zM17 4h1v1h-1zM0 5h1v1h-1zM2 5h1v1h-1zM6 5h1v1h-1zM15 5h1v1h-1zM17 5h1v1h-1zM0 6h1v1h-1zM2 6h1v1h-1zM5 6h1v1h-1zM15 6h1v1h-1zM17 6h1v1h-1zM0 7h1v1h-1zM2 7h1v1h-1zM4 7h1v1h-1zM15 7h1v1h-1zM17 7h1v1h-1zM0 8h1v1h-1zM2 8h1v1h-1zM15 8h1v1h-1zM17 8h1v1h-1zM0 9h1v1h-1zM2 9h1v1h-1zM15 9h1v1h-1zM17 9h1v1h-1zM0 10h1v1h-1zM2 10h1v1h-1zM15 10h1v1h-1zM17 10h1v1h-1zM0 11h1v1h-1zM2 11h14v1h-14zM17 11h1v1h-1zM0 12h1v1h-1zM17 12h1v1h-1zM1 13h16v1h-16zM0 14h1v1h-1zM17 14h1v1h-1zM0 15h1v1h-1zM12 15h4v1h-4zM17 15h1v1h-1zM0 16h1v1h-1zM17 16h1v1h-1zM1 17h16v1h-16z"/><path fill="#e8185c" d="M2 15h1v1h-1z"/></svg>
<svg style="left:84px;top:6px" width="34" height="34" viewBox="0 0 17 17" shape-rendering="crispEdges"><path fill="#d8d8d8" d="M4 0h2v1h-2zM11 0h2v1h-2zM3 1h1v1h-1zM6 1h1v1h-1zM10 1h1v1h-1zM13 1h1v1h-1zM2 2h1v1h-1zM7 2h3v1h-3zM14 2h1v1h-1zM2 3h1v1h-1zM14 3h1v1h-1zM3 4h1v1h-1zM13 4h1v1h-1zM3 5h1v1h-1zM7 5h3v1h-3zM13 5h1v1h-1zM1 6h3v1h-3zM6 6h1v1h-1zM10 6h1v1h-1zM13 6h3v1h-3zM0 7h1v1h-1zM5 7h1v1h-1zM11 7h1v1h-1zM16 7h1v1h-1zM0 8h1v1h-1zM5 8h1v1h-1zM8 8h1v1h-1zM11 8h1v1h-1zM16 8h1v1h-1zM0 9h1v1h-1zM5 9h1v1h-1zM11 9h1v1h-1zM16 9h1v1h-1zM1 10h3v1h-3zM6 10h1v1h-1zM10 10h1v1h-1zM13 10h3v1h-3zM3 11h1v1h-1zM7 11h3v1h-3zM13 11h1v1h-1zM3 12h1v1h-1zM13 12h1v1h-1zM2 13h1v1h-1zM14 13h1v1h-1zM2 14h1v1h-1zM7 14h3v1h-3zM14 14h1v1h-1zM3 15h1v1h-1zM6 15h1v1h-1zM10 15h1v1h-1zM13 15h1v1h-1zM4 16h2v1h-2zM11 16h2v1h-2z"/></svg>
<svg style="left:150px;top:6px" width="34" height="36" viewBox="0 0 17 18" shape-rendering="crispEdges"><path fill="#d8d8d8" d="M0 0h17v1h-17zM0 1h1v1h-1zM16 1h1v1h-1zM0 2h1v1h-1zM16 2h1v1h-1zM0 3h1v1h-1zM16 3h1v1h-1zM0 4h1v1h-1zM16 4h1v1h-1zM0 5h1v1h-1zM7 5h3v1h-3zM16 5h1v1h-1zM0 6h1v1h-1zM7 6h1v1h-1zM9 6h1v1h-1zM16 6h1v1h-1zM0 7h1v1h-1zM5 7h3v1h-3zM9 7h3v1h-3zM16 7h1v1h-1zM0 8h1v1h-1zM5 8h1v1h-1zM11 8h1v1h-1zM16 8h1v1h-1zM0 9h1v1h-1zM5 9h3v1h-3zM9 9h3v1h-3zM16 9h1v1h-1zM0 10h1v1h-1zM7 10h1v1h-1zM9 10h1v1h-1zM16 10h1v1h-1zM0 11h1v1h-1zM7 11h3v1h-3zM16 11h1v1h-1zM0 12h1v1h-1zM16 12h1v1h-1zM0 13h1v1h-1zM12 13h5v1h-5zM0 14h1v1h-1zM12 14h1v1h-1zM16 14h1v1h-1zM0 15h1v1h-1zM12 15h1v1h-1zM15 15h1v1h-1zM0 16h1v1h-1zM12 16h1v1h-1zM14 16h1v1h-1zM0 17h14v1h-14z"/></svg>
<svg style="left:796px;top:0px" width="48" height="52" viewBox="0 0 24 26" shape-rendering="crispEdges"><path fill="#000000" d="M5 0h4v1h-4zM4 1h1v1h-1zM9 1h2v1h-2zM3 2h1v1h-1zM11 2h2v1h-2zM3 3h1v1h-1zM13 3h2v1h-2zM2 4h1v1h-1zM15 4h2v1h-2zM2 5h1v1h-1zM17 5h2v1h-2zM2 6h1v1h-1zM15 6h2v1h-2zM19 6h1v1h-1zM2 7h2v1h-2zM14 7h1v1h-1zM20 7h1v1h-1zM2 8h1v1h-1zM4 8h2v1h-2zM14 8h1v1h-1zM20 8h1v1h-1zM2 9h1v1h-1zM6 9h2v1h-2zM13 9h1v1h-1zM20 9h1v1h-1zM8 10h2v1h-2zM13 10h1v1h-1zM16 10h2v1h-2zM20 10h1v1h-1zM10 11h2v1h-2zM13 11h1v1h-1zM15 11h1v1h-1zM18 11h1v1h-1zM20 11h1v1h-1zM12 12h2v1h-2zM15 12h1v1h-1zM18 12h1v1h-1zM20 12h1v1h-1zM13 13h1v1h-1zM15 13h3v1h-3zM20 13h1v1h-1zM10 14h1v1h-1zM13 14h1v1h-1zM15 14h1v1h-1zM20 14h1v1h-1zM9 15h3v1h-3zM13 15h1v1h-1zM15 15h1v1h-1zM20 15h1v1h-1zM5 16h1v1h-1zM10 16h4v1h-4zM20 16h1v1h-1zM6 17h2v1h-2zM11 17h1v1h-1zM13 17h1v1h-1zM19 17h1v1h-1zM7 18h8v1h-8zM17 18h2v1h-2zM7 19h1v1h-1zM11 19h6v1h-6zM7 20h1v1h-1zM11 20h4v1h-4zM7 21h1v1h-1zM11 21h1v1h-1zM14 21h1v1h-1zM7 22h1v1h-1zM11 22h1v1h-1zM14 22h1v1h-1zM7 23h1v1h-1zM11 23h1v1h-1zM14 23h1v1h-1zM7 24h8v1h-8z"/><path fill="#33b0ff" d="M5 1h4v1h-4zM4 2h7v1h-7zM4 3h9v1h-9zM3 4h12v1h-12zM3 5h14v1h-14zM3 6h12v1h-12zM17 6h2v1h-2zM4 7h10v1h-10zM15 7h5v1h-5zM3 8h1v1h-1zM6 8h8v1h-8zM15 8h5v1h-5zM3 9h3v1h-3zM8 9h5v1h-5zM14 9h6v1h-6zM3 10h5v1h-5zM10 10h3v1h-3zM14 10h2v1h-2zM18 10h2v1h-2zM5 11h5v1h-5zM12 11h1v1h-1zM14 11h1v1h-1zM16 11h2v1h-2zM19 11h1v1h-1zM7 12h5v1h-5zM14 12h1v1h-1zM16 12h2v1h-2zM19 12h1v1h-1zM9 13h4v1h-4zM14 13h1v1h-1zM18 13h2v1h-2zM5 14h2v1h-2zM9 14h1v1h-1zM11 14h2v1h-2zM14 14h1v1h-1zM16 14h4v1h-4zM5 15h4v1h-4zM12 15h1v1h-1zM14 15h1v1h-1zM16 15h4v1h-4zM6 16h4v1h-4zM14 16h6v1h-6zM8 17h3v1h-3zM12 17h1v1h-1zM14 17h5v1h-5zM15 18h2v1h-2z"/><path fill="#ff0d55" d="M1 10h2v1h-2zM1 11h4v1h-4zM2 12h5v1h-5zM2 13h3v1h-3zM7 13h2v1h-2zM2 14h3v1h-3zM2 15h3v1h-3zM2 16h3v1h-3zM3 17h1v1h-1zM3 18h1v1h-1z"/><path fill="#1a44e0" d="M5 13h2v1h-2zM7 14h2v1h-2z"/><path fill="#a0206c" d="M8 19h3v1h-3zM8 20h3v1h-3zM8 21h3v1h-3zM12 21h2v1h-2z"/><path fill="#ff9a30" d="M8 22h3v1h-3zM12 22h2v1h-2zM8 23h3v1h-3zM12 23h2v1h-2z"/></svg>
<svg style="left:862px;top:0px" width="56" height="52" viewBox="0 0 28 26" shape-rendering="crispEdges"><path fill="#000000" d="M7 0h3v1h-3zM5 1h2v1h-2zM10 1h2v1h-2zM18 1h9v1h-9zM3 2h2v1h-2zM12 2h2v1h-2zM18 2h1v1h-1zM26 2h1v1h-1zM1 3h2v1h-2zM14 3h2v1h-2zM18 3h1v1h-1zM26 3h1v1h-1zM1 4h1v1h-1zM3 4h2v1h-2zM12 4h2v1h-2zM15 4h1v1h-1zM18 4h1v1h-1zM26 4h1v1h-1zM1 5h1v1h-1zM5 5h2v1h-2zM10 5h2v1h-2zM15 5h1v1h-1zM18 5h1v1h-1zM26 5h1v1h-1zM1 6h1v1h-1zM7 6h3v1h-3zM15 6h1v1h-1zM18 6h1v1h-1zM26 6h1v1h-1zM1 7h1v1h-1zM8 7h1v1h-1zM15 7h1v1h-1zM18 7h1v1h-1zM26 7h1v1h-1zM1 8h1v1h-1zM8 8h1v1h-1zM15 8h1v1h-1zM18 8h1v1h-1zM26 8h1v1h-1zM1 9h1v1h-1zM8 9h1v1h-1zM15 9h1v1h-1zM18 9h1v1h-1zM26 9h1v1h-1zM1 10h2v1h-2zM8 10h1v1h-1zM14 10h2v1h-2zM18 10h9v1h-9zM3 11h2v1h-2zM8 11h1v1h-1zM12 11h2v1h-2zM5 12h2v1h-2zM8 12h1v1h-1zM10 12h2v1h-2zM7 13h3v1h-3z"/><path fill="#ffdc2e" d="M7 1h2v1h-2zM5 2h5v1h-5zM3 3h9v1h-9zM5 4h7v1h-7zM14 4h1v1h-1zM7 5h3v1h-3zM12 5h3v1h-3zM10 6h5v1h-5zM9 7h6v1h-6zM9 8h6v1h-6zM9 9h6v1h-6zM9 10h5v1h-5zM9 11h3v1h-3zM9 12h1v1h-1z"/><path fill="#ffffff" d="M9 1h1v1h-1zM10 2h2v1h-2zM12 3h2v1h-2z"/><path fill="#f4efe6" d="M19 2h6v1h-6zM19 3h5v1h-5zM20 4h3v1h-3zM21 5h1v1h-1zM25 5h1v1h-1zM19 6h1v1h-1zM24 6h2v1h-2zM19 7h1v1h-1zM23 7h3v1h-3zM19 8h2v1h-2zM22 8h4v1h-4zM19 9h7v1h-7z"/><path fill="#2eaa6e" d="M25 2h1v1h-1zM24 3h2v1h-2zM19 4h1v1h-1zM23 4h3v1h-3zM19 5h2v1h-2zM22 5h3v1h-3zM20 6h4v1h-4zM20 7h3v1h-3zM21 8h1v1h-1z"/><path fill="#ff8c2e" d="M2 4h1v1h-1zM2 5h3v1h-3zM2 6h5v1h-5zM2 7h6v1h-6zM2 8h6v1h-6zM2 9h6v1h-6zM3 10h5v1h-5zM5 11h3v1h-3zM7 12h1v1h-1z"/><path fill="#3a68a8" d="M1 11h1v1h-1zM15 11h1v1h-1zM18 11h10v1h-10zM1 12h3v1h-3zM13 12h3v1h-3zM3 13h2v1h-2zM12 13h2v1h-2zM5 14h2v1h-2zM10 14h2v1h-2zM6 15h5v1h-5zM2 16h2v1h-2zM6 16h21v1h-21zM2 17h2v1h-2zM6 17h21v1h-21zM2 19h2v1h-2zM6 19h21v1h-21zM2 20h2v1h-2zM6 20h21v1h-21zM2 22h2v1h-2zM6 22h21v1h-21zM2 23h2v1h-2zM6 23h21v1h-21z"/></svg>
<svg style="left:932px;top:0px" width="56" height="52" viewBox="0 0 28 26" shape-rendering="crispEdges"><path fill="#000000" d="M14 0h2v1h-2zM12 1h2v1h-2zM16 1h2v1h-2zM10 2h2v1h-2zM18 2h2v1h-2zM8 3h2v1h-2zM19 3h2v1h-2zM8 4h3v1h-3zM17 4h2v1h-2zM20 4h1v1h-1zM8 5h1v1h-1zM11 5h2v1h-2zM15 5h2v1h-2zM20 5h1v1h-1zM8 6h1v1h-1zM13 6h2v1h-2zM20 6h1v1h-1zM8 7h1v1h-1zM14 7h1v1h-1zM20 7h1v1h-1zM8 8h1v1h-1zM14 8h1v1h-1zM20 8h1v1h-1zM8 9h1v1h-1zM14 9h1v1h-1zM19 9h2v1h-2zM9 10h2v1h-2zM14 10h1v1h-1zM17 10h2v1h-2zM8 11h1v1h-1zM11 11h2v1h-2zM14 11h3v1h-3zM22 11h1v1h-1zM6 12h2v1h-2zM9 12h1v1h-1zM13 12h2v1h-2zM20 12h2v1h-2zM23 12h2v1h-2zM4 13h2v1h-2zM18 13h2v1h-2zM25 13h2v1h-2zM2 14h2v1h-2zM16 14h2v1h-2zM27 14h1v1h-1zM2 15h3v1h-3zM11 15h3v1h-3zM16 15h3v1h-3zM25 15h3v1h-3zM2 16h1v1h-1zM5 16h2v1h-2zM9 16h2v1h-2zM13 16h1v1h-1zM16 16h1v1h-1zM19 16h2v1h-2zM23 16h2v1h-2zM27 16h1v1h-1zM2 17h1v1h-1zM7 17h2v1h-2zM13 17h1v1h-1zM16 17h1v1h-1zM21 17h2v1h-2zM27 17h1v1h-1zM2 18h1v1h-1zM8 18h1v1h-1zM13 18h1v1h-1zM16 18h1v1h-1zM22 18h1v1h-1zM27 18h1v1h-1zM2 19h1v1h-1zM8 19h1v1h-1zM13 19h1v1h-1zM16 19h1v1h-1zM22 19h1v1h-1zM27 19h1v1h-1zM2 20h1v1h-1zM8 20h1v1h-1zM13 20h1v1h-1zM16 20h1v1h-1zM22 20h1v1h-1zM27 20h1v1h-1zM2 21h1v1h-1zM8 21h1v1h-1zM13 21h1v1h-1zM16 21h1v1h-1zM22 21h1v1h-1zM27 21h1v1h-1zM3 22h2v1h-2zM8 22h1v1h-1zM11 22h3v1h-3zM17 22h2v1h-2zM22 22h1v1h-1zM25 22h2v1h-2zM5 23h2v1h-2zM8 23h3v1h-3zM13 23h1v1h-1zM19 23h2v1h-2zM22 23h3v1h-3zM7 24h2v1h-2zM21 24h2v1h-2z"/><path fill="#ffdc2e" d="M14 1h1v1h-1zM12 2h4v1h-4zM10 3h7v1h-7zM11 4h6v1h-6zM19 4h1v1h-1zM13 5h2v1h-2zM17 5h3v1h-3zM15 6h5v1h-5zM15 7h5v1h-5zM15 8h5v1h-5zM15 9h4v1h-4zM15 10h2v1h-2z"/><path fill="#ffffff" d="M15 1h1v1h-1zM16 2h2v1h-2zM17 3h2v1h-2z"/><path fill="#ff8c2e" d="M9 5h2v1h-2zM9 6h4v1h-4zM9 7h5v1h-5zM9 8h5v1h-5zM9 9h5v1h-5zM11 10h3v1h-3zM13 11h1v1h-1z"/><path fill="#1a44e0" d="M10 11h1v1h-1zM18 11h2v1h-2zM10 12h3v1h-3zM16 12h4v1h-4zM11 13h7v1h-7zM13 14h3v1h-3z"/><path fill="#a02880" d="M8 12h1v1h-1zM6 13h5v1h-5zM4 14h9v1h-9zM5 15h6v1h-6zM7 16h2v1h-2z"/><path fill="#3eaa72" d="M22 12h1v1h-1zM20 13h5v1h-5zM18 14h9v1h-9zM19 15h6v1h-6zM17 16h2v1h-2zM21 16h2v1h-2zM25 16h2v1h-2zM17 17h4v1h-4zM23 17h4v1h-4zM17 18h5v1h-5zM23 18h4v1h-4zM17 19h5v1h-5zM23 19h4v1h-4zM17 20h5v1h-5zM23 20h4v1h-4zM17 21h5v1h-5zM23 21h4v1h-4zM19 22h3v1h-3zM23 22h2v1h-2zM21 23h1v1h-1z"/><path fill="#6a6563" d="M14 15h2v1h-2zM14 16h2v1h-2zM14 17h2v1h-2zM14 18h2v1h-2zM14 19h2v1h-2zM14 20h2v1h-2zM14 21h2v1h-2zM14 22h3v1h-3zM11 23h2v1h-2zM14 23h4v1h-4zM10 24h8v1h-8zM10 25h8v1h-8z"/><path fill="#ff0d55" d="M3 16h2v1h-2zM11 16h2v1h-2zM3 17h4v1h-4zM9 17h4v1h-4zM3 18h5v1h-5zM9 18h4v1h-4zM3 19h5v1h-5zM9 19h4v1h-4zM3 20h5v1h-5zM9 20h4v1h-4zM3 21h5v1h-5zM9 21h4v1h-4zM5 22h3v1h-3zM9 22h2v1h-2zM7 23h1v1h-1z"/></svg>
<svg style="left:998px;top:0px" width="68" height="48" viewBox="0 0 34 24" shape-rendering="crispEdges"><path fill="#ff0d55" d="M0 0h32v1h-32zM0 1h32v1h-32zM0 2h5v1h-5zM28 2h4v1h-4zM0 3h5v1h-5zM28 3h4v1h-4zM6 10h6v1h-6zM6 11h6v1h-6zM6 12h6v1h-6zM6 13h6v1h-6zM6 14h6v1h-6zM6 15h6v1h-6z"/><path fill="#000000" d="M5 2h23v1h-23zM5 3h1v1h-1zM12 3h1v1h-1zM19 3h1v1h-1zM26 3h2v1h-2zM5 4h1v1h-1zM12 4h1v1h-1zM19 4h1v1h-1zM26 4h2v1h-2zM5 5h1v1h-1zM12 5h1v1h-1zM19 5h1v1h-1zM26 5h2v1h-2zM5 6h1v1h-1zM12 6h1v1h-1zM19 6h1v1h-1zM26 6h2v1h-2zM5 7h1v1h-1zM12 7h1v1h-1zM19 7h1v1h-1zM26 7h2v1h-2zM5 8h1v1h-1zM12 8h1v1h-1zM19 8h1v1h-1zM26 8h2v1h-2zM5 9h23v1h-23zM5 10h1v1h-1zM12 10h1v1h-1zM5 11h1v1h-1zM12 11h1v1h-1zM23 11h1v1h-1zM5 12h1v1h-1zM12 12h1v1h-1zM22 12h1v1h-1zM24 12h1v1h-1zM5 13h1v1h-1zM12 13h1v1h-1zM21 13h1v1h-1zM25 13h2v1h-2zM5 14h1v1h-1zM12 14h1v1h-1zM20 14h1v1h-1zM27 14h1v1h-1zM5 15h1v1h-1zM12 15h1v1h-1zM19 15h1v1h-1zM28 15h1v1h-1zM5 16h14v1h-14zM27 16h1v1h-1zM19 17h1v1h-1zM27 17h1v1h-1zM20 18h2v1h-2zM26 18h1v1h-1zM22 19h1v1h-1zM25 19h1v1h-1zM23 20h1v1h-1zM25 20h1v1h-1zM24 21h1v1h-1z"/><path fill="#1a30e8" d="M6 3h6v1h-6zM6 4h6v1h-6zM6 5h6v1h-6zM6 6h6v1h-6zM6 7h6v1h-6zM6 8h6v1h-6z"/><path fill="#33aaff" d="M13 3h6v1h-6zM13 4h6v1h-6zM13 5h6v1h-6zM13 6h6v1h-6zM13 7h6v1h-6zM13 8h6v1h-6z"/><path fill="#3ea66e" d="M20 3h6v1h-6zM20 4h6v1h-6zM20 5h6v1h-6zM20 6h6v1h-6zM20 7h6v1h-6zM20 8h6v1h-6z"/><path fill="#ff8c2e" d="M13 10h6v1h-6zM13 11h6v1h-6zM13 12h6v1h-6zM13 13h6v1h-6zM13 14h6v1h-6zM13 15h6v1h-6z"/><path fill="#2d2d2d" d="M19 10h9v1h-9zM19 11h4v1h-4zM24 11h4v1h-4zM19 12h3v1h-3zM25 12h3v1h-3zM19 13h2v1h-2zM27 13h1v1h-1zM19 14h1v1h-1z"/><path fill="#ffdc2e" d="M23 12h1v1h-1zM22 13h3v1h-3zM21 14h6v1h-6zM20 15h8v1h-8zM19 16h8v1h-8zM20 17h7v1h-7zM22 18h4v1h-4zM23 19h2v1h-2zM24 20h1v1h-1z"/><path fill="#6a6563" d="M28 16h1v1h-1zM28 17h2v1h-2zM27 18h2v1h-2zM21 19h1v1h-1zM26 19h3v1h-3zM22 20h1v1h-1zM26 20h2v1h-2zM23 21h1v1h-1zM25 21h2v1h-2zM24 22h3v1h-3zM25 23h1v1h-1z"/></svg>
<svg style="left:1072px;top:0px" width="56" height="52" viewBox="0 0 28 26" shape-rendering="crispEdges"><path fill="#fdf1e8" d="M8 0h13v1h-13zM7 1h6v1h-6zM16 1h6v1h-6zM7 2h4v1h-4zM18 2h4v1h-4zM6 3h3v1h-3zM20 3h3v1h-3zM6 4h3v1h-3zM20 4h3v1h-3zM6 5h3v1h-3zM20 5h3v1h-3zM6 6h3v1h-3zM20 6h3v1h-3zM6 7h3v1h-3zM20 7h3v1h-3zM7 8h2v1h-2zM20 8h2v1h-2zM7 9h2v1h-2zM20 9h2v1h-2zM7 10h4v1h-4zM18 10h3v1h-3zM7 11h6v1h-6zM16 11h4v1h-4zM8 12h11v1h-11zM8 13h9v1h-9zM8 14h3v1h-3zM8 15h2v1h-2zM8 16h1v1h-1z"/><path fill="#000000" d="M13 1h3v1h-3zM11 2h2v1h-2zM16 2h2v1h-2zM9 3h2v1h-2zM18 3h2v1h-2zM9 4h1v1h-1zM11 4h2v1h-2zM16 4h2v1h-2zM19 4h1v1h-1zM9 5h1v1h-1zM13 5h3v1h-3zM19 5h1v1h-1zM9 6h1v1h-1zM14 6h1v1h-1zM19 6h1v1h-1zM9 7h1v1h-1zM14 7h1v1h-1zM19 7h1v1h-1zM9 8h1v1h-1zM14 8h1v1h-1zM19 8h1v1h-1zM9 9h2v1h-2zM14 9h1v1h-1zM18 9h2v1h-2zM11 10h2v1h-2zM14 10h1v1h-1zM16 10h2v1h-2zM4 11h3v1h-3zM13 11h3v1h-3zM21 11h3v1h-3zM3 12h5v1h-5zM20 12h5v1h-5zM3 13h5v1h-5zM20 13h5v1h-5zM3 14h5v1h-5zM20 14h5v1h-5zM3 15h5v1h-5zM20 15h5v1h-5zM4 16h3v1h-3zM21 16h3v1h-3zM3 17h5v1h-5zM20 17h5v1h-5zM2 18h7v1h-7zM19 18h7v1h-7zM2 19h7v1h-7zM19 19h7v1h-7zM2 20h7v1h-7zM19 20h7v1h-7zM2 21h7v1h-7zM19 21h7v1h-7zM1 22h9v1h-9zM18 22h9v1h-9zM1 23h9v1h-9zM18 23h9v1h-9zM1 24h9v1h-9zM18 24h9v1h-9zM1 25h9v1h-9zM18 25h9v1h-9z"/><path fill="#ffdc2e" d="M13 2h2v1h-2zM11 3h5v1h-5zM13 4h3v1h-3zM18 4h1v1h-1zM16 5h3v1h-3zM15 6h4v1h-4zM15 7h4v1h-4zM15 8h4v1h-4zM15 9h3v1h-3zM15 10h1v1h-1z"/><path fill="#ffffff" d="M15 2h1v1h-1zM16 3h2v1h-2z"/><path fill="#ff8c2e" d="M10 4h1v1h-1zM10 5h3v1h-3zM10 6h4v1h-4zM10 7h4v1h-4zM10 8h4v1h-4zM11 9h3v1h-3zM13 10h1v1h-1z"/></svg>
<div style="left:0px;top:48px;width:1920px;height:4px;background:#000;"></div>
<div style="left:1432px;top:16px;width:12px;height:14px;background:#fdf1e8;"></div>
<svg style="left:1466px;top:16px" width="14" height="14" viewBox="0 0 7 7" shape-rendering="crispEdges"><path fill="#fdf1e8" d="M0 0h1v1h-1zM3 0h1v1h-1zM0 1h2v1h-2zM3 1h2v1h-2zM1 2h2v1h-2zM4 2h2v1h-2zM2 3h2v1h-2zM5 3h2v1h-2zM1 4h2v1h-2zM4 4h2v1h-2zM0 5h2v1h-2zM3 5h2v1h-2zM0 6h1v1h-1zM3 6h1v1h-1z"/></svg>
<span style="left:1490px;top:12.57px;font:normal 20px/1 'Liberation Sans',sans-serif;color:#e8e8e8;transform:scaleX(0.8401);transform-origin:left center;">Cubist Bossa</span>
<span style="right:9px;top:3.07px;font:normal 20px/1 'Liberation Sans',sans-serif;color:#e8e8e8;transform:scaleX(0.8257);transform-origin:right center;">THU 2025.1.23</span>
<span style="right:9px;top:25.57px;font:normal 20px/1 'Liberation Sans',sans-serif;color:#e8e8e8;transform:scaleX(0.8527);transform-origin:right center;">08:48 PM</span>
</div>
</body></html>
